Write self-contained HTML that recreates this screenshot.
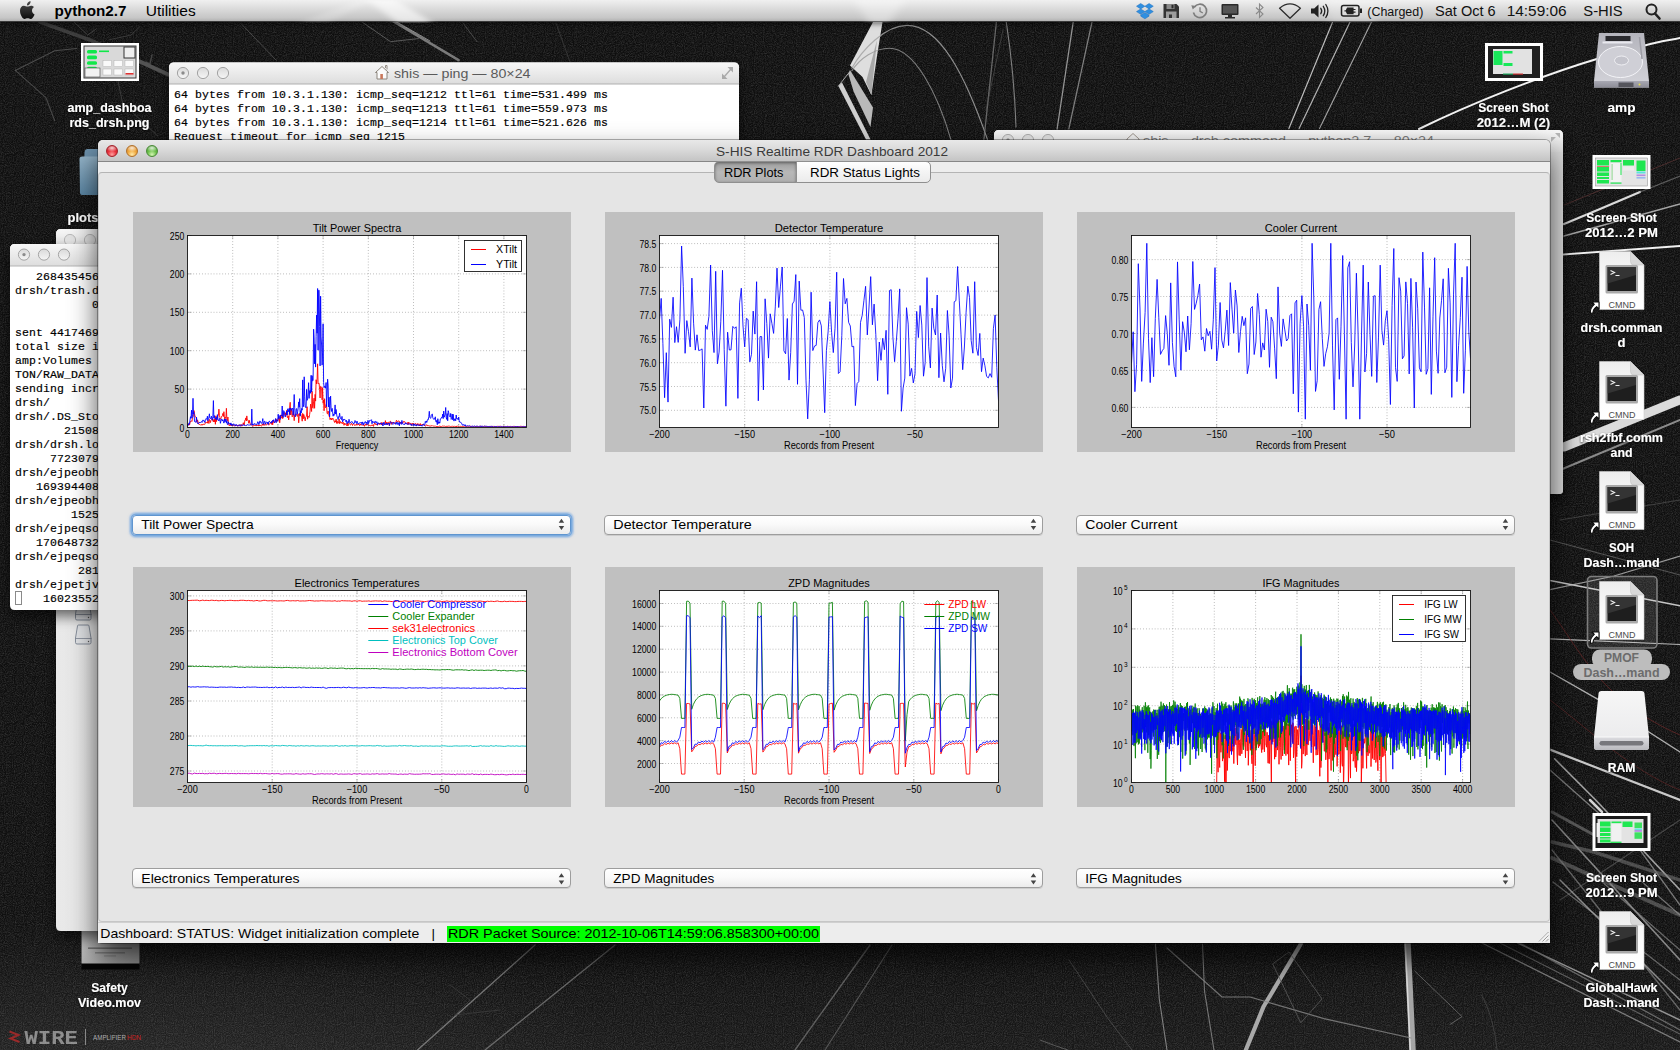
<!DOCTYPE html>
<html><head><meta charset="utf-8"><title>S-HIS Realtime RDR Dashboard 2012</title>
<style>
html,body{margin:0;padding:0;}
body{width:1680px;height:1050px;overflow:hidden;position:relative;background:#1b1b1b;font-family:"Liberation Sans",sans-serif;color:#000;}
.abs{position:absolute;}
svg{position:absolute;overflow:hidden;}
svg.plot .g{stroke:#a0a0a0;stroke-width:1;stroke-dasharray:.8 2.1;stroke-opacity:.85;}
svg.plot .t{stroke:#000;stroke-opacity:.22;stroke-width:1;}
#wall{left:0;top:0;}
/* menubar */
#menubar{position:absolute;left:0;top:0;width:1680px;height:22px;background:linear-gradient(#f0f0f0,#dcdcdc 40%,#c6c6c6 85%,#b2b2b2);border-bottom:1px solid #3a3a3a;box-sizing:border-box;box-shadow:0 2px 5px rgba(0,0,0,.5);}
/* main window */
#win{position:absolute;left:98px;top:140px;width:1452px;height:802.5px;background:#ededed;border-radius:5px 5px 4px 4px;box-shadow:0 14px 28px rgba(0,0,0,.7),0 0 0 1px rgba(0,0,0,.3);}
#win .tb{position:absolute;left:0;top:0;width:100%;height:21px;border-radius:5px 5px 0 0;background:linear-gradient(#e8e8e8,#dadada 45%,#c4c4c4);border-bottom:1px solid #868686;}
#win .tb .ttl{position:absolute;left:0;width:100%;top:3px;text-align:center;font-size:13px;color:#3c3c3c;}
.tl{position:absolute;width:12px;height:12px;border-radius:50%;top:5px;box-sizing:border-box;}
.tl.r{background:radial-gradient(ellipse 60% 38% at 50% 20%,rgba(255,255,255,.8) 0,rgba(255,255,255,0) 100%),radial-gradient(circle at 50% 85%,#ffa0a0 0,#e8303a 45%,#b5161f 100%);border:1px solid #a3222a;}
.tl.y{background:radial-gradient(ellipse 60% 38% at 50% 20%,rgba(255,255,255,.8) 0,rgba(255,255,255,0) 100%),radial-gradient(circle at 50% 85%,#ffe9a8 0,#f0a83c 45%,#c9771c 100%);border:1px solid #b0702a;}
.tl.g{background:radial-gradient(ellipse 60% 38% at 50% 20%,rgba(255,255,255,.8) 0,rgba(255,255,255,0) 100%),radial-gradient(circle at 50% 85%,#d4f5b4 0,#6cc04a 45%,#3e8f2a 100%);border:1px solid #4a8a38;}
.tl.x{background:linear-gradient(#d6d6d6,#f4f4f4);border:1px solid #9a9a9a;}
#pane{position:absolute;left:0px;top:32px;width:1452px;height:750px;background:#e5e5e5;border:1px solid #c6c6c6;border-top-color:#b4b4b4;border-radius:4px;box-sizing:border-box;}
.tabs{position:absolute;left:616px;top:21px;height:22px;}
.tab{position:absolute;top:0;height:22px;box-sizing:border-box;border:1px solid #8f8f8f;font-size:13px;line-height:20px;text-align:center;}
.tab.a{left:0;width:83px;border-radius:5px 0 0 5px;background:linear-gradient(#9c9c9c,#b8b8b8 50%,#b0b0b0);color:#111;box-shadow:inset 0 1px 3px rgba(0,0,0,.4);}
.tab.b{left:82px;width:135px;border-radius:0 5px 5px 0;background:linear-gradient(#ffffff,#f4f4f4 50%,#ebebeb);}
.dd{position:absolute;height:20px;width:439px;box-sizing:border-box;border:1px solid #9d9d9d;border-radius:4px;background:linear-gradient(#ffffff,#fafafa 45%,#ececec);box-shadow:0 1px 0 rgba(0,0,0,.10);}
.dd.f{box-shadow:0 0 0 1.5px #7aaade,0 0 1.5px 2.8px rgba(120,170,228,.5);border-color:#5f95cf;}
#status{position:absolute;left:0;top:782px;width:1452px;height:21px;background:#ededed;border-top:1px solid #d0d0d0;box-sizing:border-box;font-size:13px;line-height:19px;white-space:nowrap;}
#status .grn{position:absolute;left:349px;top:3px;width:373px;height:16px;background:#00ff00;}

</style></head>
<body>
<svg id="wall" width="1680" height="1050" viewBox="0 0 1680 1050">
<defs>
<linearGradient id="wg" x1="0" y1="0" x2="0" y2="1"><stop offset="0" stop-color="#0e0e0e"/><stop offset="0.9" stop-color="#0f0f0f"/><stop offset="1" stop-color="#181818"/></linearGradient>
<filter id="nz" x="0" y="0" width="100%" height="100%"><feTurbulence type="fractalNoise" baseFrequency="0.9" numOctaves="2" seed="3"/><feColorMatrix type="matrix" values="0 0 0 0 1  0 0 0 0 1  0 0 0 0 1  0.55 0.55 0 0 -0.42"/></filter>
<radialGradient id="wr" cx="150" cy="1110" r="520" gradientUnits="userSpaceOnUse" gradientTransform="translate(0,666) scale(1,0.4)"><stop offset="0" stop-color="#fff" stop-opacity=".065"/><stop offset="1" stop-color="#fff" stop-opacity="0"/></radialGradient>
</defs>
<rect width="1680" height="1050" fill="url(#wg)"/><rect y="800" width="900" height="250" fill="url(#wr)"/>
<rect width="1680" height="1050" filter="url(#nz)" opacity="0.34"/>
<path d="M873,22 L882.5,22 L877,56 L871.4,95 L862.5,77 L850,65.5 Z" fill="#dedede" opacity="1"/>
<path d="M877,40 L871.4,95 L866,82 Z" fill="#a8a8a8" opacity="1"/>
<path d="M850,70 L873,107.5 L870.5,127 L853.6,91.4 L848.2,73.6 Z" fill="#b9b9b9" opacity="1"/>
<path d="M838.4,86.1 L842,82.5 L870.5,139.6 L866,139.6 Z" fill="#cfcfcf" opacity="1"/>
<path d="M848.2,73.6 L838.4,86.1" fill="none" stroke="#bbb" stroke-width="1" opacity="0.9" stroke-linecap="round"/>
<path d="M851.8,68.2 C862,50 885,25.4 907,25.4 C940,25.4 965,75 987.5,139.6" fill="none" stroke="#a4a4a4" stroke-width="1.2" opacity="0.85" stroke-linecap="round"/>
<path d="M851.8,70.9 C860,58 875,48.2 889.3,48.2 C915,48.2 938,95 950.9,139.6" fill="none" stroke="#969696" stroke-width="1.1" opacity="0.8" stroke-linecap="round"/>
<path d="M996.4,22 L983.9,139.6" fill="none" stroke="#7a7a7a" stroke-width="1.3" opacity="0.8" stroke-linecap="round"/>
<path d="M1006.3,22 C1012,60 1015,95 1016,127" fill="none" stroke="#9a9a9a" stroke-width="1.1" opacity="0.8" stroke-linecap="round"/>
<path d="M1003,30 L986,110" fill="none" stroke="#555" stroke-width="1" opacity="0.6" stroke-linecap="round"/>
<path d="M1073.2,22 L1057.1,129" fill="none" stroke="#aaa" stroke-width="1.3" opacity="0.85" stroke-linecap="round"/>
<path d="M1092,22 L1068.8,129" fill="none" stroke="#9a9a9a" stroke-width="1.2" opacity="0.8" stroke-linecap="round"/>
<path d="M1332.6,22 L1288.9,128.6" fill="none" stroke="#cfcfcf" stroke-width="1.2" opacity="0.9" stroke-linecap="round"/>
<path d="M1350,22 L1299.1,128.6" fill="none" stroke="#c4c4c4" stroke-width="1.2" opacity="0.9" stroke-linecap="round"/>
<path d="M1371.5,22 L1319.5,128.6" fill="none" stroke="#bdbdbd" stroke-width="1.1" opacity="0.85" stroke-linecap="round"/>
<path d="M40,22 L90,40 L140,61.6 L170,75" fill="none" stroke="#4a4a4a" stroke-width="3.5" opacity="0.75" stroke-linecap="round"/>
<path d="M140,61.6 L168.6,74.7" fill="none" stroke="#5c5c5c" stroke-width="4" opacity="0.7" stroke-linecap="round"/>
<path d="M15.3,70.4 L54.7,50.7 L76.6,48.5" fill="none" stroke="#5a5a5a" stroke-width="1.1" opacity="0.8" stroke-linecap="round"/>
<path d="M15.3,70.4 L46,97.7 L54.7,120.7" fill="none" stroke="#555" stroke-width="1.1" opacity="0.8" stroke-linecap="round"/>
<path d="M74,22 L87.6,35 L96,29" fill="none" stroke="#484848" stroke-width="1" opacity="0.8" stroke-linecap="round"/>
<path d="M118,81 L122.6,103 L157.7,136" fill="none" stroke="#444" stroke-width="1" opacity="0.8" stroke-linecap="round"/>
<path d="M140,26.6 L131,35 L109.5,39.7" fill="none" stroke="#444" stroke-width="1" opacity="0.7" stroke-linecap="round"/>
<path d="M152,55 L150,64 L146,62" fill="none" stroke="#555" stroke-width="1.5" opacity="0.7" stroke-linecap="round"/>
<path d="M393.6,21.5 L458.6,60.2" fill="none" stroke="#8c8c8c" stroke-width="2.6" opacity="0.85" stroke-linecap="round"/>
<path d="M396,21.5 L430,41" fill="none" stroke="#bbb" stroke-width="1" opacity="0.7" stroke-linecap="round"/>
<path d="M362.7,22.5 L390.5,41.7 L418.4,38.6" fill="none" stroke="#6a6a6a" stroke-width="1" opacity="0.8" stroke-linecap="round"/>
<path d="M242,24.6 L276,60" fill="none" stroke="#555" stroke-width="1" opacity="0.8" stroke-linecap="round"/>
<path d="M463,23 L477,41.7" fill="none" stroke="#555" stroke-width="1" opacity="0.8" stroke-linecap="round"/>
<path d="M556,23 L570,62" fill="none" stroke="#3c3c3c" stroke-width="1" opacity="0.8" stroke-linecap="round"/>
<path d="M1419,129 C1470,104 1540,76 1600,58 S1660,42 1680,38" fill="none" stroke="#f2f2f2" stroke-width="2.0" opacity="1" stroke-linecap="round"/>
<path d="M1550,255.500 L1680,246" fill="none" stroke="#f0f0f0" stroke-width="1.8" opacity="1" stroke-linecap="round"/>
<path d="M1564,224 L1600,209 L1640,192" fill="none" stroke="#e6e6e6" stroke-width="2.2" opacity="0.95" stroke-linecap="round"/>
<path d="M1640,192 L1680,176" fill="none" stroke="#777" stroke-width="1.2" opacity="0.7" stroke-linecap="round"/>
<path d="M1564,236 L1680,204" fill="none" stroke="#bdbdbd" stroke-width="1.4" opacity="0.85" stroke-linecap="round"/>
<path d="M1564,205 L1680,158" fill="none" stroke="#6b3a3a" stroke-width="1" opacity="0.6" stroke-linecap="round"/>
<path d="M1564,447 L1680,400" fill="none" stroke="#ececec" stroke-width="9" opacity="0.92" stroke-linecap="round"/>
<path d="M1560,470 L1680,420" fill="none" stroke="#bbb" stroke-width="2" opacity="0.7" stroke-linecap="round"/>
<path d="M1550,580.6 L1680,605.7" fill="none" stroke="#d8d8d8" stroke-width="1.5" opacity="0.9" stroke-linecap="round"/>
<path d="M1550,589.7 L1614,576 L1680,556" fill="none" stroke="#bbb" stroke-width="1.2" opacity="0.8" stroke-linecap="round"/>
<path d="M1550,638.8 L1680,644.5" fill="none" stroke="#d0d0d0" stroke-width="1.2" opacity="0.85" stroke-linecap="round"/>
<path d="M1550,672 L1598,699.4 L1680,752" fill="none" stroke="#c8c8c8" stroke-width="1.4" opacity="0.85" stroke-linecap="round"/>
<path d="M1550,610 C1580,650 1600,700 1680,735" fill="none" stroke="#7a2a2a" stroke-width="1" opacity="0.6" stroke-linecap="round"/>
<path d="M1550,700 C1590,730 1630,770 1680,790" fill="none" stroke="#7a2a2a" stroke-width="1" opacity="0.5" stroke-linecap="round"/>
<path d="M1550,749.6 L1680,800" fill="none" stroke="#dcdcdc" stroke-width="2.2" opacity="0.9" stroke-linecap="round"/>
<path d="M1554.6,758.8 L1595.7,800 L1680,890" fill="none" stroke="#b8b8b8" stroke-width="1.6" opacity="0.85" stroke-linecap="round"/>
<path d="M1550,770 L1640,850 L1680,905" fill="none" stroke="#999" stroke-width="1.3" opacity="0.75" stroke-linecap="round"/>
<path d="M1552,820 L1680,960" fill="none" stroke="#aaa" stroke-width="1.6" opacity="0.75" stroke-linecap="round"/>
<path d="M1552,850 L1680,1010" fill="none" stroke="#888" stroke-width="1.3" opacity="0.7" stroke-linecap="round"/>
<path d="M1560,900 L1680,820" fill="none" stroke="#666" stroke-width="1.2" opacity="0.6" stroke-linecap="round"/>
<path d="M1560,520 L1680,500" fill="none" stroke="#5a5a5a" stroke-width="1.2" opacity="0.6" stroke-linecap="round"/>
<path d="M1550,540 L1680,575" fill="none" stroke="#777" stroke-width="1.2" opacity="0.65" stroke-linecap="round"/>
<path d="M1552,842 L1594,852 L1680,880" fill="none" stroke="#7a7a7a" stroke-width="3.5" opacity="0.55" stroke-linecap="round"/>
<path d="M1552,858 L1680,915" fill="none" stroke="#858585" stroke-width="4" opacity="0.5" stroke-linecap="round"/>
<path d="M1552,812 L1596,836" fill="none" stroke="#8a8a8a" stroke-width="3" opacity="0.55" stroke-linecap="round"/>
<path d="M1590,800 L1602,812" fill="none" stroke="#e8e8e8" stroke-width="2.5" opacity="0.9" stroke-linecap="round"/>
<path d="M1482,943 L1680,1042" fill="none" stroke="#9a9a9a" stroke-width="1.3" opacity="0.75" stroke-linecap="round"/>
<path d="M1517.7,943 L1680,1020" fill="none" stroke="#b0b0b0" stroke-width="1.5" opacity="0.8" stroke-linecap="round"/>
<path d="M1500,943 L1680,1034" fill="none" stroke="#7d7d7d" stroke-width="1.1" opacity="0.7" stroke-linecap="round"/>
<path d="M1553,882 L1680,980" fill="none" stroke="#888" stroke-width="1.3" opacity="0.7" stroke-linecap="round"/>
<path d="M1560,880 L1680,1000" fill="none" stroke="#a8a8a8" stroke-width="1.5" opacity="0.8" stroke-linecap="round"/>
<path d="M1600,880 L1680,950" fill="none" stroke="#8a8a8a" stroke-width="1.2" opacity="0.7" stroke-linecap="round"/>
<path d="M1640,880 L1680,915" fill="none" stroke="#999" stroke-width="1.2" opacity="0.7" stroke-linecap="round"/>
<path d="M1481.5,995 C1490,1010 1495,1030 1497,1050" fill="none" stroke="#4c4c4c" stroke-width="1" opacity="0.7" stroke-linecap="round"/>
<path d="M535,945 L417.5,1050" fill="none" stroke="#8a8a8a" stroke-width="1.4" opacity="0.8" stroke-linecap="round"/>
<path d="M615,945 L485,1050" fill="none" stroke="#7c7c7c" stroke-width="1.3" opacity="0.8" stroke-linecap="round"/>
<path d="M450,985 L470,1000 L455,1015 L500,1010" fill="none" stroke="#3c3c3c" stroke-width="1" opacity="0.8" stroke-linecap="round"/>
<path d="M870,945 L795,1050" fill="none" stroke="#777" stroke-width="1.3" opacity="0.75" stroke-linecap="round"/>
<path d="M892,945 L825,1050" fill="none" stroke="#6c6c6c" stroke-width="1.1" opacity="0.7" stroke-linecap="round"/>
<path d="M1300.8,944 L1263.5,1006.8 L1245.8,1050" fill="none" stroke="#b8b8b8" stroke-width="4.2" opacity="0.9" stroke-linecap="round"/>
<path d="M1407.5,944 L1412.5,1050" fill="none" stroke="#b4b4b4" stroke-width="6.5" opacity="0.9" stroke-linecap="round"/>
<path d="M1405.300,944 L1410.300,1050" fill="none" stroke="#e0e0e0" stroke-width="1.5" opacity="0.9" stroke-linecap="round"/>
<path d="M1167,948 L1222,997 L1250,997 L1324,1018.6 L1411,1038" fill="none" stroke="#8a8a8a" stroke-width="1.2" opacity="0.8" stroke-linecap="round"/>
<path d="M1155.4,944 L1159.3,999 L1167,1050" fill="none" stroke="#9a9a9a" stroke-width="1.1" opacity="0.8" stroke-linecap="round"/>
<path d="M1202.5,944 L1204.5,991 L1214,1050" fill="none" stroke="#8c8c8c" stroke-width="1.1" opacity="0.8" stroke-linecap="round"/>
<path d="M1069,960 L1108,1018.6 L1132,1050" fill="none" stroke="#505050" stroke-width="1" opacity="0.8" stroke-linecap="round"/>
<path d="M1273,963.6 L1289,952 L1322,999 L1301,1022.5 Z" fill="none" stroke="#5c5c5c" stroke-width="1" opacity="0.8" stroke-linecap="round"/>
<path d="M1040,1040 L1056,1046 L1068,1050" fill="none" stroke="#666" stroke-width="1" opacity="0.8" stroke-linecap="round"/>
<path d="M1414.7,971 L1462,1016.6 L1450,1024.5" fill="none" stroke="#6e6e6e" stroke-width="1" opacity="0.8" stroke-linecap="round"/>
<path d="M1520,943 L1680,1030" fill="none" stroke="#888" stroke-width="1.3" opacity="0.7" stroke-linecap="round"/>
<g font-family="Liberation Sans, sans-serif"><text x="24.500" y="1044" font-size="20" font-weight="bold" fill="#d0d0d0" opacity=".6" textLength="53.500" lengthAdjust="spacingAndGlyphs" font-family="Liberation Mono, monospace">WIRE</text><path d="M9.500,1031.500 l9,3.500 l-8,3.500 l9,3.500" stroke="#b52a2a" stroke-width="2" fill="none" opacity=".8"/><rect x="85" y="1029" width="1" height="16" fill="#888"/><text x="93" y="1040" font-size="7" fill="#aaa" textLength="33" lengthAdjust="spacingAndGlyphs">AMPLIFIER</text><text x="127" y="1040" font-size="7" fill="#c22" textLength="14" lengthAdjust="spacingAndGlyphs">HDN</text></g>
</svg>
<svg id="icons" style="left:0;top:0" width="1680" height="1050" viewBox="0 0 1680 1050" font-family="Liberation Sans, sans-serif">
<defs>
<filter id="ts" x="-10%" y="-30%" width="120%" height="170%"><feDropShadow dx="0" dy="1" stdDeviation="0.9" flood-color="#000" flood-opacity=".95"/></filter>
<linearGradient id="docg" x1="0" y1="0" x2="0" y2="1"><stop offset="0" stop-color="#ededed"/><stop offset=".5" stop-color="#fbfbfb"/><stop offset="1" stop-color="#ffffff"/></linearGradient>
<linearGradient id="hddg" x1="0" y1="0" x2="0" y2="1"><stop offset="0" stop-color="#b4b4bc"/><stop offset="1" stop-color="#d4d4da"/></linearGradient>
<linearGradient id="hddf" x1="0" y1="0" x2="0" y2="1"><stop offset="0" stop-color="#a8a8b2"/><stop offset="1" stop-color="#8c8c96"/></linearGradient>
<linearGradient id="ramg" x1="0" y1="0" x2="0" y2="1"><stop offset="0" stop-color="#f6f6f6"/><stop offset="1" stop-color="#e9e9eb"/></linearGradient>
<linearGradient id="ramf" x1="0" y1="0" x2="0" y2="1"><stop offset="0" stop-color="#dcdce0"/><stop offset="1" stop-color="#b9b9be"/></linearGradient>
<linearGradient id="svg1" x1="0" y1="0" x2="1" y2="1"><stop offset="0" stop-color="#d4d4d4"/><stop offset="1" stop-color="#8e8e8e"/></linearGradient>
<linearGradient id="foldg" x1="0" y1="0" x2="0" y2="1"><stop offset="0" stop-color="#94b4c9"/><stop offset="1" stop-color="#5b86a4"/></linearGradient>
</defs>
<rect x="81.0" y="43" width="58" height="38" fill="#fff"/>
<rect x="84.0" y="46" width="52" height="32" fill="#d9d9d9" stroke="#3a3a3a" stroke-width="1"/>
<rect x="87.0" y="50.0" width="10" height="3.6" rx="1.5" fill="#10e84a"/>
<rect x="87.0" y="55.6" width="10" height="3.6" rx="1.5" fill="#10e84a"/>
<rect x="87.0" y="61.2" width="10" height="3.6" rx="1.5" fill="#10e84a"/>
<rect x="87.0" y="66.8" width="10" height="3.6" rx="1.5" fill="#10e84a"/>
<rect x="99.0" y="50.5" width="10" height="1.6" fill="#10e84a"/>
<rect x="124.0" y="47" width="11" height="11" fill="#eee" stroke="#333" stroke-width="1"/>
<rect x="103.0" y="60.5" width="8.5" height="6" fill="#fafafa" stroke="#aaa" stroke-width=".4"/>
<rect x="114.0" y="60.5" width="8.5" height="6" fill="#fafafa" stroke="#aaa" stroke-width=".4"/>
<rect x="125.0" y="60.5" width="8.5" height="6" fill="#fafafa" stroke="#aaa" stroke-width=".4"/>
<rect x="103.0" y="69.0" width="8.5" height="6" fill="#fafafa" stroke="#aaa" stroke-width=".4"/>
<rect x="114.0" y="69.0" width="8.5" height="6" fill="#fafafa" stroke="#aaa" stroke-width=".4"/>
<rect x="125.0" y="69.0" width="8.5" height="6" fill="#fafafa" stroke="#aaa" stroke-width=".4"/>
<rect x="125.5" y="73" width="8" height="1.6" fill="#d33"/>
<rect x="85.0" y="68" width="15" height="9" fill="#f1f1f1" stroke="#444" stroke-width=".6"/>
<text x="109.5" y="111.5" text-anchor="middle" font-size="12.5" font-weight="bold" fill="#fff" textLength="84" lengthAdjust="spacingAndGlyphs" filter="url(#ts)">amp_dashboa</text>
<text x="109.5" y="126.5" text-anchor="middle" font-size="12.5" font-weight="bold" fill="#fff" textLength="80" lengthAdjust="spacingAndGlyphs" filter="url(#ts)">rds_drsh.png</text>
<path d="M84.5,152 q0.5,-3 3,-3 h16 l4,4.5 h31 q2.5,0 2.5,2.500 v36 h-58 Z" fill="#6d92ad"/><path d="M79.5,159 q0,-2.5 2.5,-2.5 h55 q2.5,0 2.5,2.5 l-0.5,34 q0,2 -2,2 h-55 q-2,0 -2,-2 Z" fill="url(#foldg)"/>
<text x="83" y="221.5" text-anchor="middle" font-size="12.5" font-weight="bold" fill="#fff" textLength="31" lengthAdjust="spacingAndGlyphs" filter="url(#ts)">plots</text>
<rect x="81.5" y="925" width="58" height="44.500" fill="#050505"/><rect x="81.5" y="925" width="58" height="38.500" fill="url(#svg1)"/>
<rect x="88" y="947.500" width="44" height="1.300" fill="#555" opacity=".8"/><rect x="95" y="952.300" width="30" height="1.100" fill="#666" opacity=".8"/><rect x="104" y="955.500" width="12" height=".9" fill="#777" opacity=".8"/>
<text x="109.5" y="991.5" text-anchor="middle" font-size="12.5" font-weight="bold" fill="#fff" textLength="36.5" lengthAdjust="spacingAndGlyphs" filter="url(#ts)">Safety</text>
<text x="109.5" y="1006.5" text-anchor="middle" font-size="12.5" font-weight="bold" fill="#fff" textLength="63" lengthAdjust="spacingAndGlyphs" filter="url(#ts)">Video.mov</text>
<rect x="1485.0" y="43" width="58" height="38" fill="#fff"/>
<rect x="1488.0" y="46" width="52" height="32" fill="#202020"/>
<rect x="1493.0" y="49" width="39" height="25" fill="#e2e2e2"/>
<rect x="1493.5" y="51" width="9" height="14" fill="#19e85a"/><rect x="1503.5" y="51" width="9" height="2.5" fill="#19e85a"/><rect x="1503.5" y="63" width="9" height="3" fill="#19e85a"/>
<rect x="1503.0" y="73.5" width="10" height="1.2" fill="#1aa45a"/><rect x="1513.0" y="73.5" width="10" height="1.2" fill="#c33"/>
<text x="1513.5" y="111.5" text-anchor="middle" font-size="12.5" font-weight="bold" fill="#fff" textLength="70.5" lengthAdjust="spacingAndGlyphs" filter="url(#ts)">Screen Shot</text>
<text x="1513.5" y="126.5" text-anchor="middle" font-size="12.5" font-weight="bold" fill="#fff" textLength="73.5" lengthAdjust="spacingAndGlyphs" filter="url(#ts)">2012…M (2)</text>
<path d="M1599.0,33 h45 l5,48 v6.5 h-55 v-6.5 Z" fill="url(#hddg)"/>
<path d="M1594.0,81 h55 v6.5 h-55 Z" fill="url(#hddf)"/>
<rect x="1618.5" y="82.5" width="15" height="4.5" fill="#55555c"/><circle cx="1639.5" cy="84.5" r="1" fill="#e8e04a"/>
<ellipse cx="1620.5" cy="62" rx="22" ry="15.5" fill="#cfcfd6" stroke="#f4f4f8" stroke-width="1"/>
<ellipse cx="1621.5" cy="60.5" rx="7" ry="4.5" fill="#c4c4cc" stroke="#f0f0f4" stroke-width="1"/>
<rect x="1605.5" y="36" width="25" height="5" fill="#2a2a2e"/><rect x="1602.5" y="41.5" width="30" height="2" fill="#e8e8ee"/>
<path d="M1639.5,37 l2.5,22" stroke="#9c9ca4" stroke-width="1.5"/>
<text x="1621.5" y="111.5" text-anchor="middle" font-size="12.5" font-weight="bold" fill="#fff" textLength="28" lengthAdjust="spacingAndGlyphs" filter="url(#ts)">amp</text>
<rect x="1592.5" y="155" width="58" height="34" fill="#fff"/>
<rect x="1595.5" y="158" width="52" height="28" fill="#e4e4e4" stroke="#888" stroke-width=".5"/>
<rect x="1597.0" y="160" width="12" height="5.5" fill="#1fe650"/>
<rect x="1597.0" y="167" width="12" height="4.5" fill="#1fe650"/>
<rect x="1597.0" y="172.5" width="12" height="3.5" fill="#1fe650"/>
<rect x="1597.0" y="177" width="12" height="2" fill="#1fe650"/>
<rect x="1597.0" y="180" width="12" height="3.5" fill="#1fe650"/>
<rect x="1597.0" y="166" width="12" height=".8" fill="#d55"/>
<rect x="1610.5" y="160" width="11" height="2.2" fill="#1fe650"/><rect x="1610.5" y="182.5" width="11" height="1.2" fill="#1fe650"/>
<rect x="1610.5" y="163" width="11" height="19" fill="#f2f2f2"/><rect x="1611.5" y="164" width="1.2" height="16" fill="#6c6" opacity=".6"/><rect x="1620.5" y="163" width="1" height="12" fill="#1fe650"/>
<rect x="1623.0" y="160" width="11" height="5.5" fill="#1fe650"/><rect x="1623.0" y="166.5" width="11" height="4" fill="#ededed"/>
<rect x="1636.5" y="160.5" width="9" height="10.500" fill="#1fe650"/><rect x="1636.5" y="171.5" width="9" height="2" fill="#5ce0e0"/><rect x="1636.5" y="174.5" width="9" height="1.600" fill="#b58ae0"/><rect x="1636.5" y="177" width="9" height="1.600" fill="#9ab8ee"/>
<text x="1621.5" y="221.5" text-anchor="middle" font-size="12.5" font-weight="bold" fill="#fff" textLength="70.7" lengthAdjust="spacingAndGlyphs" filter="url(#ts)">Screen Shot</text>
<text x="1621.5" y="236.5" text-anchor="middle" font-size="12.5" font-weight="bold" fill="#fff" textLength="73" lengthAdjust="spacingAndGlyphs" filter="url(#ts)">2012…2 PM</text>
<path d="M1599.5,251.5 h31 l13.5,13.5 v44.5 h-44.5 Z" fill="url(#docg)" stroke="#cfcfcf" stroke-width=".6"/>
<path d="M1630.5,251.5 v10 q0,3.5 3.5,3.5 h10 Z" fill="#d9d9d9" stroke="#bdbdbd" stroke-width=".5"/>
<rect x="1605.5" y="265.0" width="32.5" height="28.5" rx="1.5" fill="#a9a9a9"/>
<rect x="1607.5" y="267.0" width="28.5" height="24" fill="#1e1e1e"/>
<path d="M1607.5,267.0 h28.5 v8 L1607.5,283.5 Z" fill="#3a3a3a" opacity=".8"/>
<path d="M1610.5,270.5 l4,2 l-4,2 M1615.5,275.5 h4" stroke="#eee" stroke-width="1.2" fill="none"/>
<text x="1622.0" y="307.5" text-anchor="middle" font-size="9.5" fill="#4a4a4a" textLength="27" lengthAdjust="spacingAndGlyphs">CMND</text>
<path d="M1599.0,302.0 h-7 l2.300,2.300 c-3.300,2.800 -4.300,5.600 -3.900,9.200 l2.600,-0.600 c0,-2.600 1.100,-4.600 3.600,-6.300 l2.400,2.400 Z" fill="#fff" stroke="#0c0c0c" stroke-width="1.100" stroke-linejoin="round"/>
<text x="1621.5" y="331.5" text-anchor="middle" font-size="12.5" font-weight="bold" fill="#fff" textLength="82" lengthAdjust="spacingAndGlyphs" filter="url(#ts)">drsh.comman</text>
<text x="1621.5" y="346.5" text-anchor="middle" font-size="12.5" font-weight="bold" fill="#fff" textLength="8" lengthAdjust="spacingAndGlyphs" filter="url(#ts)">d</text>
<path d="M1599.5,361.5 h31 l13.5,13.5 v44.5 h-44.5 Z" fill="url(#docg)" stroke="#cfcfcf" stroke-width=".6"/>
<path d="M1630.5,361.5 v10 q0,3.5 3.5,3.5 h10 Z" fill="#d9d9d9" stroke="#bdbdbd" stroke-width=".5"/>
<rect x="1605.5" y="375.0" width="32.5" height="28.5" rx="1.5" fill="#a9a9a9"/>
<rect x="1607.5" y="377.0" width="28.5" height="24" fill="#1e1e1e"/>
<path d="M1607.5,377.0 h28.5 v8 L1607.5,393.5 Z" fill="#3a3a3a" opacity=".8"/>
<path d="M1610.5,380.5 l4,2 l-4,2 M1615.5,385.5 h4" stroke="#eee" stroke-width="1.2" fill="none"/>
<text x="1622.0" y="417.5" text-anchor="middle" font-size="9.5" fill="#4a4a4a" textLength="27" lengthAdjust="spacingAndGlyphs">CMND</text>
<path d="M1599.0,412.0 h-7 l2.300,2.300 c-3.300,2.800 -4.300,5.600 -3.900,9.200 l2.600,-0.600 c0,-2.600 1.100,-4.600 3.600,-6.300 l2.400,2.400 Z" fill="#fff" stroke="#0c0c0c" stroke-width="1.100" stroke-linejoin="round"/>
<text x="1621.5" y="441.5" text-anchor="middle" font-size="12.5" font-weight="bold" fill="#fff" textLength="83" lengthAdjust="spacingAndGlyphs" filter="url(#ts)">rsh2fbf.comm</text>
<text x="1621.5" y="456.5" text-anchor="middle" font-size="12.5" font-weight="bold" fill="#fff" textLength="22" lengthAdjust="spacingAndGlyphs" filter="url(#ts)">and</text>
<path d="M1599.5,471.5 h31 l13.5,13.5 v44.5 h-44.5 Z" fill="url(#docg)" stroke="#cfcfcf" stroke-width=".6"/>
<path d="M1630.5,471.5 v10 q0,3.5 3.5,3.5 h10 Z" fill="#d9d9d9" stroke="#bdbdbd" stroke-width=".5"/>
<rect x="1605.5" y="485.0" width="32.5" height="28.5" rx="1.5" fill="#a9a9a9"/>
<rect x="1607.5" y="487.0" width="28.5" height="24" fill="#1e1e1e"/>
<path d="M1607.5,487.0 h28.5 v8 L1607.5,503.5 Z" fill="#3a3a3a" opacity=".8"/>
<path d="M1610.5,490.5 l4,2 l-4,2 M1615.5,495.5 h4" stroke="#eee" stroke-width="1.2" fill="none"/>
<text x="1622.0" y="527.5" text-anchor="middle" font-size="9.5" fill="#4a4a4a" textLength="27" lengthAdjust="spacingAndGlyphs">CMND</text>
<path d="M1599.0,522.0 h-7 l2.300,2.300 c-3.300,2.800 -4.300,5.600 -3.900,9.200 l2.600,-0.600 c0,-2.600 1.100,-4.600 3.600,-6.300 l2.400,2.400 Z" fill="#fff" stroke="#0c0c0c" stroke-width="1.100" stroke-linejoin="round"/>
<text x="1621.5" y="551.5" text-anchor="middle" font-size="12.5" font-weight="bold" fill="#fff" textLength="25" lengthAdjust="spacingAndGlyphs" filter="url(#ts)">SOH</text>
<text x="1621.5" y="566.5" text-anchor="middle" font-size="12.5" font-weight="bold" fill="#fff" textLength="76" lengthAdjust="spacingAndGlyphs" filter="url(#ts)">Dash…mand</text>
<rect x="1587.5" y="576.5" width="69.500" height="71.500" rx="4" fill="rgba(255,255,255,.10)" stroke="#7d7d7d" stroke-width="1.6"/>
<path d="M1599.5,581.5 h31 l13.5,13.5 v44.5 h-44.5 Z" fill="url(#docg)" stroke="#cfcfcf" stroke-width=".6"/>
<path d="M1630.5,581.5 v10 q0,3.5 3.5,3.5 h10 Z" fill="#d9d9d9" stroke="#bdbdbd" stroke-width=".5"/>
<rect x="1605.5" y="595.0" width="32.5" height="28.5" rx="1.5" fill="#a9a9a9"/>
<rect x="1607.5" y="597.0" width="28.5" height="24" fill="#1e1e1e"/>
<path d="M1607.5,597.0 h28.5 v8 L1607.5,613.5 Z" fill="#3a3a3a" opacity=".8"/>
<path d="M1610.5,600.5 l4,2 l-4,2 M1615.5,605.5 h4" stroke="#eee" stroke-width="1.2" fill="none"/>
<text x="1622.0" y="637.5" text-anchor="middle" font-size="9.5" fill="#4a4a4a" textLength="27" lengthAdjust="spacingAndGlyphs">CMND</text>
<path d="M1599.0,632.0 h-7 l2.300,2.300 c-3.300,2.800 -4.300,5.600 -3.900,9.200 l2.600,-0.600 c0,-2.600 1.100,-4.600 3.600,-6.300 l2.400,2.400 Z" fill="#fff" stroke="#0c0c0c" stroke-width="1.100" stroke-linejoin="round"/>
<rect x="1592.0" y="649.500" width="60" height="18" rx="8" fill="#bdbdbd"/><rect x="1573.0" y="664" width="97" height="16" rx="8" fill="#bdbdbd"/>
<text x="1621.5" y="661.5" text-anchor="middle" font-size="12.5" font-weight="bold" fill="#6c6c6c" textLength="35" lengthAdjust="spacingAndGlyphs">PMOF</text>
<text x="1621.5" y="676.5" text-anchor="middle" font-size="12.5" font-weight="bold" fill="#6c6c6c" textLength="76" lengthAdjust="spacingAndGlyphs">Dash…mand</text>
<path d="M1598.5,694 q0,-3 3,-3 h40 q3,0 3,3 l4.500,43 v10 q0,3 -3,3 h-49 q-3,0 -3,-3 v-10 Z" fill="url(#ramg)"/>
<path d="M1594.0,737 h55 v10 q0,3 -3,3 h-49 q-3,0 -3,-3 Z" fill="url(#ramf)"/>
<path d="M1594.0,737 h55" stroke="#fff" stroke-width="1" opacity=".8"/>
<rect x="1599.5" y="741" width="44" height="4.500" rx="2.200" fill="#77777c"/>
<text x="1621.5" y="771.5" text-anchor="middle" font-size="12.5" font-weight="bold" fill="#fff" textLength="27.7" lengthAdjust="spacingAndGlyphs" filter="url(#ts)">RAM</text>
<rect x="1592.5" y="813" width="58" height="38" fill="#fff"/>
<rect x="1595.5" y="816" width="52" height="32" fill="#1a1a1a"/>
<rect x="1597.5" y="819" width="46" height="24" fill="#e3e3e3"/><rect x="1596.5" y="823" width="3" height="14" fill="#f2f2f2"/>
<rect x="1600.0" y="821.5" width="10.500" height="5" fill="#1ee850"/>
<rect x="1600.0" y="827.5" width="10.500" height="4.5" fill="#1ee850"/>
<rect x="1600.0" y="833" width="10.500" height="3" fill="#1ee850"/>
<rect x="1600.0" y="837" width="10.500" height="1.6" fill="#1ee850"/>
<rect x="1600.0" y="839.5" width="10.500" height="3" fill="#1ee850"/>
<rect x="1611.5" y="821.5" width="10" height="1.800" fill="#1ee850"/><rect x="1611.5" y="823.5" width="10" height="17.500" fill="#f1f1f1"/><rect x="1610.5" y="841.7" width="11" height="1.200" fill="#1ee850"/>
<rect x="1622.5" y="821.5" width="10" height="5.500" fill="#1ee850"/>
<rect x="1634.5" y="822.5" width="7.500" height="5.500" fill="#3ee060"/><rect x="1634.5" y="828.5" width="7.500" height="1.300" fill="#4fe0e0"/><rect x="1634.5" y="830.3" width="7.500" height="1.300" fill="#a070e0"/><rect x="1634.5" y="832.3" width="7.500" height="6.500" fill="#3ee060"/>
<text x="1621.5" y="881.5" text-anchor="middle" font-size="12.5" font-weight="bold" fill="#fff" textLength="71" lengthAdjust="spacingAndGlyphs" filter="url(#ts)">Screen Shot</text>
<text x="1621.5" y="896.5" text-anchor="middle" font-size="12.5" font-weight="bold" fill="#fff" textLength="72" lengthAdjust="spacingAndGlyphs" filter="url(#ts)">2012…9 PM</text>
<path d="M1599.5,911.5 h31 l13.5,13.5 v44.5 h-44.5 Z" fill="url(#docg)" stroke="#cfcfcf" stroke-width=".6"/>
<path d="M1630.5,911.5 v10 q0,3.5 3.5,3.5 h10 Z" fill="#d9d9d9" stroke="#bdbdbd" stroke-width=".5"/>
<rect x="1605.5" y="925.0" width="32.5" height="28.5" rx="1.5" fill="#a9a9a9"/>
<rect x="1607.5" y="927.0" width="28.5" height="24" fill="#1e1e1e"/>
<path d="M1607.5,927.0 h28.5 v8 L1607.5,943.5 Z" fill="#3a3a3a" opacity=".8"/>
<path d="M1610.5,930.5 l4,2 l-4,2 M1615.5,935.5 h4" stroke="#eee" stroke-width="1.2" fill="none"/>
<text x="1622.0" y="967.5" text-anchor="middle" font-size="9.5" fill="#4a4a4a" textLength="27" lengthAdjust="spacingAndGlyphs">CMND</text>
<path d="M1599.0,962.0 h-7 l2.300,2.300 c-3.300,2.800 -4.300,5.600 -3.900,9.200 l2.600,-0.600 c0,-2.600 1.100,-4.600 3.600,-6.300 l2.400,2.400 Z" fill="#fff" stroke="#0c0c0c" stroke-width="1.100" stroke-linejoin="round"/>
<text x="1621.5" y="991.5" text-anchor="middle" font-size="12.5" font-weight="bold" fill="#fff" textLength="72" lengthAdjust="spacingAndGlyphs" filter="url(#ts)">GlobalHawk</text>
<text x="1621.5" y="1006.5" text-anchor="middle" font-size="12.5" font-weight="bold" fill="#fff" textLength="76" lengthAdjust="spacingAndGlyphs" filter="url(#ts)">Dash…mand</text>
</svg>
<svg id="bw" style="left:0;top:0" width="1680" height="1050" viewBox="0 0 1680 1050" font-family="Liberation Sans, sans-serif">
<defs>
<linearGradient id="tbg" x1="0" y1="0" x2="0" y2="1"><stop offset="0" stop-color="#f7f7f7"/><stop offset="1" stop-color="#dddddd"/></linearGradient>
<linearGradient id="lg" x1="0" y1="0" x2="0" y2="1"><stop offset="0" stop-color="#d9d9d9"/><stop offset="1" stop-color="#f6f6f6"/></linearGradient>
<linearGradient id="fsb" x1="0" y1="0" x2="1" y2="0"><stop offset="0" stop-color="#e9e9e9"/><stop offset="1" stop-color="#dedede"/></linearGradient>
<filter id="ws" x="-10%" y="-10%" width="120%" height="130%"><feDropShadow dx="0" dy="6" stdDeviation="7" flood-color="#000" flood-opacity=".6"/></filter>
<clipPath id="lcl"><rect x="10" y="266" width="90" height="345"/></clipPath>
</defs>
<g filter="url(#ws)"><path d="M994,135 q0,-5 5,-5 h559 q5,0 5,5 v355 q0,4 -4,4 h-561 q-4,0 -4,-4 Z" fill="#e4e4e4"/></g>
<path d="M994,135 q0,-5 5,-5 h559 q5,0 5,5 v17 h-569 Z" fill="url(#tbg)"/>
<g opacity=".85"><circle cx="1008" cy="140" r="5.6" fill="url(#lg)" stroke="#a3a3a3" stroke-width="1"/><circle cx="1008" cy="140" r="1.7" fill="#8b8b8b"/><circle cx="1028" cy="140" r="5.6" fill="url(#lg)" stroke="#a3a3a3" stroke-width="1"/><circle cx="1048" cy="140" r="5.6" fill="url(#lg)" stroke="#a3a3a3" stroke-width="1"/></g>
<text x="1143" y="144.5" font-size="13.5" fill="#7a7a7a" text-anchor="start" textLength="291" lengthAdjust="spacingAndGlyphs" >shis — drsh.command — python2.7 — 80×24</text>
<path d="M1127,145 v-6 l6,-5.500 l6,5.500 v6 Z" fill="none" stroke="#9c948c" stroke-width="1"/>
<path d="M1550,152 h13 v338 q0,4 -4,4 h-9 Z" fill="#dadada"/>
<path d="M1551,137 l5,0 l-5,5 Z M1560,133 l0,5 l-5,-5 Z" fill="#b5b5b5"/>
<g filter="url(#ws)"><path d="M56,234 q0,-5 5,-5 h200 v702 h-200 q-5,0 -5,-5 Z" fill="url(#fsb)"/></g>
<path d="M56,234 q0,-5 5,-5 h200 v24 h-205 Z" fill="url(#tbg)"/><rect x="56" y="252.500" width="205" height="1" fill="#b8b8b8"/>
<g opacity=".7"><circle cx="70" cy="240" r="5.6" fill="url(#lg)" stroke="#a3a3a3" stroke-width="1"/><circle cx="90" cy="240" r="5.6" fill="url(#lg)" stroke="#a3a3a3" stroke-width="1"/><circle cx="110" cy="240" r="5.6" fill="url(#lg)" stroke="#a3a3a3" stroke-width="1"/></g>
<path d="M77.500,602 q0,-1 1,-1 h9.500 q1,0 1,1 l2,12 v4.500 q0,1.500 -1.500,1.500 h-12.500 q-1.500,0 -1.500,-1.500 v-4.500 Z" fill="#dfe1e4" stroke="#7c8492" stroke-width=".9"/><path d="M75.500,614.5 h16" stroke="#7c8492" stroke-width=".8"/><circle cx="88.500" cy="617.5" r=".7" fill="#555"/>
<path d="M77.500,626 q0,-1 1,-1 h9.500 q1,0 1,1 l2,12 v4.500 q0,1.500 -1.500,1.500 h-12.500 q-1.500,0 -1.500,-1.500 v-4.500 Z" fill="#dfe1e4" stroke="#7c8492" stroke-width=".9"/><path d="M75.500,638.5 h16" stroke="#7c8492" stroke-width=".8"/><circle cx="88.500" cy="641.5" r=".7" fill="#555"/>
<g filter="url(#ws)"><path d="M10,249 q0,-5 5,-5 h200 v366 h-200 q-5,0 -5,-5 Z" fill="#fff"/></g>
<path d="M10,249 q0,-5 5,-5 h200 v22 h-205 Z" fill="url(#tbg)"/><rect x="10" y="265.500" width="205" height="1" fill="#b4b4b4"/>
<circle cx="24" cy="254.6" r="5.6" fill="url(#lg)" stroke="#a3a3a3" stroke-width="1"/><circle cx="24" cy="254.6" r="1.7" fill="#8b8b8b"/><circle cx="44" cy="254.6" r="5.6" fill="url(#lg)" stroke="#a3a3a3" stroke-width="1"/><circle cx="64" cy="254.6" r="5.6" fill="url(#lg)" stroke="#a3a3a3" stroke-width="1"/>
<g font-family="Liberation Mono, monospace" font-size="11.500" fill="#000" clip-path="url(#lcl)" stroke="#000" stroke-width=".18">
<text x="36" y="280.0" textLength="63" lengthAdjust="spacing">268435456</text>
<text x="15" y="294.0" textLength="84" lengthAdjust="spacing">drsh/trash.d</text>
<text x="92" y="308.0" textLength="7" lengthAdjust="spacing">0</text>
<text x="15" y="336.0" textLength="84" lengthAdjust="spacing">sent 4417469</text>
<text x="15" y="350.0" textLength="84" lengthAdjust="spacing">total size i</text>
<text x="15" y="364.0" textLength="77" lengthAdjust="spacing">amp:Volumes</text>
<text x="15" y="378.0" textLength="84" lengthAdjust="spacing">TON/RAW_DATA</text>
<text x="15" y="392.0" textLength="84" lengthAdjust="spacing">sending incr</text>
<text x="15" y="406.0" textLength="35" lengthAdjust="spacing">drsh/</text>
<text x="15" y="420.0" textLength="84" lengthAdjust="spacing">drsh/.DS_Sto</text>
<text x="64" y="434.0" textLength="35" lengthAdjust="spacing">21508</text>
<text x="15" y="448.0" textLength="84" lengthAdjust="spacing">drsh/drsh.lo</text>
<text x="50" y="462.0" textLength="49" lengthAdjust="spacing">7723079</text>
<text x="15" y="476.0" textLength="84" lengthAdjust="spacing">drsh/ejpeobh</text>
<text x="36" y="490.0" textLength="63" lengthAdjust="spacing">169394408</text>
<text x="15" y="504.0" textLength="84" lengthAdjust="spacing">drsh/ejpeobh</text>
<text x="71" y="518.0" textLength="28" lengthAdjust="spacing">1525</text>
<text x="15" y="532.0" textLength="84" lengthAdjust="spacing">drsh/ejpeqso</text>
<text x="36" y="546.0" textLength="63" lengthAdjust="spacing">170648732</text>
<text x="15" y="560.0" textLength="84" lengthAdjust="spacing">drsh/ejpeqso</text>
<text x="78" y="574.0" textLength="21" lengthAdjust="spacing">281</text>
<text x="15" y="588.0" textLength="84" lengthAdjust="spacing">drsh/ejpetjv</text>
<text x="43" y="602.0" textLength="56" lengthAdjust="spacing">16023552</text>
</g>
<rect x="15.500" y="591.500" width="6" height="13" fill="none" stroke="#8a8a8a" stroke-width="1"/>
<g filter="url(#ws)"><path d="M169,67.500 q0,-5 5,-5 h560 q5,0 5,5 v90 h-570 Z" fill="#fff"/></g>
<path d="M169,67.500 q0,-5 5,-5 h560 q5,0 5,5 v16.500 h-570 Z" fill="url(#tbg)"/><rect x="169" y="83.500" width="570" height="1" fill="#b0b0b0"/>
<circle cx="183" cy="73" r="5.6" fill="url(#lg)" stroke="#a3a3a3" stroke-width="1"/><circle cx="183" cy="73" r="1.7" fill="#8b8b8b"/><circle cx="203" cy="73" r="5.6" fill="url(#lg)" stroke="#a3a3a3" stroke-width="1"/><circle cx="223" cy="73" r="5.6" fill="url(#lg)" stroke="#a3a3a3" stroke-width="1"/>
<text x="394" y="78" font-size="13.5" fill="#5a5a5a" text-anchor="start" textLength="136.5" lengthAdjust="spacingAndGlyphs" >shis — ping — 80×24</text>
<path d="M377,79 v-6.500 h-1.500 l6.500,-6 l6.500,6 h-1.500 v6.500 Z" fill="#fbfbfb" stroke="#8c857c" stroke-width="1"/><rect x="380.300" y="74" width="2.600" height="5" fill="#c9785c"/><path d="M385.500,68 v-2.500 h1.500 v4" stroke="#8c857c" fill="none" stroke-width=".9"/>
<g fill="#a9a9a9"><path d="M733,67 l-5.500,0 l5.500,5.500 Z"/><path d="M722,79 l5.500,0 l-5.500,-5.500 Z"/></g><path d="M724,77 l7,-8" stroke="#a9a9a9" stroke-width="1.400"/>
<g font-family="Liberation Mono, monospace" font-size="11.500" fill="#000" stroke="#000" stroke-width=".18">
<text x="174" y="98.0" textLength="434" lengthAdjust="spacing">64 bytes from 10.3.1.130: icmp_seq=1212 ttl=61 time=531.499 ms</text>
<text x="174" y="112.1" textLength="434" lengthAdjust="spacing">64 bytes from 10.3.1.130: icmp_seq=1213 ttl=61 time=559.973 ms</text>
<text x="174" y="126.1" textLength="434" lengthAdjust="spacing">64 bytes from 10.3.1.130: icmp_seq=1214 ttl=61 time=521.626 ms</text>
<text x="174" y="140.2" textLength="231" lengthAdjust="spacing">Request timeout for icmp_seq 1215</text>
</g>
</svg>
<div id="menubar"></div>
<svg id="mb" style="left:0;top:0" width="1680" height="23" viewBox="0 0 1680 23" font-family="Liberation Sans, sans-serif">
<defs><filter id="mbl" x="-20%" y="-100%" width="140%" height="300%"><feGaussianBlur stdDeviation="5 1"/></filter></defs>
<g filter="url(#mbl)"><path d="M368,0 L396,0 L432,22 L396,22 Z" fill="#fff" opacity=".6"/><path d="M300,22 L360,0 L372,0 L330,22 Z" fill="#fff" opacity=".18"/>
<path d="M855,0 L905,0 L890,22 L868,22 Z" fill="#fff" opacity=".35"/><path d="M1325,0 L1385,0 L1375,22 L1330,22 Z" fill="#fff" opacity=".22"/></g>
<defs><linearGradient id="apg" x1="0" y1="0" x2="0" y2="1"><stop offset="0" stop-color="#4a4a4a"/><stop offset=".55" stop-color="#2a2a2a"/><stop offset="1" stop-color="#0c0c0c"/></linearGradient></defs>
<path d="M27.5,6.6 C26.3,6.6 25.3,5.7 23.9,5.7 C21.6,5.7 20.0,7.8 20.0,10.7 C20.0,14.6 22.6,19.0 24.6,19.0 C25.7,19.0 26.3,18.3 27.6,18.3 C28.9,18.3 29.4,19.0 30.6,19.0 C32.2,19.0 33.9,16.3 34.6,14.4 C32.9,13.7 32.0,12.3 32.0,10.6 C32.0,9.1 32.8,7.9 34.0,7.1 C33.2,6.1 32.0,5.7 31.0,5.7 C29.6,5.7 28.6,6.6 27.5,6.6 Z M30.6,1.3 C30.7,2.4 30.3,3.4 29.6,4.2 C28.9,5.0 27.9,5.5 27.0,5.4 C26.9,4.4 27.4,3.3 28.0,2.6 C28.7,1.8 29.8,1.3 30.6,1.3 Z" fill="url(#apg)"/>
<text x="54.5" y="16" font-size="14.5" fill="#000" text-anchor="start" textLength="72" lengthAdjust="spacingAndGlyphs" font-weight="bold" >python2.7</text>
<text x="145.7" y="16" font-size="14.5" fill="#000" text-anchor="start" textLength="50" lengthAdjust="spacingAndGlyphs" >Utilities</text>
<g fill="#2f8fe0" stroke="#1c6fc0" stroke-width=".5"><path d="M1140.7,3.5 l4.2,2.7 l-4.2,2.7 l-4.2,-2.700 Z"/><path d="M1149.100,3.500 l4.200,2.700 l-4.200,2.700 l-4.200,-2.700 Z"/><path d="M1140.700,8.900 l4.200,2.700 l-4.200,2.700 l-4.200,-2.700 Z" /><path d="M1149.100,8.900 l4.200,2.700 l-4.200,2.700 l-4.200,-2.700 Z"/><path d="M1144.900,12.400 l4.100,2.600 l0,1.200 l-4.100,2.600 l-4.100,-2.600 l0,-1.200 Z"/></g>
<path d="M1163.500,4 h13 l2.500,2.500 v11.500 h-15.500 Z" fill="#333"/><rect x="1166.5" y="4" width="8" height="5" fill="#8a8a8a"/><rect x="1171.500" y="4.800" width="2" height="3.500" fill="#2a2a2a"/><rect x="1166" y="11.500" width="10.500" height="6.500" fill="#9c9c9c"/><rect x="1169" y="14.500" width="3" height="3.500" fill="#333"/>
<g fill="none" stroke="#7d7d7d" stroke-width="1.600"><path d="M1194.300,7.200 a6.700,6.700 0 1 1 -0.900,5.300"/><path d="M1200,7.300 v4 l2.800,1.700" stroke-width="1.300"/></g><path d="M1191.300,5.300 l4.800,0.600 l-3.300,3.600 Z" fill="#7d7d7d"/>
<rect x="1221.500" y="4" width="17" height="11" rx="1" fill="#2a2a2a"/><rect x="1223" y="5.500" width="14" height="8" fill="#555"/><rect x="1228" y="15" width="4" height="2" fill="#2a2a2a"/><rect x="1225" y="17" width="10" height="1.500" fill="#2a2a2a"/>
<path d="M1256,7.500 l7,6.500 l-3.500,3.500 v-13.500 l3.500,3.500 l-7,6.500" fill="none" stroke="#8a8a8a" stroke-width="1.100"/>
<path d="M1290,18.200 L1279.600,8.200 Q1290,-0.300 1300.400,8.200 Z" fill="none" stroke="#2c2c2c" stroke-width="1.300" stroke-linejoin="round"/>
<path d="M1311,8.500 h3.200 l4.300,-4 v13 l-4.300,-4 h-3.200 Z" fill="#222"/><g fill="none" stroke="#222" stroke-width="1.300" stroke-linecap="round"><path d="M1320.800,8.300 q1.800,2.700 0,5.400"/><path d="M1323.300,6.300 q3,4.700 0,9.400"/><path d="M1325.800,4.500 q4.200,6.500 0,13"/></g>
<rect x="1341.500" y="5.500" width="17.500" height="10.500" rx="2" fill="none" stroke="#222" stroke-width="1.500"/><rect x="1360" y="8.500" width="2" height="4.500" fill="#222"/><path d="M1344.500,10.800 h3 M1347.500,8 h5.500 v5.600 h-5.500 q-2,-2.800 0,-5.600 Z M1353,9.500 h2.500 M1353,12.100 h2.500" fill="#222" stroke="#222" stroke-width="1.200"/>
<text x="1367.3" y="15.5" font-size="12.5" fill="#111" text-anchor="start" textLength="56" lengthAdjust="spacingAndGlyphs" >(Charged)</text>
<text x="1435" y="16" font-size="14.5" fill="#111" text-anchor="start" textLength="60.7" lengthAdjust="spacingAndGlyphs" >Sat Oct 6</text>
<text x="1506.7" y="16" font-size="14.5" fill="#111" text-anchor="start" textLength="60" lengthAdjust="spacingAndGlyphs" >14:59:06</text>
<text x="1583.3" y="16" font-size="14.5" fill="#111" text-anchor="start" textLength="39.4" lengthAdjust="spacingAndGlyphs" >S-HIS</text>
<circle cx="1651.500" cy="9.500" r="5" fill="none" stroke="#222" stroke-width="2"/><path d="M1655,13.500 l4.500,5" stroke="#222" stroke-width="2.600" stroke-linecap="round"/>
</svg>
<div id="win">
<div class="tb"><div class="tl r" style="left:8px"></div><div class="tl y" style="left:28px"></div><div class="tl g" style="left:48px"></div></div>
<div id="pane"></div>
<div class="tabs"><div class="tab a"></div><div class="tab b"></div></div>
<div class="dd f" style="left:34px;top:374.5px"></div>
<div class="dd" style="left:506px;top:374.5px"></div>
<div class="dd" style="left:978px;top:374.5px"></div>
<div class="dd" style="left:34px;top:728.1px"></div>
<div class="dd" style="left:506px;top:728.1px"></div>
<div class="dd" style="left:978px;top:728.1px"></div>
<div id="status"><span class="grn"></span></div>
</div>
<svg id="wtxt" style="left:0;top:0" width="1680" height="1050" viewBox="0 0 1680 1050" font-family="Liberation Sans, sans-serif">
<path d="M1539,941.500 l9.500,-9.500 M1542.500,941.500 l6,-6 M1546,941.500 l2.500,-2.500" stroke="#9a9a9a" stroke-width="1"/><path d="M1540,941.500 l8.500,-8.500 M1543.500,941.500 l5,-5" stroke="#fafafa" stroke-width=".8"/>
<text x="832" y="155.5" font-size="13.5" fill="#3a3a3a" text-anchor="middle" textLength="232" lengthAdjust="spacingAndGlyphs" >S-HIS Realtime RDR Dashboard 2012</text>
<text x="753.7" y="177" font-size="13.5" fill="#000" text-anchor="middle" textLength="59.5" lengthAdjust="spacingAndGlyphs" >RDR Plots</text>
<text x="865" y="177" font-size="13.5" fill="#000" text-anchor="middle" textLength="110" lengthAdjust="spacingAndGlyphs" >RDR Status Lights</text>
<text x="141.3" y="528.6" font-size="13.5" fill="#000" text-anchor="start" textLength="112.3" lengthAdjust="spacingAndGlyphs" >Tilt Power Spectra</text>
<path d="M558.7,522.7 l2.75,-3.9 l2.75,3.9 Z M558.7,525.9 h5.5 l-2.75,4.1 Z" fill="#454545"/>
<text x="613.3" y="528.6" font-size="13.5" fill="#000" text-anchor="start" textLength="138.4" lengthAdjust="spacingAndGlyphs" >Detector Temperature</text>
<path d="M1030.7,522.7 l2.75,-3.9 l2.75,3.9 Z M1030.7,525.9 h5.5 l-2.75,4.1 Z" fill="#454545"/>
<text x="1085.3" y="528.6" font-size="13.5" fill="#000" text-anchor="start" textLength="92" lengthAdjust="spacingAndGlyphs" >Cooler Current</text>
<path d="M1502.7,522.7 l2.75,-3.9 l2.75,3.9 Z M1502.7,525.9 h5.5 l-2.75,4.1 Z" fill="#454545"/>
<text x="141.3" y="883.1" font-size="13.5" fill="#000" text-anchor="start" textLength="158.3" lengthAdjust="spacingAndGlyphs" >Electronics Temperatures</text>
<path d="M558.7,877.2 l2.75,-3.9 l2.75,3.9 Z M558.7,880.4 h5.5 l-2.75,4.1 Z" fill="#454545"/>
<text x="613.3" y="883.1" font-size="13.5" fill="#000" text-anchor="start" textLength="101" lengthAdjust="spacingAndGlyphs" >ZPD Magnitudes</text>
<path d="M1030.7,877.2 l2.75,-3.9 l2.75,3.9 Z M1030.7,880.4 h5.5 l-2.75,4.1 Z" fill="#454545"/>
<text x="1085.3" y="883.1" font-size="13.5" fill="#000" text-anchor="start" textLength="96.4" lengthAdjust="spacingAndGlyphs" >IFG Magnitudes</text>
<path d="M1502.7,877.2 l2.75,-3.9 l2.75,3.9 Z M1502.7,880.4 h5.5 l-2.75,4.1 Z" fill="#454545"/>
<text x="100.3" y="938" font-size="13.5" fill="#000" text-anchor="start" textLength="319" lengthAdjust="spacingAndGlyphs" >Dashboard: STATUS: Widget initialization complete</text>
<text x="431.5" y="938" font-size="13.5" fill="#000" text-anchor="start" >|</text>
<text x="448" y="938" font-size="13.5" fill="#000" text-anchor="start" textLength="371" lengthAdjust="spacingAndGlyphs" >RDR Packet Source: 2012-10-06T14:59:06.858300+00:00</text>
</svg>
<svg class="plot" style="left:133px;top:212px" width="438" height="240" viewBox="133 212 438 240" font-family="Liberation Sans, sans-serif">
<defs><clipPath id="cp1"><rect x="187.5" y="235.5" width="339.0" height="192.0"/></clipPath></defs>
<rect x="133" y="212" width="438" height="240" fill="#c0c0c0"/>
<rect x="187.5" y="235.5" width="339.0" height="192.0" fill="#fff"/>
<line x1="232.7" y1="235.5" x2="232.7" y2="427.5" class="g"/>
<line x1="277.9" y1="235.5" x2="277.9" y2="427.5" class="g"/>
<line x1="323.1" y1="235.5" x2="323.1" y2="427.5" class="g"/>
<line x1="368.3" y1="235.5" x2="368.3" y2="427.5" class="g"/>
<line x1="413.5" y1="235.5" x2="413.5" y2="427.5" class="g"/>
<line x1="458.7" y1="235.5" x2="458.7" y2="427.5" class="g"/>
<line x1="503.9" y1="235.5" x2="503.9" y2="427.5" class="g"/>
<line x1="187.5" y1="389.1" x2="526.5" y2="389.1" class="g"/>
<line x1="187.5" y1="350.7" x2="526.5" y2="350.7" class="g"/>
<line x1="187.5" y1="312.3" x2="526.5" y2="312.3" class="g"/>
<line x1="187.5" y1="273.9" x2="526.5" y2="273.9" class="g"/>
<g clip-path="url(#cp1)">
<path d="M187.5,425.2 L188.0,425.5 L188.5,425.0 L189.0,423.7 L189.5,425.1 L190.0,422.8 L190.5,421.2 L191.0,421.7 L191.5,420.7 L192.0,421.3 L192.5,417.6 L193.0,417.1 L193.5,414.3 L194.0,410.6 L194.5,413.7 L195.0,416.5 L195.5,416.7 L196.0,417.1 L196.5,418.8 L197.0,422.3 L197.5,419.9 L198.0,421.5 L198.5,424.0 L199.0,424.3 L199.5,424.5 L200.0,424.5 L200.5,425.1 L201.0,424.9 L201.5,424.4 L202.0,425.3 L202.5,424.4 L203.0,424.9 L203.5,424.1 L204.0,424.2 L204.4,424.6 L204.9,424.3 L205.4,422.4 L205.9,422.5 L206.4,422.6 L206.9,422.2 L207.4,423.2 L207.9,420.2 L208.4,421.1 L208.9,423.5 L209.4,419.4 L209.9,420.5 L210.4,422.6 L210.9,420.5 L211.4,419.8 L211.9,418.5 L212.4,419.3 L212.9,420.9 L213.4,421.9 L213.9,419.3 L214.4,421.9 L214.9,418.9 L215.4,424.3 L215.9,415.8 L216.4,421.6 L216.9,419.4 L217.4,418.5 L217.9,416.4 L218.4,415.4 L218.9,409.1 L219.4,415.3 L219.9,417.3 L220.4,419.2 L220.9,418.4 L221.4,417.5 L221.9,416.0 L222.4,415.6 L222.9,413.4 L223.4,416.5 L223.9,411.7 L224.4,416.9 L224.9,420.1 L225.4,417.2 L225.9,417.9 L226.4,408.3 L226.9,419.8 L227.4,420.7 L227.9,417.0 L228.4,421.8 L228.9,425.4 L229.4,425.1 L229.9,425.9 L230.4,423.6 L230.9,425.5 L231.4,424.5 L231.9,425.7 L232.4,425.6 L232.9,425.7 L233.4,425.1 L233.9,425.5 L234.4,426.0 L234.9,426.1 L235.4,425.2 L235.9,425.1 L236.4,425.4 L236.9,425.5 L237.4,426.1 L237.9,426.2 L238.3,425.5 L238.8,424.8 L239.3,425.2 L239.8,425.9 L240.3,425.0 L240.8,424.6 L241.3,424.6 L241.8,426.2 L242.3,425.1 L242.8,424.5 L243.3,422.7 L243.8,424.7 L244.3,425.1 L244.8,420.3 L245.3,420.0 L245.8,417.9 L246.3,421.0 L246.8,415.9 L247.3,419.8 L247.8,419.8 L248.3,421.1 L248.8,423.3 L249.3,420.3 L249.8,423.0 L250.3,423.7 L250.8,424.8 L251.3,424.5 L251.8,425.4 L252.3,425.7 L252.8,426.5 L253.3,425.6 L253.8,425.3 L254.3,425.3 L254.8,425.7 L255.3,424.9 L255.8,425.9 L256.3,425.9 L256.8,424.8 L257.3,425.4 L257.8,425.7 L258.3,424.9 L258.8,426.1 L259.3,424.8 L259.8,425.9 L260.3,425.4 L260.8,425.5 L261.3,426.2 L261.8,425.8 L262.3,423.9 L262.8,425.2 L263.3,425.2 L263.8,423.7 L264.3,425.4 L264.8,424.5 L265.3,425.1 L265.8,424.7 L266.3,424.9 L266.8,424.9 L267.3,423.3 L267.8,424.0 L268.3,424.4 L268.8,425.2 L269.3,424.3 L269.8,423.9 L270.3,422.6 L270.8,422.0 L271.3,424.3 L271.8,424.2 L272.2,421.9 L272.7,424.8 L273.2,420.2 L273.7,422.5 L274.2,422.4 L274.7,422.1 L275.2,421.7 L275.7,421.5 L276.2,419.2 L276.7,421.3 L277.2,420.8 L277.7,420.4 L278.2,420.7 L278.7,417.0 L279.2,417.3 L279.7,422.8 L280.2,417.9 L280.7,414.9 L281.2,418.1 L281.7,417.7 L282.2,415.2 L282.7,418.7 L283.2,413.3 L283.7,413.2 L284.2,413.3 L284.7,413.5 L285.2,415.8 L285.7,412.7 L286.2,415.0 L286.7,410.3 L287.2,417.3 L287.7,417.7 L288.2,415.9 L288.7,419.9 L289.2,415.5 L289.7,407.1 L290.2,402.3 L290.7,415.0 L291.2,408.6 L291.7,412.4 L292.2,416.9 L292.7,415.6 L293.2,411.3 L293.7,414.0 L294.2,420.7 L294.7,414.8 L295.2,414.8 L295.7,414.9 L296.2,413.9 L296.7,414.6 L297.2,416.4 L297.7,416.1 L298.2,413.8 L298.7,422.8 L299.2,416.4 L299.7,413.3 L300.2,414.9 L300.7,413.4 L301.2,416.4 L301.7,416.4 L302.2,421.2 L302.7,413.4 L303.2,418.9 L303.7,414.4 L304.2,415.9 L304.7,418.8 L305.2,420.9 L305.7,417.3 L306.1,416.9 L306.6,415.0 L307.1,406.7 L307.6,419.2 L308.1,416.1 L308.6,416.7 L309.1,417.5 L309.6,414.6 L310.1,411.1 L310.6,404.1 L311.1,406.9 L311.6,411.5 L312.1,391.4 L312.6,407.7 L313.1,408.3 L313.6,401.2 L314.1,398.1 L314.6,408.3 L315.1,394.4 L315.6,401.1 L316.1,379.7 L316.6,383.9 L317.1,379.4 L317.6,363.8 L318.1,383.9 L318.6,383.5 L319.1,383.2 L319.6,389.6 L320.1,398.0 L320.6,386.3 L321.1,386.6 L321.6,388.7 L322.1,399.8 L322.6,387.6 L323.1,403.2 L323.6,399.9 L324.1,410.8 L324.6,398.7 L325.1,407.1 L325.6,407.8 L326.1,404.6 L326.6,406.1 L327.1,413.5 L327.6,413.9 L328.1,411.0 L328.6,413.4 L329.1,416.0 L329.6,417.2 L330.1,419.7 L330.6,418.0 L331.1,418.6 L331.6,420.0 L332.1,418.1 L332.6,419.3 L333.1,418.5 L333.6,419.5 L334.1,421.1 L334.6,422.5 L335.1,420.8 L335.6,422.1 L336.1,419.1 L336.6,423.4 L337.1,420.8 L337.6,423.4 L338.1,423.0 L338.6,423.0 L339.1,418.8 L339.6,423.7 L340.1,422.5 L340.5,421.5 L341.0,423.2 L341.5,423.1 L342.0,422.2 L342.5,423.6 L343.0,422.4 L343.5,422.5 L344.0,425.3 L344.5,423.3 L345.0,424.8 L345.5,424.3 L346.0,423.4 L346.5,424.6 L347.0,426.0 L347.5,423.0 L348.0,425.9 L348.5,423.7 L349.0,423.2 L349.5,424.0 L350.0,424.6 L350.5,424.9 L351.0,424.6 L351.5,423.3 L352.0,424.1 L352.5,425.5 L353.0,424.1 L353.5,423.6 L354.0,424.3 L354.5,425.4 L355.0,425.4 L355.5,425.0 L356.0,425.2 L356.5,424.1 L357.0,425.3 L357.5,424.1 L358.0,424.3 L358.5,424.4 L359.0,424.0 L359.5,425.6 L360.0,425.5 L360.5,423.9 L361.0,425.2 L361.5,424.8 L362.0,425.1 L362.5,425.1 L363.0,425.1 L363.5,425.2 L364.0,424.8 L364.5,426.3 L365.0,424.5 L365.5,424.2 L366.0,425.3 L366.5,423.9 L367.0,425.1 L367.5,424.6 L368.0,425.1 L368.5,424.9 L369.0,425.9 L369.5,425.3 L370.0,425.7 L370.5,425.8 L371.0,426.0 L371.5,425.1 L372.0,425.0 L372.5,425.5 L373.0,424.6 L373.5,426.4 L374.0,424.5 L374.4,424.0 L374.9,423.0 L375.4,424.4 L375.9,424.0 L376.4,425.0 L376.9,424.2 L377.4,425.3 L377.9,424.4 L378.4,423.9 L378.9,423.1 L379.4,424.6 L379.9,423.6 L380.4,423.0 L380.9,423.2 L381.4,424.9 L381.9,422.2 L382.4,424.3 L382.9,424.5 L383.4,423.7 L383.9,423.0 L384.4,424.5 L384.9,423.8 L385.4,420.6 L385.9,424.0 L386.4,423.3 L386.9,422.0 L387.4,424.6 L387.9,422.6 L388.4,422.3 L388.9,423.9 L389.4,425.6 L389.9,421.5 L390.4,421.2 L390.9,422.7 L391.4,424.4 L391.9,422.1 L392.4,423.1 L392.9,422.3 L393.4,422.9 L393.9,423.2 L394.4,423.6 L394.9,422.6 L395.4,423.1 L395.9,422.7 L396.4,420.3 L396.9,421.2 L397.4,421.7 L397.9,421.8 L398.4,420.7 L398.9,421.4 L399.4,421.4 L399.9,423.8 L400.4,422.2 L400.9,423.2 L401.4,422.8 L401.9,422.1 L402.4,423.2 L402.9,423.1 L403.4,421.4 L403.9,421.5 L404.4,421.5 L404.9,421.8 L405.4,423.7 L405.9,423.2 L406.4,423.8 L406.9,423.3 L407.4,422.6 L407.9,424.5 L408.3,422.1 L408.8,424.4 L409.3,422.9 L409.8,422.9 L410.3,423.2 L410.8,424.0 L411.3,423.7 L411.8,425.4 L412.3,423.2 L412.8,423.8 L413.3,423.2 L413.8,424.2 L414.3,425.0 L414.8,424.1 L415.3,423.3 L415.8,423.9 L416.3,424.5 L416.8,425.4 L417.3,423.5 L417.8,425.1 L418.3,424.0 L418.8,423.9 L419.3,424.9 L419.8,426.0 L420.3,423.5 L420.8,425.3 L421.3,424.8 L421.8,425.5 L422.3,424.0 L422.8,424.7 L423.3,424.2 L423.8,424.4 L424.3,425.5 L424.8,425.5 L425.3,426.2 L425.8,426.1 L426.3,424.9 L426.8,424.6 L427.3,425.0 L427.8,425.9 L428.3,425.7 L428.8,425.7 L429.3,425.8 L429.8,426.1 L430.3,426.4 L430.8,425.5 L431.3,425.9 L431.8,425.5 L432.3,425.6 L432.8,426.1 L433.3,426.0 L433.8,426.1 L434.3,426.1 L434.8,426.2 L435.3,426.2 L435.8,426.0 L436.3,426.5 L436.8,426.7 L437.3,426.0 L437.8,426.7 L438.3,426.0 L438.8,426.5 L439.3,426.3 L439.8,425.9 L440.3,426.1 L440.8,426.9 L441.3,426.6 L441.8,426.5 L442.2,426.3 L442.7,426.0 L443.2,426.3 L443.7,426.1 L444.2,426.3 L444.7,426.0 L445.2,426.2 L445.7,426.7 L446.2,426.8 L446.7,426.1 L447.2,425.9 L447.7,426.6 L448.2,426.1 L448.7,426.1 L449.2,426.4 L449.7,426.1 L450.2,426.3 L450.7,426.7 L451.2,426.2 L451.7,426.4 L452.2,426.3 L452.7,426.1 L453.2,426.7 L453.7,426.4 L454.2,425.9 L454.7,426.5 L455.2,426.6 L455.7,426.4 L456.2,427.0 L456.7,426.1 L457.2,426.0 L457.7,426.4 L458.2,426.7 L458.7,426.7 L459.2,426.6 L459.7,427.0 L460.2,426.4 L460.7,426.3 L461.2,426.6 L461.7,426.3 L462.2,426.8 L462.7,426.2 L463.2,426.7 L463.7,426.3 L464.2,426.6 L464.7,426.1 L465.2,426.1 L465.7,426.4 L466.2,426.5 L466.7,426.6 L467.2,426.1 L467.7,426.4 L468.2,426.7 L468.7,426.2 L469.2,426.0 L469.7,426.5 L470.2,426.4 L470.7,426.2 L471.2,426.5 L471.7,426.6 L472.2,426.3 L472.7,426.8 L473.2,426.5 L473.7,426.8 L474.2,426.6 L474.7,426.7 L475.2,426.6 L475.6,426.4 L476.1,426.9 L476.6,426.3 L477.1,426.2 L477.6,426.5 L478.1,426.7 L478.6,426.7 L479.1,426.4 L479.6,426.5 L480.1,426.4 L480.6,426.1 L481.1,426.3 L481.6,426.7 L482.1,426.7 L482.6,426.4 L483.1,426.5 L483.6,426.7 L484.1,426.2 L484.6,426.3 L485.1,426.4 L485.6,426.3 L486.1,426.9 L486.6,426.5 L487.1,426.4 L487.6,426.6 L488.1,426.5 L488.6,426.6 L489.1,426.5 L489.6,426.5 L490.1,426.6 L490.6,426.4 L491.1,426.5 L491.6,426.4 L492.1,426.9 L492.6,426.4 L493.1,426.6 L493.6,426.4 L494.1,426.4 L494.6,426.6 L495.1,426.5 L495.6,426.6 L496.1,426.3 L496.6,426.8 L497.1,426.7 L497.6,426.3 L498.1,426.3 L498.6,426.4 L499.1,426.3 L499.6,426.4 L500.1,426.3 L500.6,426.3 L501.1,426.6 L501.6,426.7 L502.1,426.5 L502.6,426.8 L503.1,426.5 L503.6,426.4 L504.1,426.3 L504.6,426.7 L505.1,426.5 L505.6,426.7 L506.1,426.9 L506.6,426.6 L507.1,426.4 L507.6,426.3 L508.1,426.2 L508.6,426.6 L509.1,426.5 L509.6,426.5 L510.0,426.6 L510.5,426.4 L511.0,426.6 L511.5,426.7 L512.0,426.9 L512.5,426.5 L513.0,426.2 L513.5,426.4 L514.0,426.7 L514.5,426.4 L515.0,426.5 L515.5,426.5 L516.0,426.7 L516.5,426.6 L517.0,427.0 L517.5,426.2 L518.0,427.1 L518.5,426.7 L519.0,426.6 L519.5,426.5 L520.0,426.5 L520.5,426.3 L521.0,426.4 L521.5,426.4 L522.0,426.3 L522.5,426.5 L523.0,426.4 L523.5,426.3 L524.0,426.8 L524.5,426.6 L525.0,426.4 L525.5,426.5 L526.0,426.5 L526.5,426.7" fill="none" stroke="#f00" stroke-width="0.9" stroke-linejoin="round"/>
<path d="M187.5,425.8 L188.0,424.0 L188.5,425.2 L189.0,422.9 L189.5,423.8 L190.0,420.0 L190.5,416.7 L191.0,418.4 L191.5,410.2 L192.0,417.9 L192.5,414.6 L193.0,398.3 L193.5,414.1 L194.0,412.6 L194.5,421.4 L195.0,421.3 L195.5,422.3 L196.0,422.0 L196.5,417.2 L197.0,421.6 L197.5,423.5 L198.0,423.6 L198.5,423.6 L199.0,423.3 L199.5,422.0 L200.0,422.9 L200.5,422.4 L201.0,422.1 L201.5,421.5 L202.0,422.5 L202.5,421.4 L203.0,419.9 L203.5,421.0 L204.0,421.1 L204.4,420.9 L204.9,422.5 L205.4,419.6 L205.9,418.7 L206.4,418.7 L206.9,419.5 L207.4,416.2 L207.9,420.7 L208.4,418.7 L208.9,417.2 L209.4,413.8 L209.9,418.4 L210.4,418.4 L210.9,418.8 L211.4,416.2 L211.9,418.4 L212.4,420.2 L212.9,416.2 L213.4,400.6 L213.9,418.2 L214.4,415.6 L214.9,418.9 L215.4,419.3 L215.9,417.5 L216.4,417.2 L216.9,420.1 L217.4,414.6 L217.9,419.3 L218.4,419.8 L218.9,421.0 L219.4,418.5 L219.9,418.7 L220.4,423.3 L220.9,421.2 L221.4,419.2 L221.9,419.0 L222.4,421.0 L222.9,419.9 L223.4,421.5 L223.9,423.1 L224.4,418.9 L224.9,422.1 L225.4,421.3 L225.9,418.9 L226.4,423.1 L226.9,420.6 L227.4,424.5 L227.9,424.7 L228.4,421.9 L228.9,423.5 L229.4,423.7 L229.9,423.3 L230.4,424.8 L230.9,422.9 L231.4,425.5 L231.9,423.9 L232.4,425.2 L232.9,425.6 L233.4,424.1 L233.9,423.7 L234.4,425.1 L234.9,425.2 L235.4,426.1 L235.9,424.4 L236.4,424.5 L236.9,425.6 L237.4,425.4 L237.9,426.2 L238.3,425.2 L238.8,425.5 L239.3,425.1 L239.8,424.6 L240.3,426.3 L240.8,425.6 L241.3,425.0 L241.8,424.8 L242.3,424.8 L242.8,425.6 L243.3,424.8 L243.8,424.6 L244.3,425.5 L244.8,425.2 L245.3,425.6 L245.8,425.0 L246.3,425.6 L246.8,425.5 L247.3,424.4 L247.8,424.9 L248.3,424.9 L248.8,425.2 L249.3,425.4 L249.8,424.6 L250.3,425.0 L250.8,424.6 L251.3,424.7 L251.8,409.1 L252.3,425.3 L252.8,424.0 L253.3,424.7 L253.8,424.8 L254.3,423.4 L254.8,424.3 L255.3,424.1 L255.8,424.2 L256.3,424.8 L256.8,424.9 L257.3,423.0 L257.8,421.7 L258.3,422.2 L258.8,424.6 L259.3,423.8 L259.8,421.0 L260.3,421.2 L260.8,422.8 L261.3,422.7 L261.8,423.5 L262.3,421.5 L262.8,418.6 L263.3,424.3 L263.8,423.3 L264.3,421.4 L264.8,421.0 L265.3,424.3 L265.8,422.6 L266.3,422.2 L266.8,422.2 L267.3,423.5 L267.8,422.1 L268.3,424.4 L268.8,421.6 L269.3,421.2 L269.8,422.0 L270.3,422.2 L270.8,422.9 L271.3,423.2 L271.8,421.2 L272.2,422.5 L272.7,420.2 L273.2,420.9 L273.7,419.7 L274.2,422.1 L274.7,422.8 L275.2,421.0 L275.7,418.4 L276.2,422.7 L276.7,421.8 L277.2,419.7 L277.7,421.1 L278.2,414.2 L278.7,418.7 L279.2,416.4 L279.7,415.6 L280.2,419.4 L280.7,415.6 L281.2,415.3 L281.7,416.0 L282.2,406.0 L282.7,416.3 L283.2,417.5 L283.7,410.6 L284.2,411.4 L284.7,413.8 L285.2,417.0 L285.7,415.6 L286.2,414.8 L286.7,411.0 L287.2,415.1 L287.7,408.8 L288.2,409.9 L288.7,411.8 L289.2,408.3 L289.7,414.5 L290.2,407.9 L290.7,408.9 L291.2,410.0 L291.7,410.4 L292.2,408.0 L292.7,409.5 L293.2,415.2 L293.7,407.1 L294.2,394.5 L294.7,407.7 L295.2,416.9 L295.7,416.1 L296.2,408.9 L296.7,408.5 L297.2,414.4 L297.7,411.6 L298.2,408.0 L298.7,401.9 L299.2,407.2 L299.7,398.6 L300.2,416.1 L300.7,410.7 L301.2,413.0 L301.7,408.4 L302.2,410.2 L302.7,379.9 L303.2,406.8 L303.7,404.9 L304.2,376.8 L304.7,396.8 L305.2,407.0 L305.7,407.0 L306.1,407.8 L306.6,389.4 L307.1,400.4 L307.6,398.8 L308.1,394.0 L308.6,382.7 L309.1,398.4 L309.6,390.9 L310.1,390.3 L310.6,393.3 L311.1,375.3 L311.6,391.9 L312.1,375.7 L312.6,380.9 L313.1,380.5 L313.6,329.2 L314.1,337.9 L314.6,363.8 L315.1,344.4 L315.6,367.1 L316.1,336.4 L316.6,315.1 L317.1,333.2 L317.6,288.5 L318.1,350.2 L318.6,290.3 L319.1,290.2 L319.6,326.3 L320.1,365.9 L320.6,296.2 L321.1,336.9 L321.6,345.0 L322.1,365.2 L322.6,352.1 L323.1,323.8 L323.6,382.4 L324.1,387.7 L324.6,386.3 L325.1,386.1 L325.6,388.2 L326.1,382.5 L326.6,406.6 L327.1,395.0 L327.6,379.2 L328.1,385.1 L328.6,407.0 L329.1,397.2 L329.6,416.8 L330.1,405.5 L330.6,396.1 L331.1,408.7 L331.6,411.5 L332.1,408.3 L332.6,411.8 L333.1,416.2 L333.6,414.2 L334.1,415.4 L334.6,411.9 L335.1,404.9 L335.6,414.1 L336.1,409.5 L336.6,414.1 L337.1,416.9 L337.6,417.3 L338.1,419.5 L338.6,416.7 L339.1,417.1 L339.6,413.2 L340.1,417.0 L340.5,418.5 L341.0,419.2 L341.5,419.5 L342.0,416.4 L342.5,421.9 L343.0,421.0 L343.5,419.3 L344.0,420.1 L344.5,419.4 L345.0,419.5 L345.5,420.4 L346.0,421.8 L346.5,420.3 L347.0,423.7 L347.5,422.1 L348.0,421.4 L348.5,422.7 L349.0,419.3 L349.5,421.2 L350.0,423.3 L350.5,422.4 L351.0,422.0 L351.5,421.8 L352.0,421.4 L352.5,422.7 L353.0,422.6 L353.5,423.8 L354.0,423.1 L354.5,423.1 L355.0,420.5 L355.5,421.9 L356.0,422.7 L356.5,423.5 L357.0,421.1 L357.5,423.2 L358.0,423.9 L358.5,424.1 L359.0,422.9 L359.5,423.0 L360.0,422.7 L360.5,422.7 L361.0,422.8 L361.5,422.2 L362.0,424.6 L362.5,421.9 L363.0,423.2 L363.5,425.0 L364.0,422.8 L364.5,423.3 L365.0,421.6 L365.5,421.7 L366.0,423.2 L366.5,422.2 L367.0,424.5 L367.5,423.2 L368.0,420.3 L368.5,423.7 L369.0,422.3 L369.5,420.6 L370.0,420.8 L370.5,420.2 L371.0,420.2 L371.5,419.7 L372.0,423.8 L372.5,421.2 L373.0,422.4 L373.5,422.1 L374.0,422.5 L374.4,421.7 L374.9,423.1 L375.4,421.4 L375.9,421.3 L376.4,422.6 L376.9,421.8 L377.4,425.1 L377.9,422.7 L378.4,423.1 L378.9,423.3 L379.4,424.1 L379.9,423.4 L380.4,423.1 L380.9,424.3 L381.4,423.5 L381.9,424.1 L382.4,423.3 L382.9,426.0 L383.4,424.6 L383.9,422.1 L384.4,423.8 L384.9,425.0 L385.4,424.4 L385.9,424.3 L386.4,423.0 L386.9,425.0 L387.4,424.1 L387.9,423.5 L388.4,424.1 L388.9,423.0 L389.4,425.6 L389.9,423.8 L390.4,422.7 L390.9,421.8 L391.4,422.5 L391.9,422.8 L392.4,423.6 L392.9,424.5 L393.4,422.1 L393.9,422.8 L394.4,423.1 L394.9,422.9 L395.4,423.0 L395.9,424.5 L396.4,422.2 L396.9,423.6 L397.4,422.5 L397.9,424.8 L398.4,424.3 L398.9,422.5 L399.4,425.8 L399.9,422.6 L400.4,422.4 L400.9,423.5 L401.4,424.4 L401.9,420.4 L402.4,423.3 L402.9,424.1 L403.4,424.4 L403.9,423.8 L404.4,424.7 L404.9,423.7 L405.4,423.8 L405.9,422.7 L406.4,424.0 L406.9,423.8 L407.4,423.8 L407.9,424.6 L408.3,423.8 L408.8,423.6 L409.3,423.8 L409.8,424.1 L410.3,424.6 L410.8,423.8 L411.3,425.6 L411.8,424.5 L412.3,425.1 L412.8,424.8 L413.3,425.6 L413.8,423.7 L414.3,425.4 L414.8,424.4 L415.3,425.5 L415.8,424.6 L416.3,426.1 L416.8,424.8 L417.3,424.7 L417.8,424.7 L418.3,425.7 L418.8,424.8 L419.3,424.8 L419.8,425.6 L420.3,425.1 L420.8,425.7 L421.3,425.1 L421.8,426.1 L422.3,425.9 L422.8,425.7 L423.3,424.0 L423.8,424.1 L424.3,425.5 L424.8,424.8 L425.3,421.5 L425.8,422.6 L426.3,420.9 L426.8,422.4 L427.3,420.7 L427.8,419.3 L428.3,419.7 L428.8,416.6 L429.3,411.3 L429.8,417.6 L430.3,418.0 L430.8,418.3 L431.3,415.2 L431.8,414.4 L432.3,414.0 L432.8,417.7 L433.3,418.7 L433.8,419.4 L434.3,418.5 L434.8,419.3 L435.3,416.8 L435.8,421.7 L436.3,422.1 L436.8,420.3 L437.3,424.7 L437.8,418.7 L438.3,421.8 L438.8,423.6 L439.3,421.9 L439.8,423.1 L440.3,419.0 L440.8,418.9 L441.3,418.0 L441.8,417.1 L442.2,417.5 L442.7,414.1 L443.2,418.6 L443.7,411.1 L444.2,417.2 L444.7,415.8 L445.2,414.5 L445.7,407.5 L446.2,417.6 L446.7,419.4 L447.2,413.6 L447.7,420.8 L448.2,410.7 L448.7,412.7 L449.2,415.6 L449.7,416.0 L450.2,417.0 L450.7,413.4 L451.2,419.4 L451.7,418.7 L452.2,414.0 L452.7,419.8 L453.2,414.3 L453.7,420.8 L454.2,420.9 L454.7,418.8 L455.2,418.9 L455.7,420.8 L456.2,415.0 L456.7,418.7 L457.2,418.0 L457.7,418.6 L458.2,419.9 L458.7,417.0 L459.2,420.7 L459.7,422.2 L460.2,422.2 L460.7,422.2 L461.2,423.2 L461.7,423.3 L462.2,424.9 L462.7,425.3 L463.2,424.4 L463.7,425.2 L464.2,424.8 L464.7,425.7 L465.2,424.7 L465.7,426.3 L466.2,426.0 L466.7,426.1 L467.2,425.9 L467.7,425.7 L468.2,425.9 L468.7,426.0 L469.2,425.6 L469.7,425.8 L470.2,426.5 L470.7,426.6 L471.2,426.2 L471.7,426.5 L472.2,426.3 L472.7,425.9 L473.2,426.7 L473.7,426.2 L474.2,425.9 L474.7,426.1 L475.2,426.3 L475.6,426.7 L476.1,426.0 L476.6,426.2 L477.1,426.1 L477.6,426.3 L478.1,426.6 L478.6,426.8 L479.1,426.2 L479.6,426.0 L480.1,426.6 L480.6,426.4 L481.1,425.8 L481.6,426.7 L482.1,426.3 L482.6,426.3 L483.1,426.2 L483.6,426.7 L484.1,426.5 L484.6,426.1 L485.1,426.4 L485.6,426.3 L486.1,426.3 L486.6,426.3 L487.1,426.6 L487.6,426.5 L488.1,426.9 L488.6,426.4 L489.1,426.9 L489.6,426.4 L490.1,426.5 L490.6,426.7 L491.1,426.7 L491.6,425.9 L492.1,426.6 L492.6,426.6 L493.1,426.8 L493.6,427.1 L494.1,426.8 L494.6,426.4 L495.1,426.4 L495.6,426.7 L496.1,426.8 L496.6,426.5 L497.1,426.5 L497.6,427.0 L498.1,426.9 L498.6,426.6 L499.1,426.6 L499.6,426.6 L500.1,426.6 L500.6,426.8 L501.1,426.4 L501.6,426.6 L502.1,426.8 L502.6,426.8 L503.1,426.7 L503.6,426.7 L504.1,427.1 L504.6,426.8 L505.1,426.8 L505.6,426.6 L506.1,426.7 L506.6,426.7 L507.1,426.8 L507.6,426.4 L508.1,426.9 L508.6,426.8 L509.1,426.9 L509.6,426.7 L510.0,426.8 L510.5,426.8 L511.0,426.9 L511.5,426.8 L512.0,426.8 L512.5,426.7 L513.0,426.8 L513.5,426.9 L514.0,426.7 L514.5,426.8 L515.0,426.8 L515.5,426.5 L516.0,427.1 L516.5,426.6 L517.0,427.0 L517.5,426.7 L518.0,427.0 L518.5,426.7 L519.0,426.8 L519.5,426.9 L520.0,426.6 L520.5,426.9 L521.0,426.8 L521.5,426.9 L522.0,426.7 L522.5,426.8 L523.0,426.9 L523.5,426.7 L524.0,426.9 L524.5,426.8 L525.0,426.9 L525.5,426.6 L526.0,426.6 L526.5,427.0" fill="none" stroke="#00f" stroke-width="0.9" stroke-linejoin="round"/>
</g>
<rect x="187.5" y="235.5" width="339.0" height="192.0" fill="none" stroke="#141414" stroke-width=".9"/>
<line x1="187.5" y1="427.5" x2="187.5" y2="424.0" class="t"/>
<line x1="187.5" y1="235.5" x2="187.5" y2="239.0" class="t"/>
<text x="187.5" y="437.6" font-size="10" text-anchor="middle" fill="#000" textLength="4.8" lengthAdjust="spacingAndGlyphs" >0</text>
<line x1="232.7" y1="427.5" x2="232.7" y2="424.0" class="t"/>
<line x1="232.7" y1="235.5" x2="232.7" y2="239.0" class="t"/>
<text x="232.7" y="437.6" font-size="10" text-anchor="middle" fill="#000" textLength="14.5" lengthAdjust="spacingAndGlyphs" >200</text>
<line x1="277.9" y1="427.5" x2="277.9" y2="424.0" class="t"/>
<line x1="277.9" y1="235.5" x2="277.9" y2="239.0" class="t"/>
<text x="277.9" y="437.6" font-size="10" text-anchor="middle" fill="#000" textLength="14.5" lengthAdjust="spacingAndGlyphs" >400</text>
<line x1="323.1" y1="427.5" x2="323.1" y2="424.0" class="t"/>
<line x1="323.1" y1="235.5" x2="323.1" y2="239.0" class="t"/>
<text x="323.1" y="437.6" font-size="10" text-anchor="middle" fill="#000" textLength="14.5" lengthAdjust="spacingAndGlyphs" >600</text>
<line x1="368.3" y1="427.5" x2="368.3" y2="424.0" class="t"/>
<line x1="368.3" y1="235.5" x2="368.3" y2="239.0" class="t"/>
<text x="368.3" y="437.6" font-size="10" text-anchor="middle" fill="#000" textLength="14.5" lengthAdjust="spacingAndGlyphs" >800</text>
<line x1="413.5" y1="427.5" x2="413.5" y2="424.0" class="t"/>
<line x1="413.5" y1="235.5" x2="413.5" y2="239.0" class="t"/>
<text x="413.5" y="437.6" font-size="10" text-anchor="middle" fill="#000" textLength="19.4" lengthAdjust="spacingAndGlyphs" >1000</text>
<line x1="458.7" y1="427.5" x2="458.7" y2="424.0" class="t"/>
<line x1="458.7" y1="235.5" x2="458.7" y2="239.0" class="t"/>
<text x="458.7" y="437.6" font-size="10" text-anchor="middle" fill="#000" textLength="19.4" lengthAdjust="spacingAndGlyphs" >1200</text>
<line x1="503.9" y1="427.5" x2="503.9" y2="424.0" class="t"/>
<line x1="503.9" y1="235.5" x2="503.9" y2="239.0" class="t"/>
<text x="503.9" y="437.6" font-size="10" text-anchor="middle" fill="#000" textLength="19.4" lengthAdjust="spacingAndGlyphs" >1400</text>
<line x1="187.5" y1="427.5" x2="191.5" y2="427.5" class="t"/>
<line x1="526.5" y1="427.5" x2="522.5" y2="427.5" class="t"/>
<text x="184.3" y="431.6" font-size="10" text-anchor="end" fill="#000" textLength="4.8" lengthAdjust="spacingAndGlyphs" >0</text>
<line x1="187.5" y1="389.1" x2="191.5" y2="389.1" class="t"/>
<line x1="526.5" y1="389.1" x2="522.5" y2="389.1" class="t"/>
<text x="184.3" y="393.2" font-size="10" text-anchor="end" fill="#000" textLength="9.7" lengthAdjust="spacingAndGlyphs" >50</text>
<line x1="187.5" y1="350.7" x2="191.5" y2="350.7" class="t"/>
<line x1="526.5" y1="350.7" x2="522.5" y2="350.7" class="t"/>
<text x="184.3" y="354.8" font-size="10" text-anchor="end" fill="#000" textLength="14.5" lengthAdjust="spacingAndGlyphs" >100</text>
<line x1="187.5" y1="312.3" x2="191.5" y2="312.3" class="t"/>
<line x1="526.5" y1="312.3" x2="522.5" y2="312.3" class="t"/>
<text x="184.3" y="316.4" font-size="10" text-anchor="end" fill="#000" textLength="14.5" lengthAdjust="spacingAndGlyphs" >150</text>
<line x1="187.5" y1="273.9" x2="191.5" y2="273.9" class="t"/>
<line x1="526.5" y1="273.9" x2="522.5" y2="273.9" class="t"/>
<text x="184.3" y="278.0" font-size="10" text-anchor="end" fill="#000" textLength="14.5" lengthAdjust="spacingAndGlyphs" >200</text>
<line x1="187.5" y1="235.5" x2="191.5" y2="235.5" class="t"/>
<line x1="526.5" y1="235.5" x2="522.5" y2="235.5" class="t"/>
<text x="184.3" y="239.6" font-size="10" text-anchor="end" fill="#000" textLength="14.5" lengthAdjust="spacingAndGlyphs" >250</text>
<text x="357.0" y="232.0" font-size="10.5" text-anchor="middle" fill="#000" textLength="88.5" lengthAdjust="spacingAndGlyphs" >Tilt Power Spectra</text>
<text x="357.0" y="449.0" font-size="10" text-anchor="middle" fill="#000" textLength="42.7" lengthAdjust="spacingAndGlyphs" >Frequency</text>
<rect x="464.5" y="240.5" width="57.0" height="31.0" fill="#fff" stroke="#1c1c1c" stroke-width=".9"/>
<line x1="471" y1="249.5" x2="486" y2="249.5" stroke="#f00"/>
<text x="496.0" y="253.2" font-size="10" text-anchor="start" fill="#000" textLength="21.0" lengthAdjust="spacingAndGlyphs" >XTilt</text>
<line x1="471" y1="264.5" x2="486" y2="264.5" stroke="#00f"/>
<text x="496.0" y="268.2" font-size="10" text-anchor="start" fill="#000" textLength="21.0" lengthAdjust="spacingAndGlyphs" >YTilt</text>
</svg>
<svg class="plot" style="left:605px;top:212px" width="438" height="240" viewBox="605 212 438 240" font-family="Liberation Sans, sans-serif">
<defs><clipPath id="cp2"><rect x="659.5" y="235.5" width="339.0" height="192.0"/></clipPath></defs>
<rect x="605" y="212" width="438" height="240" fill="#c0c0c0"/>
<rect x="659.5" y="235.5" width="339.0" height="192.0" fill="#fff"/>
<line x1="744.7" y1="235.5" x2="744.7" y2="427.5" class="g"/>
<line x1="829.9" y1="235.5" x2="829.9" y2="427.5" class="g"/>
<line x1="915.0" y1="235.5" x2="915.0" y2="427.5" class="g"/>
<line x1="659.5" y1="410.3" x2="998.5" y2="410.3" class="g"/>
<line x1="659.5" y1="386.5" x2="998.5" y2="386.5" class="g"/>
<line x1="659.5" y1="362.7" x2="998.5" y2="362.7" class="g"/>
<line x1="659.5" y1="338.9" x2="998.5" y2="338.9" class="g"/>
<line x1="659.5" y1="315.1" x2="998.5" y2="315.1" class="g"/>
<line x1="659.5" y1="291.2" x2="998.5" y2="291.2" class="g"/>
<line x1="659.5" y1="267.4" x2="998.5" y2="267.4" class="g"/>
<line x1="659.5" y1="243.6" x2="998.5" y2="243.6" class="g"/>
<g clip-path="url(#cp2)">
<path d="M659.5,319.8 L661.2,298.4 L662.9,343.6 L664.6,397.7 L666.3,352.7 L668.0,402.1 L669.7,319.2 L671.4,327.4 L673.1,297.2 L674.8,342.6 L676.5,326.7 L678.2,342.4 L679.9,319.8 L681.6,246.0 L683.3,286.5 L685.1,353.3 L686.8,320.6 L688.5,331.7 L690.2,346.9 L691.9,278.1 L693.6,323.2 L695.3,350.1 L697.0,334.8 L698.7,350.6 L700.4,350.0 L702.1,348.9 L703.8,408.0 L705.5,325.2 L707.2,329.4 L708.9,316.4 L710.6,265.0 L712.3,330.7 L714.0,352.6 L715.7,271.3 L717.4,363.8 L719.1,352.1 L720.8,321.2 L722.5,270.3 L724.2,349.5 L725.9,406.2 L727.6,332.2 L729.3,350.0 L731.0,349.9 L732.8,326.4 L734.5,328.3 L736.2,326.8 L737.9,398.4 L739.6,302.9 L741.3,288.2 L743.0,326.0 L744.7,346.9 L746.4,318.3 L748.1,319.7 L749.8,361.9 L751.5,354.3 L753.2,311.1 L754.9,334.1 L756.6,281.7 L758.3,400.8 L760.0,336.6 L761.7,336.6 L763.4,389.9 L765.1,298.8 L766.8,323.5 L768.5,358.1 L770.2,313.8 L771.9,323.4 L773.6,333.4 L775.3,306.9 L777.0,268.1 L778.7,307.5 L780.4,286.9 L782.2,267.0 L783.9,350.8 L785.6,353.8 L787.3,318.5 L789.0,380.1 L790.7,352.6 L792.4,304.0 L794.1,301.2 L795.8,274.6 L797.5,384.3 L799.2,281.1 L800.9,310.2 L802.6,310.0 L804.3,317.5 L806.0,380.1 L807.7,418.9 L809.4,379.8 L811.1,292.2 L812.8,350.6 L814.5,346.0 L816.2,345.4 L817.9,322.5 L819.6,319.9 L821.3,325.8 L823.0,369.2 L824.7,412.7 L826.4,350.6 L828.1,331.9 L829.9,301.6 L831.6,332.4 L833.3,352.6 L835.0,328.4 L836.7,272.2 L838.4,373.5 L840.1,371.7 L841.8,335.6 L843.5,278.5 L845.2,303.8 L846.9,298.4 L848.6,322.3 L850.3,326.0 L852.0,346.8 L853.7,346.3 L855.4,405.6 L857.1,383.6 L858.8,381.5 L860.5,322.4 L862.2,315.4 L863.9,300.7 L865.6,286.3 L867.3,334.9 L869.0,307.0 L870.7,276.6 L872.4,324.8 L874.1,304.1 L875.8,334.6 L877.6,380.7 L879.3,342.0 L881.0,360.3 L882.7,338.3 L884.4,349.7 L886.1,330.3 L887.8,394.3 L889.5,290.5 L891.2,289.7 L892.9,336.8 L894.6,361.7 L896.3,341.4 L898.0,318.8 L899.7,288.9 L901.4,411.3 L903.1,388.1 L904.8,378.1 L906.5,307.7 L908.2,324.1 L909.9,376.1 L911.6,368.4 L913.3,382.9 L915.0,374.0 L916.7,311.4 L918.4,337.6 L920.1,305.5 L921.8,325.1 L923.5,376.2 L925.2,362.6 L927.0,277.6 L928.7,346.2 L930.4,367.9 L932.1,308.1 L933.8,328.3 L935.5,335.0 L937.2,295.0 L938.9,377.7 L940.6,333.0 L942.3,365.5 L944.0,381.8 L945.7,368.5 L947.4,310.5 L949.1,335.3 L950.8,388.0 L952.5,378.1 L954.2,301.8 L955.9,300.7 L957.6,266.5 L959.3,300.8 L961.0,334.1 L962.7,369.7 L964.4,347.0 L966.1,312.2 L967.8,286.2 L969.5,297.4 L971.2,340.7 L972.9,353.2 L974.7,281.7 L976.4,347.5 L978.1,355.5 L979.8,333.4 L981.5,371.7 L983.2,358.1 L984.9,365.7 L986.6,376.4 L988.3,377.9 L990.0,373.6 L991.7,377.3 L993.4,328.6 L995.1,315.1 L996.8,367.5 L998.5,400.8" fill="none" stroke="#00f" stroke-width="0.85" stroke-linejoin="round"/>
</g>
<rect x="659.5" y="235.5" width="339.0" height="192.0" fill="none" stroke="#141414" stroke-width=".9"/>
<line x1="659.5" y1="427.5" x2="659.5" y2="424.0" class="t"/>
<line x1="659.5" y1="235.5" x2="659.5" y2="239.0" class="t"/>
<text x="659.5" y="437.6" font-size="10" text-anchor="middle" fill="#000" textLength="20.6" lengthAdjust="spacingAndGlyphs" >−200</text>
<line x1="744.7" y1="427.5" x2="744.7" y2="424.0" class="t"/>
<line x1="744.7" y1="235.5" x2="744.7" y2="239.0" class="t"/>
<text x="744.7" y="437.6" font-size="10" text-anchor="middle" fill="#000" textLength="20.6" lengthAdjust="spacingAndGlyphs" >−150</text>
<line x1="829.9" y1="427.5" x2="829.9" y2="424.0" class="t"/>
<line x1="829.9" y1="235.5" x2="829.9" y2="239.0" class="t"/>
<text x="829.9" y="437.6" font-size="10" text-anchor="middle" fill="#000" textLength="20.6" lengthAdjust="spacingAndGlyphs" >−100</text>
<line x1="915.0" y1="427.5" x2="915.0" y2="424.0" class="t"/>
<line x1="915.0" y1="235.5" x2="915.0" y2="239.0" class="t"/>
<text x="915.0" y="437.6" font-size="10" text-anchor="middle" fill="#000" textLength="15.8" lengthAdjust="spacingAndGlyphs" >−50</text>
<line x1="659.5" y1="410.3" x2="663.5" y2="410.3" class="t"/>
<line x1="998.5" y1="410.3" x2="994.5" y2="410.3" class="t"/>
<text x="656.3" y="414.4" font-size="10" text-anchor="end" fill="#000" textLength="16.9" lengthAdjust="spacingAndGlyphs" >75.0</text>
<line x1="659.5" y1="386.5" x2="663.5" y2="386.5" class="t"/>
<line x1="998.5" y1="386.5" x2="994.5" y2="386.5" class="t"/>
<text x="656.3" y="390.6" font-size="10" text-anchor="end" fill="#000" textLength="16.9" lengthAdjust="spacingAndGlyphs" >75.5</text>
<line x1="659.5" y1="362.7" x2="663.5" y2="362.7" class="t"/>
<line x1="998.5" y1="362.7" x2="994.5" y2="362.7" class="t"/>
<text x="656.3" y="366.8" font-size="10" text-anchor="end" fill="#000" textLength="16.9" lengthAdjust="spacingAndGlyphs" >76.0</text>
<line x1="659.5" y1="338.9" x2="663.5" y2="338.9" class="t"/>
<line x1="998.5" y1="338.9" x2="994.5" y2="338.9" class="t"/>
<text x="656.3" y="343.0" font-size="10" text-anchor="end" fill="#000" textLength="16.9" lengthAdjust="spacingAndGlyphs" >76.5</text>
<line x1="659.5" y1="315.1" x2="663.5" y2="315.1" class="t"/>
<line x1="998.5" y1="315.1" x2="994.5" y2="315.1" class="t"/>
<text x="656.3" y="319.2" font-size="10" text-anchor="end" fill="#000" textLength="16.9" lengthAdjust="spacingAndGlyphs" >77.0</text>
<line x1="659.5" y1="291.2" x2="663.5" y2="291.2" class="t"/>
<line x1="998.5" y1="291.2" x2="994.5" y2="291.2" class="t"/>
<text x="656.3" y="295.3" font-size="10" text-anchor="end" fill="#000" textLength="16.9" lengthAdjust="spacingAndGlyphs" >77.5</text>
<line x1="659.5" y1="267.4" x2="663.5" y2="267.4" class="t"/>
<line x1="998.5" y1="267.4" x2="994.5" y2="267.4" class="t"/>
<text x="656.3" y="271.5" font-size="10" text-anchor="end" fill="#000" textLength="16.9" lengthAdjust="spacingAndGlyphs" >78.0</text>
<line x1="659.5" y1="243.6" x2="663.5" y2="243.6" class="t"/>
<line x1="998.5" y1="243.6" x2="994.5" y2="243.6" class="t"/>
<text x="656.3" y="247.7" font-size="10" text-anchor="end" fill="#000" textLength="16.9" lengthAdjust="spacingAndGlyphs" >78.5</text>
<text x="829.0" y="232.0" font-size="10.5" text-anchor="middle" fill="#000" textLength="108.7" lengthAdjust="spacingAndGlyphs" >Detector Temperature</text>
<text x="829.0" y="449.0" font-size="10" text-anchor="middle" fill="#000" textLength="90.0" lengthAdjust="spacingAndGlyphs" >Records from Present</text>
</svg>
<svg class="plot" style="left:1077px;top:212px" width="438" height="240" viewBox="1077 212 438 240" font-family="Liberation Sans, sans-serif">
<defs><clipPath id="cp3"><rect x="1131.5" y="235.5" width="339.0" height="192.0"/></clipPath></defs>
<rect x="1077" y="212" width="438" height="240" fill="#c0c0c0"/>
<rect x="1131.5" y="235.5" width="339.0" height="192.0" fill="#fff"/>
<line x1="1216.7" y1="235.5" x2="1216.7" y2="427.5" class="g"/>
<line x1="1301.9" y1="235.5" x2="1301.9" y2="427.5" class="g"/>
<line x1="1387.0" y1="235.5" x2="1387.0" y2="427.5" class="g"/>
<line x1="1131.5" y1="407.4" x2="1470.5" y2="407.4" class="g"/>
<line x1="1131.5" y1="370.4" x2="1470.5" y2="370.4" class="g"/>
<line x1="1131.5" y1="333.5" x2="1470.5" y2="333.5" class="g"/>
<line x1="1131.5" y1="296.5" x2="1470.5" y2="296.5" class="g"/>
<line x1="1131.5" y1="259.6" x2="1470.5" y2="259.6" class="g"/>
<g clip-path="url(#cp3)">
<path d="M1131.5,363.1 L1133.2,331.8 L1134.9,391.7 L1136.6,364.7 L1138.3,263.7 L1140.0,309.0 L1141.7,381.4 L1143.4,343.1 L1145.1,312.5 L1146.8,243.3 L1148.5,338.8 L1150.2,382.6 L1151.9,337.7 L1153.6,376.7 L1155.3,318.5 L1157.1,279.4 L1158.8,317.8 L1160.5,354.4 L1162.2,350.8 L1163.9,348.4 L1165.6,315.6 L1167.3,333.7 L1169.0,365.3 L1170.7,282.9 L1172.4,342.6 L1174.1,366.5 L1175.8,376.8 L1177.5,261.9 L1179.2,319.9 L1180.9,370.2 L1182.6,321.7 L1184.3,332.1 L1186.0,351.8 L1187.7,316.0 L1189.4,349.8 L1191.1,323.7 L1192.8,261.5 L1194.5,309.4 L1196.2,303.3 L1197.9,295.3 L1199.6,284.1 L1201.3,339.8 L1203.0,336.9 L1204.8,351.2 L1206.5,328.5 L1208.2,335.7 L1209.9,331.3 L1211.6,349.2 L1213.3,319.7 L1215.0,267.6 L1216.7,360.9 L1218.4,345.2 L1220.1,302.5 L1221.8,340.2 L1223.5,347.9 L1225.2,331.2 L1226.9,310.1 L1228.6,345.5 L1230.3,282.6 L1232.0,309.2 L1233.7,333.2 L1235.4,290.0 L1237.1,305.9 L1238.8,352.5 L1240.5,331.4 L1242.2,316.3 L1243.9,325.7 L1245.6,317.8 L1247.3,373.7 L1249.0,364.0 L1250.7,308.3 L1252.4,306.5 L1254.2,354.5 L1255.9,342.0 L1257.6,293.5 L1259.3,314.6 L1261.0,357.2 L1262.7,342.9 L1264.4,350.0 L1266.1,309.2 L1267.8,321.5 L1269.5,367.3 L1271.2,317.2 L1272.9,321.7 L1274.6,348.2 L1276.3,378.7 L1278.0,286.9 L1279.7,333.3 L1281.4,346.4 L1283.1,318.9 L1284.8,329.9 L1286.5,341.0 L1288.2,338.6 L1289.9,315.6 L1291.6,313.8 L1293.3,393.8 L1295.0,302.9 L1296.7,300.2 L1298.4,412.1 L1300.1,323.4 L1301.9,295.6 L1303.6,326.7 L1305.3,419.2 L1307.0,304.0 L1308.7,325.3 L1310.4,370.3 L1312.1,243.3 L1313.8,298.0 L1315.5,391.4 L1317.2,380.7 L1318.9,309.5 L1320.6,301.7 L1322.3,338.4 L1324.0,366.4 L1325.7,353.7 L1327.4,346.8 L1329.1,333.4 L1330.8,243.3 L1332.5,345.9 L1334.2,409.9 L1335.9,319.7 L1337.6,317.9 L1339.3,379.3 L1341.0,326.8 L1342.7,255.5 L1344.4,333.8 L1346.1,419.2 L1347.8,267.8 L1349.6,261.7 L1351.3,342.5 L1353.0,386.9 L1354.7,345.0 L1356.4,273.2 L1358.1,333.7 L1359.8,419.2 L1361.5,335.1 L1363.2,265.1 L1364.9,372.0 L1366.6,353.5 L1368.3,282.0 L1370.0,334.5 L1371.7,376.4 L1373.4,296.2 L1375.1,295.7 L1376.8,382.5 L1378.5,337.1 L1380.2,265.1 L1381.9,330.4 L1383.6,345.1 L1385.3,320.8 L1387.0,310.7 L1388.7,339.7 L1390.4,404.5 L1392.1,305.5 L1393.8,248.5 L1395.5,367.7 L1397.2,381.4 L1399.0,277.7 L1400.7,291.1 L1402.4,358.8 L1404.1,355.9 L1405.8,281.9 L1407.5,303.4 L1409.2,373.9 L1410.9,278.4 L1412.6,327.2 L1414.3,408.0 L1416.0,282.0 L1417.7,308.2 L1419.4,367.9 L1421.1,371.8 L1422.8,252.1 L1424.5,307.1 L1426.2,374.3 L1427.9,368.6 L1429.6,287.8 L1431.3,394.4 L1433.0,316.8 L1434.7,257.7 L1436.4,351.1 L1438.1,373.3 L1439.8,318.0 L1441.5,300.7 L1443.2,278.8 L1444.9,372.8 L1446.7,367.2 L1448.4,268.3 L1450.1,302.9 L1451.8,397.4 L1453.5,294.9 L1455.2,243.3 L1456.9,381.7 L1458.6,345.4 L1460.3,317.5 L1462.0,277.2 L1463.7,393.3 L1465.4,350.2 L1467.1,266.4 L1468.8,331.9 L1470.5,358.6" fill="none" stroke="#00f" stroke-width="0.85" stroke-linejoin="round"/>
</g>
<rect x="1131.5" y="235.5" width="339.0" height="192.0" fill="none" stroke="#141414" stroke-width=".9"/>
<line x1="1131.5" y1="427.5" x2="1131.5" y2="424.0" class="t"/>
<line x1="1131.5" y1="235.5" x2="1131.5" y2="239.0" class="t"/>
<text x="1131.5" y="437.6" font-size="10" text-anchor="middle" fill="#000" textLength="20.6" lengthAdjust="spacingAndGlyphs" >−200</text>
<line x1="1216.7" y1="427.5" x2="1216.7" y2="424.0" class="t"/>
<line x1="1216.7" y1="235.5" x2="1216.7" y2="239.0" class="t"/>
<text x="1216.7" y="437.6" font-size="10" text-anchor="middle" fill="#000" textLength="20.6" lengthAdjust="spacingAndGlyphs" >−150</text>
<line x1="1301.9" y1="427.5" x2="1301.9" y2="424.0" class="t"/>
<line x1="1301.9" y1="235.5" x2="1301.9" y2="239.0" class="t"/>
<text x="1301.9" y="437.6" font-size="10" text-anchor="middle" fill="#000" textLength="20.6" lengthAdjust="spacingAndGlyphs" >−100</text>
<line x1="1387.0" y1="427.5" x2="1387.0" y2="424.0" class="t"/>
<line x1="1387.0" y1="235.5" x2="1387.0" y2="239.0" class="t"/>
<text x="1387.0" y="437.6" font-size="10" text-anchor="middle" fill="#000" textLength="15.8" lengthAdjust="spacingAndGlyphs" >−50</text>
<line x1="1131.5" y1="407.4" x2="1135.5" y2="407.4" class="t"/>
<line x1="1470.5" y1="407.4" x2="1466.5" y2="407.4" class="t"/>
<text x="1128.3" y="411.5" font-size="10" text-anchor="end" fill="#000" textLength="16.9" lengthAdjust="spacingAndGlyphs" >0.60</text>
<line x1="1131.5" y1="370.4" x2="1135.5" y2="370.4" class="t"/>
<line x1="1470.5" y1="370.4" x2="1466.5" y2="370.4" class="t"/>
<text x="1128.3" y="374.5" font-size="10" text-anchor="end" fill="#000" textLength="16.9" lengthAdjust="spacingAndGlyphs" >0.65</text>
<line x1="1131.5" y1="333.5" x2="1135.5" y2="333.5" class="t"/>
<line x1="1470.5" y1="333.5" x2="1466.5" y2="333.5" class="t"/>
<text x="1128.3" y="337.6" font-size="10" text-anchor="end" fill="#000" textLength="16.9" lengthAdjust="spacingAndGlyphs" >0.70</text>
<line x1="1131.5" y1="296.5" x2="1135.5" y2="296.5" class="t"/>
<line x1="1470.5" y1="296.5" x2="1466.5" y2="296.5" class="t"/>
<text x="1128.3" y="300.6" font-size="10" text-anchor="end" fill="#000" textLength="16.9" lengthAdjust="spacingAndGlyphs" >0.75</text>
<line x1="1131.5" y1="259.6" x2="1135.5" y2="259.6" class="t"/>
<line x1="1470.5" y1="259.6" x2="1466.5" y2="259.6" class="t"/>
<text x="1128.3" y="263.7" font-size="10" text-anchor="end" fill="#000" textLength="16.9" lengthAdjust="spacingAndGlyphs" >0.80</text>
<text x="1301.0" y="232.0" font-size="10.5" text-anchor="middle" fill="#000" textLength="72.3" lengthAdjust="spacingAndGlyphs" >Cooler Current</text>
<text x="1301.0" y="449.0" font-size="10" text-anchor="middle" fill="#000" textLength="90.0" lengthAdjust="spacingAndGlyphs" >Records from Present</text>
</svg>
<svg class="plot" style="left:133px;top:567px" width="438" height="240" viewBox="133 567 438 240" font-family="Liberation Sans, sans-serif">
<defs><clipPath id="cp4"><rect x="187.5" y="590.5" width="339.0" height="192.0"/></clipPath></defs>
<rect x="133" y="567" width="438" height="240" fill="#c0c0c0"/>
<rect x="187.5" y="590.5" width="339.0" height="192.0" fill="#fff"/>
<line x1="272.2" y1="590.5" x2="272.2" y2="782.5" class="g"/>
<line x1="357.0" y1="590.5" x2="357.0" y2="782.5" class="g"/>
<line x1="441.8" y1="590.5" x2="441.8" y2="782.5" class="g"/>
<line x1="187.5" y1="771.0" x2="526.5" y2="771.0" class="g"/>
<line x1="187.5" y1="736.0" x2="526.5" y2="736.0" class="g"/>
<line x1="187.5" y1="701.0" x2="526.5" y2="701.0" class="g"/>
<line x1="187.5" y1="665.9" x2="526.5" y2="665.9" class="g"/>
<line x1="187.5" y1="630.9" x2="526.5" y2="630.9" class="g"/>
<line x1="187.5" y1="595.9" x2="526.5" y2="595.9" class="g"/>
<g clip-path="url(#cp4)">
<path d="M187.5,686.9 L189.2,686.7 L190.9,687.2 L192.6,686.8 L194.3,687.0 L196.0,687.0 L197.7,686.6 L199.4,687.0 L201.1,687.0 L202.8,686.9 L204.4,686.8 L206.1,687.0 L207.8,686.9 L209.5,687.3 L211.2,687.1 L212.9,687.2 L214.6,687.3 L216.3,687.4 L218.0,687.4 L219.7,687.1 L221.4,687.1 L223.1,687.2 L224.8,687.1 L226.5,687.4 L228.2,687.1 L229.9,687.1 L231.6,687.0 L233.3,687.3 L235.0,687.2 L236.7,687.6 L238.3,687.3 L240.0,687.6 L241.7,687.5 L243.4,687.0 L245.1,687.7 L246.8,687.0 L248.5,687.1 L250.2,687.3 L251.9,687.1 L253.6,687.1 L255.3,687.0 L257.0,687.3 L258.7,687.4 L260.4,687.4 L262.1,687.5 L263.8,687.3 L265.5,687.4 L267.2,687.1 L268.9,687.7 L270.6,687.5 L272.2,687.5 L273.9,687.8 L275.6,686.9 L277.3,687.8 L279.0,687.4 L280.7,687.5 L282.4,687.0 L284.1,687.8 L285.8,687.1 L287.5,687.5 L289.2,687.4 L290.9,687.5 L292.6,687.3 L294.3,687.6 L296.0,687.4 L297.7,687.3 L299.4,687.0 L301.1,687.9 L302.8,687.1 L304.5,687.2 L306.1,687.5 L307.8,687.4 L309.5,687.6 L311.2,687.1 L312.9,687.4 L314.6,687.5 L316.3,687.5 L318.0,687.5 L319.7,687.5 L321.4,687.7 L323.1,687.1 L324.8,687.9 L326.5,688.3 L328.2,687.6 L329.9,687.6 L331.6,687.5 L333.3,687.6 L335.0,687.6 L336.7,687.5 L338.4,687.4 L340.1,687.7 L341.7,687.7 L343.4,687.2 L345.1,687.5 L346.8,687.8 L348.5,687.1 L350.2,687.5 L351.9,687.8 L353.6,687.9 L355.3,687.6 L357.0,687.8 L358.7,687.9 L360.4,687.9 L362.1,687.8 L363.8,687.5 L365.5,687.8 L367.2,688.0 L368.9,687.6 L370.6,687.7 L372.3,687.5 L374.0,687.5 L375.6,687.8 L377.3,687.8 L379.0,687.8 L380.7,688.0 L382.4,687.6 L384.1,687.5 L385.8,687.7 L387.5,687.8 L389.2,687.8 L390.9,688.0 L392.6,688.0 L394.3,687.9 L396.0,688.0 L397.7,687.9 L399.4,688.2 L401.1,687.8 L402.8,687.8 L404.5,688.1 L406.2,688.3 L407.9,687.9 L409.5,687.6 L411.2,688.0 L412.9,688.0 L414.6,688.0 L416.3,687.8 L418.0,688.1 L419.7,687.7 L421.4,688.0 L423.1,687.7 L424.8,687.9 L426.5,688.0 L428.2,688.3 L429.9,688.1 L431.6,688.0 L433.3,687.8 L435.0,687.9 L436.7,688.1 L438.4,687.9 L440.1,687.8 L441.8,688.0 L443.4,688.1 L445.1,688.1 L446.8,687.9 L448.5,687.9 L450.2,688.2 L451.9,688.0 L453.6,688.2 L455.3,688.2 L457.0,687.8 L458.7,687.9 L460.4,688.2 L462.1,688.1 L463.8,688.0 L465.5,688.2 L467.2,688.1 L468.9,688.0 L470.6,688.5 L472.3,688.1 L474.0,688.0 L475.6,688.0 L477.3,688.4 L479.0,688.1 L480.7,688.3 L482.4,688.1 L484.1,688.1 L485.8,688.1 L487.5,688.4 L489.2,688.3 L490.9,688.0 L492.6,688.4 L494.3,688.1 L496.0,688.1 L497.7,688.3 L499.4,687.7 L501.1,688.2 L502.8,687.8 L504.5,688.7 L506.2,688.7 L507.9,688.1 L509.6,688.2 L511.2,688.4 L512.9,688.3 L514.6,688.7 L516.3,688.4 L518.0,688.5 L519.7,688.4 L521.4,688.1 L523.1,688.3 L524.8,688.3 L526.5,688.5" fill="none" stroke="#00f" stroke-width="0.9" stroke-linejoin="round"/>
<path d="M187.5,666.4 L189.2,666.3 L190.9,666.4 L192.6,666.1 L194.3,666.6 L196.0,666.0 L197.7,666.6 L199.4,666.2 L201.1,666.6 L202.8,666.1 L204.4,666.5 L206.1,666.5 L207.8,666.4 L209.5,666.7 L211.2,666.8 L212.9,667.1 L214.6,666.4 L216.3,666.8 L218.0,666.8 L219.7,666.7 L221.4,666.3 L223.1,667.1 L224.8,666.7 L226.5,666.9 L228.2,666.7 L229.9,667.2 L231.6,667.0 L233.3,666.7 L235.0,666.6 L236.7,666.6 L238.3,667.2 L240.0,667.0 L241.7,667.0 L243.4,667.3 L245.1,667.4 L246.8,666.9 L248.5,667.1 L250.2,667.2 L251.9,666.9 L253.6,667.4 L255.3,667.1 L257.0,667.2 L258.7,667.3 L260.4,667.2 L262.1,667.3 L263.8,667.3 L265.5,667.3 L267.2,667.0 L268.9,667.4 L270.6,667.2 L272.2,667.3 L273.9,667.5 L275.6,667.3 L277.3,667.7 L279.0,667.3 L280.7,667.7 L282.4,667.7 L284.1,667.5 L285.8,667.4 L287.5,667.4 L289.2,667.5 L290.9,667.7 L292.6,667.9 L294.3,667.6 L296.0,667.7 L297.7,668.0 L299.4,667.6 L301.1,667.8 L302.8,668.0 L304.5,667.8 L306.1,668.2 L307.8,668.1 L309.5,667.8 L311.2,668.3 L312.9,668.0 L314.6,668.3 L316.3,667.9 L318.0,668.2 L319.7,668.0 L321.4,668.4 L323.1,668.2 L324.8,667.9 L326.5,668.1 L328.2,668.6 L329.9,668.0 L331.6,668.0 L333.3,668.3 L335.0,668.0 L336.7,668.5 L338.4,668.3 L340.1,668.1 L341.7,668.1 L343.4,668.1 L345.1,668.6 L346.8,668.8 L348.5,668.4 L350.2,668.8 L351.9,668.5 L353.6,668.8 L355.3,668.3 L357.0,668.4 L358.7,668.5 L360.4,668.6 L362.1,668.6 L363.8,668.7 L365.5,668.6 L367.2,668.7 L368.9,668.6 L370.6,668.8 L372.3,668.4 L374.0,668.7 L375.6,668.5 L377.3,668.6 L379.0,669.0 L380.7,669.2 L382.4,668.6 L384.1,669.0 L385.8,668.9 L387.5,669.0 L389.2,669.0 L390.9,669.3 L392.6,669.1 L394.3,669.2 L396.0,669.1 L397.7,669.6 L399.4,669.0 L401.1,669.1 L402.8,669.5 L404.5,669.4 L406.2,669.2 L407.9,669.1 L409.5,669.3 L411.2,669.0 L412.9,669.3 L414.6,669.6 L416.3,669.5 L418.0,669.2 L419.7,669.5 L421.4,669.3 L423.1,669.2 L424.8,669.4 L426.5,669.3 L428.2,669.6 L429.9,669.5 L431.6,669.7 L433.3,669.7 L435.0,669.9 L436.7,669.8 L438.4,669.9 L440.1,670.0 L441.8,669.7 L443.4,669.6 L445.1,669.8 L446.8,669.5 L448.5,669.6 L450.2,669.6 L451.9,670.0 L453.6,670.2 L455.3,669.8 L457.0,669.8 L458.7,669.8 L460.4,669.9 L462.1,669.7 L463.8,670.1 L465.5,669.9 L467.2,670.2 L468.9,670.6 L470.6,670.2 L472.3,669.8 L474.0,670.5 L475.6,669.9 L477.3,670.3 L479.0,670.3 L480.7,670.2 L482.4,670.2 L484.1,670.5 L485.8,670.3 L487.5,670.2 L489.2,670.2 L490.9,670.5 L492.6,670.1 L494.3,670.0 L496.0,669.9 L497.7,670.7 L499.4,670.4 L501.1,670.9 L502.8,670.4 L504.5,670.4 L506.2,670.8 L507.9,670.9 L509.6,670.6 L511.2,670.5 L512.9,670.8 L514.6,670.7 L516.3,671.2 L518.0,670.9 L519.7,670.7 L521.4,670.7 L523.1,670.5 L524.8,671.1 L526.5,671.3" fill="none" stroke="#008000" stroke-width="0.9" stroke-linejoin="round"/>
<path d="M187.5,600.4 L189.2,600.6 L190.9,600.4 L192.6,600.3 L194.3,600.3 L196.0,600.2 L197.7,600.2 L199.4,600.8 L201.1,600.5 L202.8,600.1 L204.4,600.6 L206.1,600.3 L207.8,600.5 L209.5,600.6 L211.2,600.2 L212.9,600.3 L214.6,600.6 L216.3,600.3 L218.0,600.8 L219.7,600.7 L221.4,600.4 L223.1,600.5 L224.8,600.8 L226.5,600.5 L228.2,600.5 L229.9,600.3 L231.6,600.4 L233.3,600.6 L235.0,600.7 L236.7,600.6 L238.3,600.7 L240.0,600.3 L241.7,600.3 L243.4,600.3 L245.1,600.5 L246.8,600.7 L248.5,600.4 L250.2,600.7 L251.9,600.6 L253.6,601.0 L255.3,600.7 L257.0,600.4 L258.7,600.9 L260.4,601.0 L262.1,600.7 L263.8,600.3 L265.5,600.4 L267.2,600.8 L268.9,600.8 L270.6,600.7 L272.2,600.9 L273.9,600.7 L275.6,600.8 L277.3,601.0 L279.0,600.9 L280.7,600.8 L282.4,600.9 L284.1,601.0 L285.8,600.6 L287.5,600.4 L289.2,600.8 L290.9,600.9 L292.6,600.7 L294.3,600.8 L296.0,600.9 L297.7,600.5 L299.4,601.0 L301.1,601.0 L302.8,600.9 L304.5,601.0 L306.1,600.9 L307.8,600.7 L309.5,600.5 L311.2,600.7 L312.9,600.8 L314.6,601.1 L316.3,600.9 L318.0,601.0 L319.7,600.9 L321.4,600.7 L323.1,600.8 L324.8,600.9 L326.5,601.0 L328.2,600.9 L329.9,600.9 L331.6,601.1 L333.3,601.0 L335.0,600.7 L336.7,601.3 L338.4,601.0 L340.1,601.2 L341.7,600.6 L343.4,600.8 L345.1,600.8 L346.8,600.9 L348.5,600.9 L350.2,600.9 L351.9,601.3 L353.6,600.9 L355.3,600.8 L357.0,601.3 L358.7,600.8 L360.4,600.8 L362.1,601.3 L363.8,601.1 L365.5,601.1 L367.2,601.1 L368.9,600.9 L370.6,601.3 L372.3,601.1 L374.0,601.0 L375.6,600.9 L377.3,601.0 L379.0,601.1 L380.7,600.9 L382.4,601.5 L384.1,600.9 L385.8,601.1 L387.5,601.3 L389.2,601.2 L390.9,601.5 L392.6,601.5 L394.3,601.2 L396.0,601.3 L397.7,600.9 L399.4,601.3 L401.1,601.4 L402.8,601.3 L404.5,600.8 L406.2,601.1 L407.9,601.3 L409.5,601.3 L411.2,601.4 L412.9,601.2 L414.6,601.1 L416.3,600.9 L418.0,600.9 L419.7,601.1 L421.4,601.3 L423.1,601.4 L424.8,601.7 L426.5,601.4 L428.2,601.1 L429.9,601.3 L431.6,601.1 L433.3,601.5 L435.0,601.0 L436.7,601.2 L438.4,601.2 L440.1,601.1 L441.8,601.7 L443.4,601.4 L445.1,601.4 L446.8,600.9 L448.5,601.3 L450.2,601.4 L451.9,601.1 L453.6,601.5 L455.3,601.0 L457.0,601.4 L458.7,601.3 L460.4,601.5 L462.1,601.1 L463.8,601.8 L465.5,601.2 L467.2,601.5 L468.9,601.3 L470.6,601.6 L472.3,601.3 L474.0,601.3 L475.6,601.2 L477.3,601.3 L479.0,601.2 L480.7,601.1 L482.4,601.4 L484.1,601.6 L485.8,601.6 L487.5,601.2 L489.2,601.5 L490.9,601.2 L492.6,601.4 L494.3,601.6 L496.0,601.2 L497.7,601.0 L499.4,601.5 L501.1,601.6 L502.8,601.6 L504.5,601.2 L506.2,601.6 L507.9,601.5 L509.6,601.3 L511.2,601.4 L512.9,601.4 L514.6,601.6 L516.3,601.6 L518.0,601.4 L519.7,601.4 L521.4,601.4 L523.1,601.6 L524.8,601.4 L526.5,601.4" fill="none" stroke="#f00" stroke-width="0.9" stroke-linejoin="round"/>
<path d="M187.5,745.6 L189.2,745.5 L190.9,745.4 L192.6,745.6 L194.3,745.6 L196.0,745.9 L197.7,745.6 L199.4,745.7 L201.1,745.7 L202.8,745.9 L204.4,745.6 L206.1,745.1 L207.8,745.6 L209.5,745.7 L211.2,745.6 L212.9,745.8 L214.6,745.7 L216.3,745.8 L218.0,745.8 L219.7,745.7 L221.4,745.7 L223.1,745.7 L224.8,745.9 L226.5,745.7 L228.2,745.9 L229.9,745.6 L231.6,745.8 L233.3,745.7 L235.0,745.6 L236.7,745.6 L238.3,746.0 L240.0,745.8 L241.7,745.7 L243.4,746.0 L245.1,746.2 L246.8,745.8 L248.5,745.8 L250.2,745.7 L251.9,745.7 L253.6,745.7 L255.3,745.7 L257.0,745.5 L258.7,745.7 L260.4,745.6 L262.1,745.8 L263.8,745.5 L265.5,745.8 L267.2,745.6 L268.9,746.2 L270.6,745.7 L272.2,745.8 L273.9,745.9 L275.6,745.5 L277.3,745.7 L279.0,745.8 L280.7,745.9 L282.4,745.4 L284.1,745.6 L285.8,745.7 L287.5,746.0 L289.2,745.5 L290.9,745.7 L292.6,745.9 L294.3,745.8 L296.0,746.2 L297.7,745.7 L299.4,746.0 L301.1,745.6 L302.8,745.9 L304.5,746.0 L306.1,745.7 L307.8,745.8 L309.5,746.1 L311.2,745.8 L312.9,745.7 L314.6,745.9 L316.3,746.1 L318.0,745.9 L319.7,746.0 L321.4,746.0 L323.1,745.8 L324.8,745.9 L326.5,745.9 L328.2,746.2 L329.9,745.8 L331.6,745.9 L333.3,746.0 L335.0,745.8 L336.7,745.5 L338.4,746.1 L340.1,746.2 L341.7,745.7 L343.4,746.0 L345.1,745.6 L346.8,746.1 L348.5,746.0 L350.2,745.7 L351.9,745.7 L353.6,745.8 L355.3,745.8 L357.0,745.9 L358.7,746.0 L360.4,745.9 L362.1,745.6 L363.8,745.8 L365.5,745.9 L367.2,745.8 L368.9,745.7 L370.6,745.7 L372.3,745.9 L374.0,745.9 L375.6,745.9 L377.3,745.4 L379.0,745.9 L380.7,745.7 L382.4,746.3 L384.1,745.8 L385.8,746.2 L387.5,746.2 L389.2,746.1 L390.9,746.0 L392.6,745.9 L394.3,745.9 L396.0,745.9 L397.7,746.1 L399.4,745.4 L401.1,745.9 L402.8,745.8 L404.5,745.5 L406.2,745.8 L407.9,745.9 L409.5,745.9 L411.2,745.6 L412.9,746.2 L414.6,746.2 L416.3,746.0 L418.0,746.4 L419.7,746.2 L421.4,745.8 L423.1,746.1 L424.8,746.0 L426.5,745.9 L428.2,746.2 L429.9,745.9 L431.6,746.1 L433.3,746.2 L435.0,746.1 L436.7,746.0 L438.4,746.1 L440.1,746.2 L441.8,745.8 L443.4,745.8 L445.1,745.9 L446.8,746.1 L448.5,746.3 L450.2,746.2 L451.9,746.3 L453.6,746.0 L455.3,745.9 L457.0,745.9 L458.7,746.1 L460.4,746.1 L462.1,746.0 L463.8,746.0 L465.5,745.9 L467.2,745.8 L468.9,746.2 L470.6,745.6 L472.3,746.5 L474.0,746.4 L475.6,746.4 L477.3,746.3 L479.0,746.1 L480.7,745.6 L482.4,746.2 L484.1,745.9 L485.8,746.2 L487.5,746.1 L489.2,746.3 L490.9,745.6 L492.6,746.1 L494.3,746.2 L496.0,745.6 L497.7,746.1 L499.4,746.0 L501.1,746.1 L502.8,746.3 L504.5,746.4 L506.2,746.2 L507.9,745.8 L509.6,746.0 L511.2,746.2 L512.9,745.9 L514.6,746.3 L516.3,745.8 L518.0,746.1 L519.7,746.3 L521.4,746.0 L523.1,746.0 L524.8,746.2 L526.5,746.1" fill="none" stroke="#00bfbf" stroke-width="0.9" stroke-linejoin="round"/>
<path d="M187.5,773.3 L189.2,773.2 L190.9,773.7 L192.6,774.0 L194.3,773.1 L196.0,773.5 L197.7,773.6 L199.4,773.4 L201.1,773.6 L202.8,773.3 L204.4,773.8 L206.1,773.6 L207.8,773.8 L209.5,773.2 L211.2,773.6 L212.9,773.3 L214.6,773.3 L216.3,773.8 L218.0,773.6 L219.7,773.4 L221.4,773.6 L223.1,773.6 L224.8,773.4 L226.5,773.4 L228.2,773.7 L229.9,773.6 L231.6,773.5 L233.3,773.6 L235.0,773.6 L236.7,773.8 L238.3,773.3 L240.0,773.7 L241.7,773.6 L243.4,773.6 L245.1,773.6 L246.8,773.6 L248.5,773.8 L250.2,773.6 L251.9,773.4 L253.6,773.6 L255.3,773.5 L257.0,773.6 L258.7,773.7 L260.4,773.3 L262.1,773.8 L263.8,773.6 L265.5,773.5 L267.2,773.7 L268.9,773.9 L270.6,773.9 L272.2,773.4 L273.9,773.9 L275.6,773.7 L277.3,773.6 L279.0,773.7 L280.7,774.1 L282.4,774.2 L284.1,773.8 L285.8,773.9 L287.5,773.8 L289.2,773.8 L290.9,773.8 L292.6,774.1 L294.3,774.1 L296.0,773.6 L297.7,773.9 L299.4,774.1 L301.1,774.2 L302.8,773.7 L304.5,774.1 L306.1,774.0 L307.8,773.7 L309.5,773.8 L311.2,773.7 L312.9,774.1 L314.6,774.5 L316.3,774.1 L318.0,773.9 L319.7,774.0 L321.4,773.7 L323.1,773.8 L324.8,774.1 L326.5,773.8 L328.2,773.9 L329.9,774.0 L331.6,773.7 L333.3,774.3 L335.0,773.7 L336.7,773.7 L338.4,774.4 L340.1,774.0 L341.7,774.0 L343.4,774.2 L345.1,774.1 L346.8,774.1 L348.5,773.9 L350.2,774.1 L351.9,774.4 L353.6,773.7 L355.3,773.8 L357.0,774.2 L358.7,773.8 L360.4,773.6 L362.1,774.3 L363.8,774.1 L365.5,774.1 L367.2,773.9 L368.9,774.1 L370.6,774.3 L372.3,773.8 L374.0,774.1 L375.6,773.9 L377.3,773.6 L379.0,774.2 L380.7,774.1 L382.4,773.9 L384.1,774.1 L385.8,774.0 L387.5,774.1 L389.2,773.5 L390.9,774.0 L392.6,774.0 L394.3,774.1 L396.0,774.0 L397.7,774.5 L399.4,774.2 L401.1,774.0 L402.8,774.4 L404.5,774.1 L406.2,774.2 L407.9,774.3 L409.5,773.6 L411.2,774.0 L412.9,774.1 L414.6,774.3 L416.3,774.2 L418.0,774.2 L419.7,774.2 L421.4,774.1 L423.1,773.7 L424.8,773.9 L426.5,773.8 L428.2,773.9 L429.9,773.6 L431.6,774.4 L433.3,774.5 L435.0,774.2 L436.7,774.2 L438.4,774.2 L440.1,774.4 L441.8,774.1 L443.4,773.9 L445.1,774.2 L446.8,774.3 L448.5,774.0 L450.2,774.3 L451.9,774.4 L453.6,774.2 L455.3,774.8 L457.0,773.9 L458.7,774.3 L460.4,774.2 L462.1,774.2 L463.8,774.2 L465.5,774.6 L467.2,774.0 L468.9,774.2 L470.6,774.3 L472.3,773.7 L474.0,774.6 L475.6,774.2 L477.3,774.4 L479.0,774.7 L480.7,774.0 L482.4,774.7 L484.1,774.4 L485.8,774.4 L487.5,774.4 L489.2,774.6 L490.9,774.1 L492.6,774.4 L494.3,774.7 L496.0,774.7 L497.7,774.4 L499.4,774.7 L501.1,774.3 L502.8,774.4 L504.5,774.6 L506.2,774.9 L507.9,774.7 L509.6,774.4 L511.2,774.6 L512.9,774.1 L514.6,774.6 L516.3,774.4 L518.0,774.3 L519.7,774.5 L521.4,774.4 L523.1,774.3 L524.8,774.5 L526.5,774.4" fill="none" stroke="#bf00bf" stroke-width="0.9" stroke-linejoin="round"/>
</g>
<rect x="187.5" y="590.5" width="339.0" height="192.0" fill="none" stroke="#141414" stroke-width=".9"/>
<line x1="187.5" y1="782.5" x2="187.5" y2="779.0" class="t"/>
<line x1="187.5" y1="590.5" x2="187.5" y2="594.0" class="t"/>
<text x="187.5" y="792.6" font-size="10" text-anchor="middle" fill="#000" textLength="20.6" lengthAdjust="spacingAndGlyphs" >−200</text>
<line x1="272.2" y1="782.5" x2="272.2" y2="779.0" class="t"/>
<line x1="272.2" y1="590.5" x2="272.2" y2="594.0" class="t"/>
<text x="272.2" y="792.6" font-size="10" text-anchor="middle" fill="#000" textLength="20.6" lengthAdjust="spacingAndGlyphs" >−150</text>
<line x1="357.0" y1="782.5" x2="357.0" y2="779.0" class="t"/>
<line x1="357.0" y1="590.5" x2="357.0" y2="594.0" class="t"/>
<text x="357.0" y="792.6" font-size="10" text-anchor="middle" fill="#000" textLength="20.6" lengthAdjust="spacingAndGlyphs" >−100</text>
<line x1="441.8" y1="782.5" x2="441.8" y2="779.0" class="t"/>
<line x1="441.8" y1="590.5" x2="441.8" y2="594.0" class="t"/>
<text x="441.8" y="792.6" font-size="10" text-anchor="middle" fill="#000" textLength="15.8" lengthAdjust="spacingAndGlyphs" >−50</text>
<line x1="526.5" y1="782.5" x2="526.5" y2="779.0" class="t"/>
<line x1="526.5" y1="590.5" x2="526.5" y2="594.0" class="t"/>
<text x="526.5" y="792.6" font-size="10" text-anchor="middle" fill="#000" textLength="4.8" lengthAdjust="spacingAndGlyphs" >0</text>
<line x1="187.5" y1="771.0" x2="191.5" y2="771.0" class="t"/>
<line x1="526.5" y1="771.0" x2="522.5" y2="771.0" class="t"/>
<text x="184.3" y="775.1" font-size="10" text-anchor="end" fill="#000" textLength="14.5" lengthAdjust="spacingAndGlyphs" >275</text>
<line x1="187.5" y1="736.0" x2="191.5" y2="736.0" class="t"/>
<line x1="526.5" y1="736.0" x2="522.5" y2="736.0" class="t"/>
<text x="184.3" y="740.1" font-size="10" text-anchor="end" fill="#000" textLength="14.5" lengthAdjust="spacingAndGlyphs" >280</text>
<line x1="187.5" y1="701.0" x2="191.5" y2="701.0" class="t"/>
<line x1="526.5" y1="701.0" x2="522.5" y2="701.0" class="t"/>
<text x="184.3" y="705.1" font-size="10" text-anchor="end" fill="#000" textLength="14.5" lengthAdjust="spacingAndGlyphs" >285</text>
<line x1="187.5" y1="665.9" x2="191.5" y2="665.9" class="t"/>
<line x1="526.5" y1="665.9" x2="522.5" y2="665.9" class="t"/>
<text x="184.3" y="670.0" font-size="10" text-anchor="end" fill="#000" textLength="14.5" lengthAdjust="spacingAndGlyphs" >290</text>
<line x1="187.5" y1="630.9" x2="191.5" y2="630.9" class="t"/>
<line x1="526.5" y1="630.9" x2="522.5" y2="630.9" class="t"/>
<text x="184.3" y="635.0" font-size="10" text-anchor="end" fill="#000" textLength="14.5" lengthAdjust="spacingAndGlyphs" >295</text>
<line x1="187.5" y1="595.9" x2="191.5" y2="595.9" class="t"/>
<line x1="526.5" y1="595.9" x2="522.5" y2="595.9" class="t"/>
<text x="184.3" y="600.0" font-size="10" text-anchor="end" fill="#000" textLength="14.5" lengthAdjust="spacingAndGlyphs" >300</text>
<text x="357.0" y="587.0" font-size="10.5" text-anchor="middle" fill="#000" textLength="125.0" lengthAdjust="spacingAndGlyphs" >Electronics Temperatures</text>
<text x="357.0" y="804.0" font-size="10" text-anchor="middle" fill="#000" textLength="90.0" lengthAdjust="spacingAndGlyphs" >Records from Present</text>
<line x1="368.3" y1="604.5" x2="388.3" y2="604.5" stroke="#00f"/>
<text x="392.3" y="607.8" font-size="10.5" text-anchor="start" fill="#00f" textLength="93.7" lengthAdjust="spacingAndGlyphs" >Cooler Compressor</text>
<line x1="368.3" y1="616.5" x2="388.3" y2="616.5" stroke="#008000"/>
<text x="392.3" y="619.8" font-size="10.5" text-anchor="start" fill="#008000" textLength="82.3" lengthAdjust="spacingAndGlyphs" >Cooler Expander</text>
<line x1="368.3" y1="628.5" x2="388.3" y2="628.5" stroke="#f00"/>
<text x="392.3" y="631.8" font-size="10.5" text-anchor="start" fill="#f00" textLength="82.7" lengthAdjust="spacingAndGlyphs" >sek31electronics</text>
<line x1="368.3" y1="640.5" x2="388.3" y2="640.5" stroke="#00bfbf"/>
<text x="392.3" y="643.8" font-size="10.5" text-anchor="start" fill="#00bfbf" textLength="105.7" lengthAdjust="spacingAndGlyphs" >Electronics Top Cover</text>
<line x1="368.3" y1="652.5" x2="388.3" y2="652.5" stroke="#bf00bf"/>
<text x="392.3" y="655.8" font-size="10.5" text-anchor="start" fill="#bf00bf" textLength="125.3" lengthAdjust="spacingAndGlyphs" >Electronics Bottom Cover</text>
</svg>
<svg class="plot" style="left:605px;top:567px" width="438" height="240" viewBox="605 567 438 240" font-family="Liberation Sans, sans-serif">
<defs><clipPath id="cp5"><rect x="659.5" y="590.5" width="339.0" height="192.0"/></clipPath></defs>
<rect x="605" y="567" width="438" height="240" fill="#c0c0c0"/>
<rect x="659.5" y="590.5" width="339.0" height="192.0" fill="#fff"/>
<line x1="744.2" y1="590.5" x2="744.2" y2="782.5" class="g"/>
<line x1="829.0" y1="590.5" x2="829.0" y2="782.5" class="g"/>
<line x1="913.8" y1="590.5" x2="913.8" y2="782.5" class="g"/>
<line x1="659.5" y1="763.5" x2="998.5" y2="763.5" class="g"/>
<line x1="659.5" y1="740.7" x2="998.5" y2="740.7" class="g"/>
<line x1="659.5" y1="717.8" x2="998.5" y2="717.8" class="g"/>
<line x1="659.5" y1="694.9" x2="998.5" y2="694.9" class="g"/>
<line x1="659.5" y1="672.1" x2="998.5" y2="672.1" class="g"/>
<line x1="659.5" y1="649.2" x2="998.5" y2="649.2" class="g"/>
<line x1="659.5" y1="626.3" x2="998.5" y2="626.3" class="g"/>
<line x1="659.5" y1="603.5" x2="998.5" y2="603.5" class="g"/>
<g clip-path="url(#cp5)">
<path d="M659.5,747.4 L661.2,745.1 L662.9,745.3 L664.6,743.7 L666.3,744.4 L668.0,743.2 L669.7,744.0 L671.4,742.9 L673.1,743.9 L674.8,742.8 L676.5,743.9 L678.1,742.8 L679.8,748.7 L681.5,774.1 L683.2,774.1 L684.9,774.1 L686.6,703.5 L688.3,703.5 L690.0,704.0 L691.7,751.8 L693.4,749.6 L695.1,746.4 L696.8,746.1 L698.5,744.3 L700.2,744.7 L701.9,743.4 L703.6,744.2 L705.3,743.0 L707.0,744.0 L708.7,742.9 L710.4,743.9 L712.0,742.8 L713.7,743.8 L715.4,748.7 L717.1,774.1 L718.8,774.1 L720.5,774.1 L722.2,703.3 L723.9,703.2 L725.6,704.0 L727.3,753.0 L729.0,748.6 L730.7,747.5 L732.4,745.1 L734.1,745.3 L735.8,743.7 L737.5,744.4 L739.2,743.2 L740.9,744.1 L742.6,742.9 L744.2,743.9 L745.9,742.8 L747.6,743.9 L749.3,742.8 L751.0,748.7 L752.7,774.1 L754.4,774.1 L756.1,774.1 L757.8,703.4 L759.5,704.1 L761.2,703.8 L762.9,752.1 L764.6,749.7 L766.3,746.5 L768.0,746.2 L769.7,744.3 L771.4,744.8 L773.1,743.4 L774.8,744.2 L776.5,743.0 L778.1,744.0 L779.8,742.9 L781.5,743.9 L783.2,742.8 L784.9,743.8 L786.6,748.7 L788.3,774.1 L790.0,774.1 L791.7,774.1 L793.4,703.2 L795.1,704.2 L796.8,703.4 L798.5,753.2 L800.2,748.8 L801.9,747.6 L803.6,745.2 L805.3,745.3 L807.0,743.8 L808.7,744.4 L810.4,743.2 L812.0,744.1 L813.7,742.9 L815.4,743.9 L817.1,742.8 L818.8,743.9 L820.5,742.8 L822.2,748.7 L823.9,774.1 L825.6,774.1 L827.3,774.1 L829.0,704.2 L830.7,703.5 L832.4,703.2 L834.1,752.3 L835.8,749.9 L837.5,746.6 L839.2,746.3 L840.9,744.3 L842.6,744.8 L844.3,743.4 L846.0,744.2 L847.6,743.0 L849.3,744.0 L851.0,742.9 L852.7,743.9 L854.4,742.8 L856.1,743.8 L857.8,748.7 L859.5,774.1 L861.2,774.1 L862.9,774.1 L864.6,703.0 L866.3,703.3 L868.0,703.4 L869.7,753.5 L871.4,748.9 L873.1,747.7 L874.8,745.3 L876.5,745.4 L878.2,743.8 L879.9,744.4 L881.5,743.2 L883.2,744.1 L884.9,742.9 L886.6,743.9 L888.3,742.8 L890.0,743.9 L891.7,742.8 L893.4,748.7 L895.1,774.1 L896.8,774.1 L898.5,774.1 L900.2,703.5 L901.9,703.3 L903.6,703.4 L905.3,767.0 L907.0,752.1 L908.7,746.7 L910.4,746.3 L912.1,744.4 L913.8,744.8 L915.4,743.4 L917.1,744.2 L918.8,743.0 L920.5,744.0 L922.2,742.9 L923.9,743.9 L925.6,742.8 L927.3,743.8 L929.0,748.7 L930.7,774.1 L932.4,774.1 L934.1,774.1 L935.8,703.1 L937.5,704.0 L939.2,703.4 L940.9,753.8 L942.6,749.1 L944.3,747.8 L946.0,745.3 L947.6,745.4 L949.3,743.8 L951.0,744.5 L952.7,743.2 L954.4,744.1 L956.1,742.9 L957.8,743.9 L959.5,742.9 L961.2,743.9 L962.9,742.8 L964.6,748.7 L966.3,774.1 L968.0,774.1 L969.7,774.1 L971.4,703.0 L973.1,704.2 L974.8,703.0 L976.5,752.9 L978.2,750.2 L979.9,746.8 L981.5,746.4 L983.2,744.4 L984.9,744.9 L986.6,743.4 L988.3,744.2 L990.0,743.0 L991.7,744.0 L993.4,742.9 L995.1,743.9 L996.8,742.8 L998.5,743.8" fill="none" stroke="#f00" stroke-width="0.85" stroke-linejoin="round"/>
<path d="M659.5,700.9 L661.2,698.6 L662.9,697.1 L664.6,696.0 L666.3,695.3 L668.0,694.8 L669.7,694.5 L671.4,694.3 L673.1,694.4 L674.8,694.6 L676.5,694.9 L678.1,695.2 L679.8,698.4 L681.5,718.4 L683.2,718.4 L684.9,718.4 L686.6,601.3 L688.3,601.1 L690.0,603.2 L691.7,709.3 L693.4,704.4 L695.1,701.0 L696.8,698.7 L698.5,697.1 L700.2,696.1 L701.9,695.3 L703.6,694.8 L705.3,694.5 L707.0,694.3 L708.7,694.4 L710.4,694.6 L712.0,694.9 L713.7,695.2 L715.4,698.4 L717.1,718.4 L718.8,718.4 L720.5,718.4 L722.2,601.3 L723.9,601.1 L725.6,603.3 L727.3,709.5 L729.0,704.5 L730.7,701.1 L732.4,698.8 L734.1,697.2 L735.8,696.1 L737.5,695.4 L739.2,694.9 L740.9,694.5 L742.6,694.3 L744.2,694.4 L745.9,694.6 L747.6,694.9 L749.3,695.2 L751.0,698.4 L752.7,718.4 L754.4,718.4 L756.1,718.4 L757.8,602.9 L759.5,602.4 L761.2,603.1 L762.9,709.7 L764.6,704.6 L766.3,701.2 L768.0,698.8 L769.7,697.2 L771.4,696.1 L773.1,695.4 L774.8,694.9 L776.5,694.5 L778.1,694.3 L779.8,694.4 L781.5,694.6 L783.2,694.9 L784.9,695.1 L786.6,698.4 L788.3,718.4 L790.0,718.4 L791.7,718.4 L793.4,602.5 L795.1,602.0 L796.8,603.1 L798.5,709.9 L800.2,704.8 L801.9,701.3 L803.6,698.9 L805.3,697.3 L807.0,696.1 L808.7,695.4 L810.4,694.9 L812.0,694.5 L813.7,694.3 L815.4,694.3 L817.1,694.6 L818.8,694.8 L820.5,695.1 L822.2,698.4 L823.9,718.4 L825.6,718.4 L827.3,718.4 L829.0,603.2 L830.7,603.0 L832.4,602.3 L834.1,710.1 L835.8,704.9 L837.5,701.3 L839.2,698.9 L840.9,697.3 L842.6,696.2 L844.3,695.4 L846.0,694.9 L847.6,694.5 L849.3,694.3 L851.0,694.3 L852.7,694.6 L854.4,694.8 L856.1,695.1 L857.8,698.4 L859.5,718.4 L861.2,718.4 L862.9,718.4 L864.6,601.5 L866.3,600.8 L868.0,602.1 L869.7,710.3 L871.4,705.0 L873.1,701.4 L874.8,699.0 L876.5,697.3 L878.2,696.2 L879.9,695.4 L881.5,694.9 L883.2,694.6 L884.9,694.3 L886.6,694.3 L888.3,694.6 L890.0,694.8 L891.7,695.1 L893.4,698.4 L895.1,718.4 L896.8,718.4 L898.5,718.4 L900.2,603.5 L901.9,601.2 L903.6,601.6 L905.3,740.7 L907.0,714.4 L908.7,701.5 L910.4,699.1 L912.1,697.4 L913.8,696.2 L915.4,695.5 L917.1,694.9 L918.8,694.6 L920.5,694.3 L922.2,694.3 L923.9,694.6 L925.6,694.8 L927.3,695.1 L929.0,698.4 L930.7,718.4 L932.4,718.4 L934.1,718.4 L935.8,602.2 L937.5,600.8 L939.2,602.4 L940.9,710.7 L942.6,705.3 L944.3,701.6 L946.0,699.1 L947.6,697.4 L949.3,696.3 L951.0,695.5 L952.7,694.9 L954.4,694.6 L956.1,694.3 L957.8,694.3 L959.5,694.6 L961.2,694.8 L962.9,695.1 L964.6,698.4 L966.3,718.4 L968.0,718.4 L969.7,718.4 L971.4,601.1 L973.1,602.6 L974.8,602.7 L976.5,710.8 L978.2,705.4 L979.9,701.7 L981.5,699.2 L983.2,697.5 L984.9,696.3 L986.6,695.5 L988.3,694.9 L990.0,694.6 L991.7,694.3 L993.4,694.3 L995.1,694.5 L996.8,694.8 L998.5,695.1" fill="none" stroke="#008000" stroke-width="0.85" stroke-linejoin="round"/>
<path d="M659.5,745.7 L661.2,742.7 L662.9,743.5 L664.6,741.3 L666.3,742.6 L668.0,740.8 L669.7,742.3 L671.4,740.6 L673.1,742.2 L674.8,740.5 L676.5,742.1 L678.1,740.4 L679.8,737.2 L681.5,727.5 L683.2,727.5 L684.9,727.5 L686.6,615.8 L688.3,615.7 L690.0,617.8 L691.7,749.5 L693.4,747.8 L695.1,744.1 L696.8,744.4 L698.5,741.9 L700.2,743.0 L701.9,741.0 L703.6,742.4 L705.3,740.7 L707.0,742.2 L708.7,740.5 L710.4,742.1 L712.0,740.5 L713.7,742.1 L715.4,737.2 L717.1,727.5 L718.8,727.5 L720.5,727.5 L722.2,617.0 L723.9,615.8 L725.6,617.8 L727.3,751.2 L729.0,746.2 L730.7,745.8 L732.4,742.8 L734.1,743.6 L735.8,741.4 L737.5,742.7 L739.2,740.8 L740.9,742.3 L742.6,740.6 L744.2,742.2 L745.9,740.5 L747.6,742.1 L749.3,740.4 L751.0,737.2 L752.7,727.5 L754.4,727.5 L756.1,727.5 L757.8,616.0 L759.5,617.6 L761.2,615.7 L762.9,749.7 L764.6,748.0 L766.3,744.2 L768.0,744.4 L769.7,741.9 L771.4,743.0 L773.1,741.0 L774.8,742.4 L776.5,740.7 L778.1,742.2 L779.8,740.5 L781.5,742.1 L783.2,740.5 L784.9,742.1 L786.6,737.2 L788.3,727.5 L790.0,727.5 L791.7,727.5 L793.4,616.9 L795.1,615.7 L796.8,617.0 L798.5,751.5 L800.2,746.4 L801.9,745.9 L803.6,742.8 L805.3,743.6 L807.0,741.4 L808.7,742.7 L810.4,740.8 L812.0,742.3 L813.7,740.6 L815.4,742.2 L817.1,740.5 L818.8,742.1 L820.5,740.4 L822.2,737.2 L823.9,727.5 L825.6,727.5 L827.3,727.5 L829.0,617.1 L830.7,616.9 L832.4,616.7 L834.1,750.0 L835.8,748.1 L837.5,744.3 L839.2,744.5 L840.9,742.0 L842.6,743.0 L844.3,741.0 L846.0,742.5 L847.6,740.7 L849.3,742.2 L851.0,740.5 L852.7,742.1 L854.4,740.5 L856.1,742.1 L857.8,737.2 L859.5,727.5 L861.2,727.5 L862.9,727.5 L864.6,617.8 L866.3,617.3 L868.0,616.8 L869.7,751.7 L871.4,746.6 L873.1,746.0 L874.8,742.9 L876.5,743.6 L878.2,741.4 L879.9,742.7 L881.5,740.8 L883.2,742.3 L884.9,740.6 L886.6,742.2 L888.3,740.5 L890.0,742.1 L891.7,740.4 L893.4,737.2 L895.1,727.5 L896.8,727.5 L898.5,727.5 L900.2,616.0 L901.9,617.3 L903.6,617.6 L905.3,753.2 L907.0,747.5 L908.7,744.4 L910.4,744.6 L912.1,742.0 L913.8,743.1 L915.4,741.1 L917.1,742.5 L918.8,740.7 L920.5,742.2 L922.2,740.5 L923.9,742.1 L925.6,740.5 L927.3,742.1 L929.0,737.2 L930.7,727.5 L932.4,727.5 L934.1,727.5 L935.8,618.1 L937.5,616.1 L939.2,616.2 L940.9,752.0 L942.6,746.7 L944.3,746.1 L946.0,743.0 L947.6,743.7 L949.3,741.4 L951.0,742.7 L952.7,740.8 L954.4,742.3 L956.1,740.6 L957.8,742.2 L959.5,740.5 L961.2,742.1 L962.9,740.4 L964.6,737.2 L966.3,727.5 L968.0,727.5 L969.7,727.5 L971.4,616.8 L973.1,618.0 L974.8,618.2 L976.5,750.5 L978.2,748.5 L979.9,744.5 L981.5,744.6 L983.2,742.1 L984.9,743.1 L986.6,741.1 L988.3,742.5 L990.0,740.7 L991.7,742.2 L993.4,740.5 L995.1,742.1 L996.8,740.5 L998.5,742.1" fill="none" stroke="#00f" stroke-width="0.85" stroke-linejoin="round"/>
</g>
<rect x="659.5" y="590.5" width="339.0" height="192.0" fill="none" stroke="#141414" stroke-width=".9"/>
<line x1="659.5" y1="782.5" x2="659.5" y2="779.0" class="t"/>
<line x1="659.5" y1="590.5" x2="659.5" y2="594.0" class="t"/>
<text x="659.5" y="792.6" font-size="10" text-anchor="middle" fill="#000" textLength="20.6" lengthAdjust="spacingAndGlyphs" >−200</text>
<line x1="744.2" y1="782.5" x2="744.2" y2="779.0" class="t"/>
<line x1="744.2" y1="590.5" x2="744.2" y2="594.0" class="t"/>
<text x="744.2" y="792.6" font-size="10" text-anchor="middle" fill="#000" textLength="20.6" lengthAdjust="spacingAndGlyphs" >−150</text>
<line x1="829.0" y1="782.5" x2="829.0" y2="779.0" class="t"/>
<line x1="829.0" y1="590.5" x2="829.0" y2="594.0" class="t"/>
<text x="829.0" y="792.6" font-size="10" text-anchor="middle" fill="#000" textLength="20.6" lengthAdjust="spacingAndGlyphs" >−100</text>
<line x1="913.8" y1="782.5" x2="913.8" y2="779.0" class="t"/>
<line x1="913.8" y1="590.5" x2="913.8" y2="594.0" class="t"/>
<text x="913.8" y="792.6" font-size="10" text-anchor="middle" fill="#000" textLength="15.8" lengthAdjust="spacingAndGlyphs" >−50</text>
<line x1="998.5" y1="782.5" x2="998.5" y2="779.0" class="t"/>
<line x1="998.5" y1="590.5" x2="998.5" y2="594.0" class="t"/>
<text x="998.5" y="792.6" font-size="10" text-anchor="middle" fill="#000" textLength="4.8" lengthAdjust="spacingAndGlyphs" >0</text>
<line x1="659.5" y1="763.5" x2="663.5" y2="763.5" class="t"/>
<line x1="998.5" y1="763.5" x2="994.5" y2="763.5" class="t"/>
<text x="656.3" y="767.6" font-size="10" text-anchor="end" fill="#000" textLength="19.4" lengthAdjust="spacingAndGlyphs" >2000</text>
<line x1="659.5" y1="740.7" x2="663.5" y2="740.7" class="t"/>
<line x1="998.5" y1="740.7" x2="994.5" y2="740.7" class="t"/>
<text x="656.3" y="744.8" font-size="10" text-anchor="end" fill="#000" textLength="19.4" lengthAdjust="spacingAndGlyphs" >4000</text>
<line x1="659.5" y1="717.8" x2="663.5" y2="717.8" class="t"/>
<line x1="998.5" y1="717.8" x2="994.5" y2="717.8" class="t"/>
<text x="656.3" y="721.9" font-size="10" text-anchor="end" fill="#000" textLength="19.4" lengthAdjust="spacingAndGlyphs" >6000</text>
<line x1="659.5" y1="694.9" x2="663.5" y2="694.9" class="t"/>
<line x1="998.5" y1="694.9" x2="994.5" y2="694.9" class="t"/>
<text x="656.3" y="699.0" font-size="10" text-anchor="end" fill="#000" textLength="19.4" lengthAdjust="spacingAndGlyphs" >8000</text>
<line x1="659.5" y1="672.1" x2="663.5" y2="672.1" class="t"/>
<line x1="998.5" y1="672.1" x2="994.5" y2="672.1" class="t"/>
<text x="656.3" y="676.2" font-size="10" text-anchor="end" fill="#000" textLength="24.2" lengthAdjust="spacingAndGlyphs" >10000</text>
<line x1="659.5" y1="649.2" x2="663.5" y2="649.2" class="t"/>
<line x1="998.5" y1="649.2" x2="994.5" y2="649.2" class="t"/>
<text x="656.3" y="653.3" font-size="10" text-anchor="end" fill="#000" textLength="24.2" lengthAdjust="spacingAndGlyphs" >12000</text>
<line x1="659.5" y1="626.3" x2="663.5" y2="626.3" class="t"/>
<line x1="998.5" y1="626.3" x2="994.5" y2="626.3" class="t"/>
<text x="656.3" y="630.4" font-size="10" text-anchor="end" fill="#000" textLength="24.2" lengthAdjust="spacingAndGlyphs" >14000</text>
<line x1="659.5" y1="603.5" x2="663.5" y2="603.5" class="t"/>
<line x1="998.5" y1="603.5" x2="994.5" y2="603.5" class="t"/>
<text x="656.3" y="607.6" font-size="10" text-anchor="end" fill="#000" textLength="24.2" lengthAdjust="spacingAndGlyphs" >16000</text>
<text x="829.0" y="587.0" font-size="10.5" text-anchor="middle" fill="#000" textLength="81.7" lengthAdjust="spacingAndGlyphs" >ZPD Magnitudes</text>
<text x="829.0" y="804.0" font-size="10" text-anchor="middle" fill="#000" textLength="90.0" lengthAdjust="spacingAndGlyphs" >Records from Present</text>
<line x1="924.3" y1="604.5" x2="944.3" y2="604.5" stroke="#f00"/>
<text x="948.3" y="607.8" font-size="10.5" text-anchor="start" fill="#f00" textLength="37.7" lengthAdjust="spacingAndGlyphs" >ZPD LW</text>
<line x1="924.3" y1="616.5" x2="944.3" y2="616.5" stroke="#008000"/>
<text x="948.3" y="619.8" font-size="10.5" text-anchor="start" fill="#008000" textLength="41.7" lengthAdjust="spacingAndGlyphs" >ZPD MW</text>
<line x1="924.3" y1="628.5" x2="944.3" y2="628.5" stroke="#00f"/>
<text x="948.3" y="631.8" font-size="10.5" text-anchor="start" fill="#00f" textLength="39.0" lengthAdjust="spacingAndGlyphs" >ZPD SW</text>
</svg>
<svg class="plot" style="left:1077px;top:567px" width="438" height="240" viewBox="1077 567 438 240" font-family="Liberation Sans, sans-serif">
<defs><clipPath id="cp6"><rect x="1131.5" y="590.5" width="339.0" height="192.0"/></clipPath></defs>
<rect x="1077" y="567" width="438" height="240" fill="#c0c0c0"/>
<rect x="1131.5" y="590.5" width="339.0" height="192.0" fill="#fff"/>
<line x1="1172.9" y1="590.5" x2="1172.9" y2="782.5" class="g"/>
<line x1="1214.3" y1="590.5" x2="1214.3" y2="782.5" class="g"/>
<line x1="1255.6" y1="590.5" x2="1255.6" y2="782.5" class="g"/>
<line x1="1297.0" y1="590.5" x2="1297.0" y2="782.5" class="g"/>
<line x1="1338.4" y1="590.5" x2="1338.4" y2="782.5" class="g"/>
<line x1="1379.8" y1="590.5" x2="1379.8" y2="782.5" class="g"/>
<line x1="1421.2" y1="590.5" x2="1421.2" y2="782.5" class="g"/>
<line x1="1462.6" y1="590.5" x2="1462.6" y2="782.5" class="g"/>
<line x1="1131.5" y1="744.1" x2="1470.5" y2="744.1" class="g"/>
<line x1="1131.5" y1="705.7" x2="1470.5" y2="705.7" class="g"/>
<line x1="1131.5" y1="667.3" x2="1470.5" y2="667.3" class="g"/>
<line x1="1131.5" y1="628.9" x2="1470.5" y2="628.9" class="g"/>
<g clip-path="url(#cp6)">
<path d="M1216.7,782.5 L1217.3,729.8 L1217.6,751.8 L1218.1,772.2 L1218.4,743.9 L1218.9,726.5 L1219.2,757.2 L1219.7,767.5 L1220.0,732.5 L1220.5,733.2 L1220.9,752.3 L1221.3,742.4 L1221.7,730.3 L1222.1,741.7 L1222.5,761.1 L1222.9,753.0 L1223.3,734.4 L1223.8,736.2 L1224.1,751.7 L1224.6,781.7 L1224.9,743.8 L1225.4,734.9 L1225.7,792.9 L1226.2,787.6 L1226.5,740.4 L1227.0,726.1 L1227.3,770.5 L1227.8,755.9 L1228.1,742.6 L1228.6,742.6 L1228.9,756.9 L1229.4,758.1 L1229.7,735.9 L1230.2,738.3 L1230.5,751.2 L1231.0,750.1 L1231.3,730.6 L1231.8,729.0 L1232.2,751.3 L1232.6,747.4 L1233.0,730.0 L1233.4,739.0 L1233.8,763.6 L1234.2,747.2 L1234.6,733.6 L1235.1,728.1 L1235.4,743.5 L1235.9,744.7 L1236.2,724.8 L1236.7,730.9 L1237.0,754.1 L1237.5,765.0 L1237.8,732.4 L1238.3,733.2 L1238.6,745.9 L1239.1,755.4 L1239.4,742.6 L1239.9,739.5 L1240.2,755.8 L1240.7,741.2 L1241.0,729.2 L1241.5,731.1 L1241.8,753.8 L1242.3,742.7 L1242.6,725.7 L1243.1,732.2 L1243.5,745.7 L1243.9,746.3 L1244.3,732.7 L1244.7,737.5 L1245.1,744.3 L1245.5,757.9 L1245.9,727.1 L1246.4,720.8 L1246.7,737.7 L1247.2,751.0 L1247.5,743.2 L1248.0,730.2 L1248.3,765.3 L1248.8,746.7 L1249.1,733.1 L1249.6,731.0 L1249.9,737.9 L1250.4,750.3 L1250.7,737.2 L1251.2,730.1 L1251.5,756.3 L1252.0,763.8 L1252.3,725.3 L1252.8,741.4 L1253.1,800.4 L1253.6,741.0 L1253.9,724.0 L1254.4,734.2 L1254.8,746.3 L1255.2,765.7 L1255.6,734.5 L1256.0,731.6 L1256.4,747.9 L1256.8,742.8 L1257.2,732.2 L1257.7,729.6 L1258.0,739.4 L1258.5,747.9 L1258.8,733.4 L1259.3,722.0 L1259.6,746.2 L1260.1,741.2 L1260.4,732.0 L1260.9,726.2 L1261.2,747.6 L1261.7,752.6 L1262.0,736.1 L1262.5,731.0 L1262.8,749.5 L1263.3,738.6 L1263.6,725.6 L1264.1,730.5 L1264.4,751.9 L1264.9,738.8 L1265.2,725.2 L1265.7,730.6 L1266.1,743.8 L1266.5,747.2 L1266.9,732.3 L1267.3,732.4 L1267.7,750.9 L1268.1,763.2 L1268.5,735.3 L1269.0,737.2 L1269.3,763.6 L1269.8,741.2 L1270.1,730.1 L1270.6,725.8 L1270.9,754.9 L1271.4,789.4 L1271.7,721.4 L1272.2,725.7 L1272.5,741.8 L1273.0,742.1 L1273.3,737.6 L1273.8,721.6 L1274.1,734.6 L1274.6,759.2 L1274.9,718.3 L1275.4,730.6 L1275.7,757.0 L1276.2,753.0 L1276.5,726.5 L1277.0,721.3 L1277.4,750.1 L1277.8,746.6 L1278.2,720.1 L1278.6,727.3 L1279.0,764.3 L1279.4,741.4 L1279.8,728.9 L1280.3,718.5 L1280.6,747.8 L1281.1,759.5 L1281.4,725.2 L1281.9,720.0 L1282.2,748.8 L1282.7,756.0 L1283.0,725.9 L1283.5,727.3 L1283.8,743.4 L1284.3,750.2 L1284.6,734.0 L1285.1,721.4 L1285.4,736.7 L1285.9,755.6 L1286.2,724.9 L1286.7,723.0 L1287.0,753.5 L1287.5,753.9 L1287.8,723.9 L1288.3,724.2 L1288.7,765.1 L1289.1,731.3 L1289.5,720.4 L1289.9,717.1 L1290.3,760.7 L1290.7,737.2 L1291.1,734.4 L1291.6,724.7 L1291.9,734.7 L1292.4,742.5 L1292.7,722.7 L1293.2,723.5 L1293.5,757.8 L1294.0,751.7 L1294.3,733.5 L1294.8,726.6 L1295.1,746.2 L1295.6,783.9 L1295.9,725.9 L1296.4,728.8 L1296.7,756.6 L1297.2,736.9 L1297.5,729.7 L1298.0,736.5 L1298.3,745.0 L1298.8,728.8 L1299.1,715.6 L1299.6,725.8 L1300.0,732.7 L1300.4,746.6 L1300.8,675.8 L1301.2,675.8 L1301.6,768.3 L1302.0,762.1 L1302.4,725.8 L1302.9,728.8 L1303.2,754.1 L1303.7,740.6 L1304.0,725.7 L1304.5,728.5 L1304.8,747.9 L1305.3,756.1 L1305.6,719.1 L1306.1,719.7 L1306.4,737.0 L1306.9,754.9 L1307.2,716.0 L1307.7,727.4 L1308.0,745.1 L1308.5,742.2 L1308.8,720.6 L1309.3,730.2 L1309.6,736.1 L1310.1,740.9 L1310.4,721.8 L1310.9,719.0 L1311.3,744.6 L1311.7,746.8 L1312.1,734.6 L1312.5,724.9 L1312.9,745.3 L1313.3,762.8 L1313.7,735.3 L1314.2,725.1 L1314.5,746.1 L1315.0,746.2 L1315.3,732.6 L1315.8,726.7 L1316.1,755.2 L1316.6,737.8 L1316.9,720.4 L1317.4,729.9 L1317.7,755.0 L1318.2,749.4 L1318.5,730.3 L1319.0,730.3 L1319.3,737.1 L1319.8,776.3 L1320.1,725.6 L1320.6,733.0 L1320.9,767.6 L1321.4,740.8 L1321.7,726.4 L1322.2,724.1 L1322.6,740.0 L1323.0,742.1 L1323.4,730.5 L1323.8,728.7 L1324.2,751.2 L1324.6,751.2 L1325.0,732.8 L1325.5,739.8 L1325.8,759.8 L1326.3,746.0 L1326.6,732.2 L1327.1,727.1 L1327.4,744.7 L1327.9,786.9 L1328.2,732.5 L1328.7,727.4 L1329.0,759.1 L1329.5,751.8 L1329.8,723.0 L1330.3,729.8 L1330.6,743.5 L1331.1,770.5 L1331.4,731.4 L1331.9,727.1 L1332.2,740.0 L1332.7,760.5 L1333.0,732.7 L1333.5,735.5 L1333.9,750.6 L1334.3,757.2 L1334.7,726.6 L1335.1,738.2 L1335.5,750.3 L1335.9,754.7 L1336.3,732.2 L1336.8,725.6 L1337.1,766.4 L1337.6,746.1 L1337.9,730.8 L1338.4,720.7 L1338.7,754.5 L1339.2,754.0 L1339.5,732.1 L1340.0,730.4 L1340.3,772.7 L1340.8,745.8 L1341.1,731.9 L1341.6,725.7 L1341.9,762.9 L1342.4,766.3 L1342.7,731.3 L1343.2,733.9 L1343.5,791.4 L1344.0,766.3 L1344.3,733.9 L1344.8,729.7 L1345.2,743.4 L1345.6,747.1 L1346.0,724.7 L1346.4,725.3 L1346.8,747.4 L1347.2,746.7 L1347.6,726.9 L1348.1,731.0 L1348.4,785.7 L1348.9,764.5 L1349.2,734.1 L1349.7,735.1 L1350.0,739.6 L1350.5,778.1 L1350.8,727.9 L1351.3,727.6 L1351.6,754.0 L1352.1,751.9 L1352.4,726.7 L1352.9,740.2 L1353.2,761.2 L1353.7,756.9 L1354.0,724.0 L1354.5,730.3 L1354.8,759.6 L1355.3,767.6 L1355.6,728.0 L1356.1,737.9 L1356.5,771.6 L1356.9,759.7 L1357.3,731.1 L1357.7,729.3 L1358.1,746.5 L1358.5,753.2 L1358.9,737.0 L1359.4,731.0 L1359.7,751.1 L1360.2,746.5 L1360.5,724.0 L1361.0,729.1 L1361.3,783.0 L1361.8,763.6 L1362.1,731.8 L1362.6,742.6 L1362.9,768.3 L1363.4,747.0 L1363.7,739.1 L1364.2,738.7 L1364.5,743.3 L1365.0,741.5 L1365.3,730.6 L1365.8,731.3 L1366.1,746.4 L1366.6,768.4 L1366.9,734.0 L1367.4,733.5 L1367.8,755.5 L1368.2,755.9 L1368.6,748.2 L1369.0,745.1 L1369.4,753.2 L1369.8,752.8 L1370.2,731.7 L1370.7,729.4 L1371.0,766.6 L1371.5,744.0 L1371.8,724.4 L1372.3,731.7 L1372.6,758.5 L1373.1,744.1 L1373.4,732.0 L1373.9,740.5 L1374.2,760.0 L1374.7,746.6 L1375.0,730.2 L1375.5,732.7 L1375.8,762.5 L1376.3,759.4 L1376.6,736.7 L1377.1,740.7 L1377.4,754.2 L1377.9,770.7 L1378.2,737.7 L1378.7,735.5 L1379.1,753.5 L1379.5,760.1 L1379.9,734.4 L1380.3,732.2 L1380.7,743.0 L1381.1,786.7 L1381.5,737.1 L1382.0,730.5 L1382.3,743.4 L1382.8,757.1 L1383.1,729.1 L1383.6,736.9 L1383.9,755.8 L1384.4,750.2 L1384.7,731.7 L1385.2,735.0 L1385.5,753.4 L1386.1,782.5" fill="none" stroke="#f00" stroke-width="0.9" stroke-linejoin="round"/>
<path d="M1131.7,714.7 L1131.9,730.7 L1132.2,731.2 L1132.4,713.9 L1132.7,709.6 L1132.9,735.3 L1133.2,730.4 L1133.5,709.0 L1133.8,715.0 L1134.0,746.1 L1134.3,738.4 L1134.5,719.2 L1134.8,712.7 L1135.0,725.5 L1135.4,758.2 L1135.6,705.7 L1135.9,719.4 L1136.1,743.4 L1136.4,730.9 L1136.6,715.5 L1137.0,706.4 L1137.2,742.3 L1137.5,726.2 L1137.7,705.3 L1138.0,706.8 L1138.2,728.8 L1138.5,744.4 L1138.8,717.5 L1139.1,706.2 L1139.3,743.5 L1139.6,732.3 L1139.8,709.6 L1140.1,712.3 L1140.3,729.2 L1140.7,737.7 L1140.9,712.7 L1141.2,720.4 L1141.4,738.1 L1141.7,746.8 L1141.9,710.8 L1142.3,707.2 L1142.5,725.6 L1142.8,732.4 L1143.0,710.1 L1143.3,712.1 L1143.5,726.1 L1143.8,730.8 L1144.1,705.8 L1144.4,718.7 L1144.6,733.7 L1144.9,750.2 L1145.1,716.8 L1145.4,702.3 L1145.6,727.0 L1146.0,722.6 L1146.2,715.0 L1146.5,707.3 L1146.7,732.4 L1147.0,724.7 L1147.2,706.3 L1147.5,707.8 L1147.8,752.8 L1148.1,724.5 L1148.3,705.3 L1148.6,711.7 L1148.8,735.1 L1149.1,723.2 L1149.4,709.7 L1149.7,707.4 L1149.9,727.0 L1150.2,759.1 L1150.4,723.6 L1150.7,711.9 L1150.9,768.6 L1151.3,750.3 L1151.5,714.9 L1151.8,714.0 L1152.0,730.6 L1152.3,724.2 L1152.5,713.2 L1152.8,711.4 L1153.1,732.6 L1153.4,736.6 L1153.6,709.7 L1153.9,709.5 L1154.1,729.8 L1154.4,722.4 L1154.6,710.5 L1155.0,709.9 L1155.2,744.1 L1155.5,736.4 L1155.7,717.6 L1156.0,709.8 L1156.2,724.2 L1156.6,729.0 L1156.8,713.1 L1157.1,715.2 L1157.3,758.9 L1157.6,730.9 L1157.8,709.8 L1158.1,712.5 L1158.4,729.1 L1158.7,754.8 L1158.9,714.0 L1159.2,706.7 L1159.4,741.2 L1159.7,721.0 L1159.9,711.0 L1160.3,706.6 L1160.5,742.8 L1160.8,740.2 L1161.0,701.7 L1161.3,710.1 L1161.5,729.2 L1161.9,735.6 L1162.1,705.7 L1162.4,708.7 L1162.6,733.5 L1162.9,727.5 L1163.1,709.2 L1163.4,703.4 L1163.7,729.5 L1164.0,729.0 L1164.2,713.0 L1164.5,705.2 L1164.7,731.2 L1165.0,725.7 L1165.2,709.3 L1165.6,716.5 L1165.8,784.1 L1166.1,718.3 L1166.3,707.5 L1166.6,704.5 L1166.8,719.7 L1167.1,746.4 L1167.4,711.3 L1167.7,717.5 L1167.9,743.1 L1168.2,734.3 L1168.4,709.3 L1168.7,711.0 L1168.9,737.3 L1169.3,727.5 L1169.5,702.1 L1169.8,714.5 L1170.0,738.8 L1170.3,744.1 L1170.5,708.6 L1170.9,706.3 L1171.1,717.3 L1171.4,731.5 L1171.6,707.5 L1171.9,705.9 L1172.1,724.2 L1172.4,718.5 L1172.7,704.9 L1173.0,707.7 L1173.2,735.0 L1173.5,727.7 L1173.7,700.4 L1174.0,703.8 L1174.2,726.0 L1174.6,722.0 L1174.8,708.2 L1175.1,701.7 L1175.3,730.0 L1175.6,730.7 L1175.8,705.6 L1176.2,714.4 L1176.4,731.9 L1176.7,719.2 L1176.9,713.0 L1177.2,709.1 L1177.4,741.2 L1177.7,727.9 L1178.0,714.7 L1178.3,705.3 L1178.5,745.0 L1178.8,729.9 L1179.0,707.6 L1179.3,717.8 L1179.5,735.9 L1179.9,737.2 L1180.1,707.6 L1180.4,703.1 L1180.6,744.5 L1180.9,751.8 L1181.1,710.7 L1181.4,705.5 L1181.7,730.3 L1182.0,723.0 L1182.2,706.0 L1182.5,717.0 L1182.7,758.6 L1183.0,735.5 L1183.3,717.0 L1183.6,712.9 L1183.8,720.9 L1184.1,715.9 L1184.3,706.9 L1184.6,708.7 L1184.8,730.8 L1185.2,726.6 L1185.4,706.6 L1185.7,708.4 L1185.9,754.4 L1186.2,727.4 L1186.4,708.3 L1186.7,703.1 L1187.0,728.2 L1187.3,726.8 L1187.5,702.0 L1187.8,714.4 L1188.0,730.0 L1188.3,723.1 L1188.5,712.9 L1188.9,708.2 L1189.1,732.4 L1189.4,743.5 L1189.6,711.9 L1189.9,726.0 L1190.1,764.9 L1190.5,731.4 L1190.7,709.7 L1191.0,713.3 L1191.2,727.5 L1191.5,732.0 L1191.7,710.9 L1192.0,705.9 L1192.3,718.1 L1192.6,723.2 L1192.8,708.5 L1193.1,711.8 L1193.3,721.5 L1193.6,739.7 L1193.8,706.7 L1194.2,715.6 L1194.4,729.3 L1194.7,749.0 L1194.9,713.5 L1195.2,703.5 L1195.4,725.3 L1195.8,728.1 L1196.0,709.5 L1196.3,709.7 L1196.5,743.6 L1196.8,726.8 L1197.0,709.8 L1197.3,708.4 L1197.6,748.4 L1197.9,737.7 L1198.1,713.4 L1198.4,713.0 L1198.6,755.4 L1198.9,734.6 L1199.1,708.2 L1199.5,712.0 L1199.7,737.5 L1200.0,733.6 L1200.2,715.6 L1200.5,713.8 L1200.7,749.0 L1201.0,733.0 L1201.3,715.6 L1201.6,715.9 L1201.8,719.3 L1202.1,752.0 L1202.3,720.7 L1202.6,708.5 L1202.8,736.8 L1203.2,733.7 L1203.4,713.7 L1203.7,709.7 L1203.9,736.0 L1204.2,737.0 L1204.4,708.4 L1204.8,706.4 L1205.0,716.7 L1205.3,748.5 L1205.5,708.1 L1205.8,713.7 L1206.0,750.3 L1206.3,738.7 L1206.6,708.7 L1206.9,710.1 L1207.1,726.3 L1207.4,739.3 L1207.6,710.8 L1207.9,713.8 L1208.1,730.9 L1208.5,737.4 L1208.7,715.1 L1209.0,718.1 L1209.2,737.6 L1209.5,728.7 L1209.7,708.6 L1210.1,714.1 L1210.3,737.0 L1210.6,742.4 L1210.8,716.5 L1211.1,714.1 L1211.3,735.4 L1211.6,773.8 L1211.9,710.0 L1212.2,708.2 L1212.4,735.6 L1212.7,735.5 L1212.9,702.2 L1213.2,711.7 L1213.4,731.1 L1213.8,744.7 L1214.0,706.1 L1214.3,716.8 L1214.5,733.0 L1214.8,737.2 L1215.0,714.3 L1215.3,712.4 L1215.6,734.8 L1215.9,737.2 L1216.1,708.1 L1216.4,714.6 L1216.6,737.1 L1216.9,758.2 L1217.2,713.4 L1217.5,703.7 L1217.7,739.9 L1218.0,737.1 L1218.2,713.2 L1218.5,714.1 L1218.7,733.1 L1219.1,726.1 L1219.3,713.9 L1219.6,709.2 L1219.8,730.1 L1220.1,718.6 L1220.3,705.8 L1220.6,710.1 L1220.9,731.4 L1221.2,717.6 L1221.4,703.0 L1221.7,701.6 L1221.9,711.6 L1222.2,745.3 L1222.4,707.9 L1222.8,703.6 L1223.0,718.1 L1223.3,758.4 L1223.5,710.9 L1223.8,706.2 L1224.0,725.4 L1224.4,717.8 L1224.6,707.0 L1224.9,703.8 L1225.1,738.9 L1225.4,726.8 L1225.6,705.8 L1225.9,702.2 L1226.2,722.3 L1226.5,716.5 L1226.7,706.7 L1227.0,705.9 L1227.2,721.6 L1227.5,728.8 L1227.7,713.4 L1228.1,714.4 L1228.3,746.0 L1228.6,730.3 L1228.8,705.5 L1229.1,705.7 L1229.3,735.2 L1229.7,739.3 L1229.9,710.5 L1230.2,708.5 L1230.4,731.1 L1230.7,715.8 L1230.9,707.4 L1231.2,705.5 L1231.5,748.0 L1231.8,715.9 L1232.0,709.5 L1232.3,719.8 L1232.5,743.8 L1232.8,732.8 L1233.0,713.2 L1233.4,701.4 L1233.6,713.9 L1233.9,738.1 L1234.1,707.2 L1234.4,709.3 L1234.6,726.9 L1234.9,726.3 L1235.2,703.4 L1235.5,711.3 L1235.7,725.0 L1236.0,723.8 L1236.2,710.7 L1236.5,703.4 L1236.7,733.5 L1237.1,723.0 L1237.3,708.0 L1237.6,705.6 L1237.8,717.5 L1238.1,740.1 L1238.3,703.3 L1238.7,708.0 L1238.9,726.8 L1239.2,724.7 L1239.4,711.2 L1239.7,696.6 L1239.9,722.1 L1240.2,714.2 L1240.5,698.7 L1240.8,710.9 L1241.0,728.4 L1241.3,724.7 L1241.5,701.0 L1241.8,700.3 L1242.0,725.7 L1242.4,725.4 L1242.6,701.2 L1242.9,706.0 L1243.1,742.9 L1243.4,749.8 L1243.6,709.8 L1244.0,698.9 L1244.2,734.8 L1244.5,713.8 L1244.7,705.5 L1245.0,704.8 L1245.2,730.6 L1245.5,730.9 L1245.8,704.0 L1246.1,708.2 L1246.3,728.6 L1246.6,727.2 L1246.8,709.2 L1247.1,703.6 L1247.3,733.7 L1247.7,735.1 L1247.9,698.3 L1248.2,700.2 L1248.4,719.6 L1248.7,730.3 L1248.9,708.8 L1249.2,709.5 L1249.5,724.6 L1249.8,743.4 L1250.0,709.7 L1250.3,703.4 L1250.5,720.5 L1250.8,726.3 L1251.1,708.4 L1251.4,709.7 L1251.6,739.0 L1251.9,754.9 L1252.1,697.9 L1252.4,705.4 L1252.6,725.0 L1253.0,723.4 L1253.2,715.8 L1253.5,705.7 L1253.7,718.9 L1254.0,734.1 L1254.2,698.8 L1254.5,702.0 L1254.8,714.0 L1255.1,726.3 L1255.3,700.0 L1255.6,700.3 L1255.8,728.7 L1256.1,750.2 L1256.3,707.7 L1256.7,703.2 L1256.9,715.0 L1257.2,719.4 L1257.4,701.7 L1257.7,697.3 L1257.9,744.3 L1258.3,730.6 L1258.5,703.9 L1258.8,706.5 L1259.0,713.5 L1259.3,728.2 L1259.5,707.3 L1259.8,696.1 L1260.1,744.3 L1260.4,723.4 L1260.6,703.7 L1260.9,709.7 L1261.1,739.1 L1261.4,727.2 L1261.6,704.4 L1262.0,712.0 L1262.2,721.7 L1262.5,726.1 L1262.7,703.7 L1263.0,712.1 L1263.2,732.2 L1263.6,719.1 L1263.8,702.1 L1264.1,699.6 L1264.3,716.4 L1264.6,735.8 L1264.8,697.2 L1265.1,704.4 L1265.4,710.8 L1265.7,727.8 L1265.9,700.1 L1266.2,704.9 L1266.4,719.8 L1266.7,727.5 L1266.9,698.1 L1267.3,712.7 L1267.5,720.0 L1267.8,728.1 L1268.0,707.4 L1268.3,699.2 L1268.5,718.3 L1268.8,724.2 L1269.1,701.5 L1269.4,700.2 L1269.6,730.9 L1269.9,738.9 L1270.1,707.0 L1270.4,704.9 L1270.6,739.5 L1271.0,727.1 L1271.2,695.0 L1271.5,697.4 L1271.7,718.2 L1272.0,718.5 L1272.2,701.4 L1272.6,696.5 L1272.8,702.6 L1273.1,738.6 L1273.3,699.3 L1273.6,697.9 L1273.8,719.0 L1274.1,733.1 L1274.4,701.1 L1274.7,703.2 L1274.9,718.2 L1275.2,716.1 L1275.4,696.7 L1275.7,691.7 L1275.9,737.3 L1276.3,716.8 L1276.5,704.8 L1276.8,698.2 L1277.0,718.9 L1277.3,746.2 L1277.5,697.2 L1277.9,698.0 L1278.1,730.2 L1278.4,737.5 L1278.6,702.3 L1278.9,698.0 L1279.1,710.6 L1279.4,714.7 L1279.7,694.2 L1280.0,701.9 L1280.2,716.1 L1280.5,737.4 L1280.7,699.4 L1281.0,694.5 L1281.2,721.1 L1281.6,733.9 L1281.8,698.8 L1282.1,691.7 L1282.3,717.0 L1282.6,710.5 L1282.8,696.9 L1283.1,690.9 L1283.4,722.1 L1283.7,720.2 L1283.9,694.5 L1284.2,692.8 L1284.4,753.8 L1284.7,729.0 L1285.0,694.8 L1285.3,694.9 L1285.5,723.1 L1285.8,729.5 L1286.0,697.2 L1286.3,697.4 L1286.5,720.9 L1286.9,725.6 L1287.1,696.9 L1287.4,685.2 L1287.6,722.7 L1287.9,712.1 L1288.1,691.9 L1288.4,694.3 L1288.7,713.4 L1289.0,726.1 L1289.2,688.1 L1289.5,706.4 L1289.7,735.3 L1290.0,729.3 L1290.2,693.6 L1290.6,700.1 L1290.8,713.1 L1291.1,716.1 L1291.3,694.0 L1291.6,693.7 L1291.8,712.4 L1292.2,717.4 L1292.4,688.8 L1292.7,687.7 L1292.9,717.0 L1293.2,719.7 L1293.4,697.5 L1293.7,689.4 L1294.0,706.5 L1294.3,716.1 L1294.5,689.7 L1294.8,689.2 L1295.0,710.6 L1295.3,709.2 L1295.5,693.1 L1295.9,693.6 L1296.1,714.2 L1296.4,714.4 L1296.6,692.1 L1296.9,686.8 L1297.1,714.0 L1297.5,703.8 L1297.7,693.8 L1298.0,689.9 L1298.2,719.4 L1298.5,697.8 L1298.7,685.6 L1299.0,693.0 L1299.3,713.9 L1299.6,717.2 L1299.8,682.5 L1300.1,684.3 L1300.3,710.9 L1300.6,725.8 L1300.8,634.4 L1301.2,634.4 L1301.4,702.9 L1301.7,699.3 L1301.9,684.3 L1302.2,697.5 L1302.4,724.7 L1302.7,701.6 L1303.0,689.7 L1303.3,695.0 L1303.5,711.5 L1303.8,746.0 L1304.0,692.7 L1304.3,685.9 L1304.5,723.5 L1304.9,721.0 L1305.1,689.3 L1305.4,694.5 L1305.6,713.0 L1305.9,710.9 L1306.1,685.6 L1306.5,685.1 L1306.7,702.7 L1307.0,729.6 L1307.2,691.1 L1307.5,693.4 L1307.7,702.4 L1308.0,710.6 L1308.3,690.1 L1308.6,692.4 L1308.8,729.7 L1309.1,718.1 L1309.3,684.9 L1309.6,689.3 L1309.8,702.7 L1310.2,701.9 L1310.4,694.8 L1310.7,695.5 L1310.9,720.1 L1311.2,714.3 L1311.4,689.9 L1311.8,692.7 L1312.0,728.3 L1312.3,721.2 L1312.5,696.6 L1312.8,698.5 L1313.0,713.7 L1313.3,723.7 L1313.6,703.4 L1313.9,702.0 L1314.1,712.7 L1314.4,725.0 L1314.6,692.4 L1314.9,698.6 L1315.1,725.4 L1315.5,720.7 L1315.7,694.7 L1316.0,702.3 L1316.2,728.1 L1316.5,717.4 L1316.7,695.9 L1317.0,695.2 L1317.3,713.1 L1317.6,715.6 L1317.8,704.5 L1318.1,691.4 L1318.3,708.8 L1318.6,719.9 L1318.9,699.3 L1319.2,702.2 L1319.4,721.3 L1319.7,725.5 L1319.9,700.9 L1320.2,696.7 L1320.4,717.8 L1320.8,714.8 L1321.0,695.0 L1321.3,702.0 L1321.5,760.8 L1321.8,740.4 L1322.0,701.8 L1322.3,697.8 L1322.6,714.2 L1322.9,718.0 L1323.1,701.3 L1323.4,699.0 L1323.6,712.5 L1323.9,731.2 L1324.1,694.7 L1324.5,697.3 L1324.7,710.7 L1325.0,735.8 L1325.2,708.2 L1325.5,696.7 L1325.7,713.0 L1326.1,752.4 L1326.3,703.8 L1326.6,705.2 L1326.8,749.3 L1327.1,716.4 L1327.3,706.0 L1327.6,701.3 L1327.9,730.1 L1328.2,718.1 L1328.4,698.0 L1328.7,697.9 L1328.9,712.7 L1329.2,711.9 L1329.4,706.0 L1329.8,705.6 L1330.0,738.1 L1330.3,735.9 L1330.5,697.4 L1330.8,701.0 L1331.0,721.6 L1331.4,737.1 L1331.6,699.0 L1331.9,703.8 L1332.1,716.5 L1332.4,729.1 L1332.6,702.0 L1332.9,709.3 L1333.2,745.5 L1333.5,771.7 L1333.7,698.7 L1334.0,707.2 L1334.2,743.6 L1334.5,713.3 L1334.7,702.4 L1335.1,700.5 L1335.3,720.7 L1335.6,737.7 L1335.8,715.7 L1336.1,704.9 L1336.3,735.1 L1336.6,721.8 L1336.9,698.5 L1337.2,704.9 L1337.4,725.4 L1337.7,728.4 L1337.9,698.9 L1338.2,708.8 L1338.4,716.8 L1338.8,722.7 L1339.0,703.4 L1339.3,704.8 L1339.5,728.4 L1339.8,718.1 L1340.0,700.1 L1340.4,705.4 L1340.6,751.1 L1340.9,715.0 L1341.1,702.0 L1341.4,701.4 L1341.6,722.2 L1341.9,720.4 L1342.2,709.1 L1342.5,696.0 L1342.7,729.7 L1343.0,738.7 L1343.2,694.2 L1343.5,706.3 L1343.7,718.9 L1344.1,736.3 L1344.3,710.1 L1344.6,696.5 L1344.8,731.7 L1345.1,711.2 L1345.3,703.5 L1345.7,705.8 L1345.9,710.5 L1346.2,738.5 L1346.4,701.4 L1346.7,695.5 L1346.9,731.5 L1347.2,750.2 L1347.5,696.6 L1347.8,703.6 L1348.0,723.8 L1348.3,740.9 L1348.5,691.9 L1348.8,703.2 L1349.0,737.2 L1349.4,715.7 L1349.6,699.7 L1349.9,705.5 L1350.1,723.2 L1350.4,726.5 L1350.6,700.6 L1350.9,698.2 L1351.2,728.7 L1351.5,733.6 L1351.7,710.7 L1352.0,705.4 L1352.2,721.1 L1352.5,728.4 L1352.8,709.7 L1353.1,698.6 L1353.3,720.6 L1353.6,718.9 L1353.8,712.4 L1354.1,701.9 L1354.3,736.1 L1354.7,715.4 L1354.9,703.9 L1355.2,705.6 L1355.4,716.6 L1355.7,735.1 L1355.9,703.1 L1356.2,708.3 L1356.5,726.0 L1356.8,755.7 L1357.0,701.8 L1357.3,698.0 L1357.5,727.4 L1357.8,760.3 L1358.0,700.0 L1358.4,701.3 L1358.6,720.3 L1358.9,740.4 L1359.1,698.9 L1359.4,707.8 L1359.6,725.1 L1360.0,741.0 L1360.2,699.5 L1360.5,708.1 L1360.7,727.0 L1361.0,720.8 L1361.2,703.1 L1361.5,702.7 L1361.8,726.1 L1362.1,741.1 L1362.3,697.9 L1362.6,698.0 L1362.8,727.0 L1363.1,726.4 L1363.3,708.4 L1363.7,711.1 L1363.9,728.7 L1364.2,722.9 L1364.4,701.7 L1364.7,708.3 L1364.9,717.1 L1365.3,736.4 L1365.5,705.6 L1365.8,698.8 L1366.0,726.4 L1366.3,730.9 L1366.5,709.3 L1366.8,714.3 L1367.1,752.2 L1367.4,720.6 L1367.6,708.1 L1367.9,710.3 L1368.1,732.1 L1368.4,745.4 L1368.6,706.7 L1369.0,704.5 L1369.2,730.1 L1369.5,722.5 L1369.7,706.2 L1370.0,706.7 L1370.2,726.5 L1370.5,731.3 L1370.8,703.5 L1371.1,696.5 L1371.3,723.4 L1371.6,733.3 L1371.8,704.1 L1372.1,704.1 L1372.3,719.6 L1372.7,724.9 L1372.9,708.8 L1373.2,702.2 L1373.4,728.6 L1373.7,731.6 L1373.9,708.3 L1374.3,707.7 L1374.5,719.5 L1374.8,732.1 L1375.0,708.3 L1375.3,707.2 L1375.5,747.6 L1375.8,732.5 L1376.1,712.8 L1376.4,705.4 L1376.6,719.4 L1376.9,737.3 L1377.1,710.7 L1377.4,701.9 L1377.6,728.0 L1378.0,742.0 L1378.2,712.7 L1378.5,708.5 L1378.7,723.8 L1379.0,726.6 L1379.2,703.7 L1379.6,713.9 L1379.8,756.1 L1380.1,723.1 L1380.3,702.2 L1380.6,710.8 L1380.8,730.8 L1381.1,737.2 L1381.4,704.3 L1381.7,713.0 L1381.9,726.7 L1382.2,727.0 L1382.4,702.5 L1382.7,707.3 L1382.9,746.9 L1383.3,732.8 L1383.5,701.8 L1383.8,711.6 L1384.0,741.5 L1384.3,748.5 L1384.5,708.5 L1384.8,710.7 L1385.1,727.6 L1385.4,732.0 L1385.6,705.9 L1385.9,704.3 L1386.1,717.5 L1386.4,750.6 L1386.7,714.3 L1387.0,709.7 L1387.2,737.6 L1387.5,728.6 L1387.7,712.8 L1388.0,719.4 L1388.2,731.6 L1388.6,733.4 L1388.8,707.1 L1389.1,707.9 L1389.3,718.3 L1389.6,727.6 L1389.8,704.8 L1390.1,704.0 L1390.4,742.5 L1390.7,755.1 L1390.9,713.2 L1391.2,712.1 L1391.4,725.1 L1391.7,738.5 L1391.9,711.8 L1392.3,707.9 L1392.5,721.4 L1392.8,732.4 L1393.0,709.5 L1393.3,710.4 L1393.5,752.2 L1393.9,727.6 L1394.1,705.3 L1394.4,714.0 L1394.6,752.5 L1394.9,741.5 L1395.1,720.3 L1395.4,714.3 L1395.7,730.7 L1396.0,737.0 L1396.2,707.4 L1396.5,720.5 L1396.7,733.3 L1397.0,747.6 L1397.2,704.4 L1397.6,715.6 L1397.8,729.5 L1398.1,722.5 L1398.3,702.9 L1398.6,712.4 L1398.8,726.1 L1399.2,749.5 L1399.4,713.5 L1399.7,708.2 L1399.9,740.6 L1400.2,731.7 L1400.4,711.8 L1400.7,711.8 L1401.0,730.6 L1401.3,731.9 L1401.5,708.0 L1401.8,709.6 L1402.0,729.4 L1402.3,729.4 L1402.5,710.8 L1402.9,707.0 L1403.1,741.2 L1403.4,715.4 L1403.6,702.3 L1403.9,708.8 L1404.1,731.2 L1404.4,726.9 L1404.7,715.4 L1405.0,709.0 L1405.2,736.8 L1405.5,731.4 L1405.7,704.8 L1406.0,717.1 L1406.2,729.8 L1406.6,722.4 L1406.8,709.8 L1407.1,708.1 L1407.3,744.7 L1407.6,741.2 L1407.8,707.1 L1408.2,708.5 L1408.4,732.6 L1408.7,754.6 L1408.9,718.0 L1409.2,710.6 L1409.4,722.0 L1409.7,730.2 L1410.0,711.0 L1410.3,711.2 L1410.5,759.8 L1410.8,730.8 L1411.0,712.4 L1411.3,707.5 L1411.5,730.6 L1411.9,725.2 L1412.1,715.0 L1412.4,708.3 L1412.6,722.2 L1412.9,756.1 L1413.1,715.8 L1413.5,710.7 L1413.7,732.8 L1414.0,730.8 L1414.2,708.2 L1414.5,708.4 L1414.7,739.1 L1415.0,731.5 L1415.3,709.5 L1415.6,710.2 L1415.8,726.5 L1416.1,730.7 L1416.3,706.2 L1416.6,707.5 L1416.8,747.0 L1417.2,733.7 L1417.4,704.0 L1417.7,702.9 L1417.9,749.4 L1418.2,742.6 L1418.4,709.4 L1418.7,708.1 L1419.0,729.8 L1419.3,730.3 L1419.5,709.6 L1419.8,715.3 L1420.0,727.4 L1420.3,728.0 L1420.6,700.6 L1420.9,705.2 L1421.1,718.3 L1421.4,720.3 L1421.6,701.6 L1421.9,712.8 L1422.1,732.8 L1422.5,749.1 L1422.7,717.1 L1423.0,706.0 L1423.2,745.9 L1423.5,732.1 L1423.7,720.3 L1424.0,707.5 L1424.3,731.0 L1424.6,732.5 L1424.8,710.3 L1425.1,707.8 L1425.3,756.0 L1425.6,732.2 L1425.8,710.0 L1426.2,709.4 L1426.4,730.1 L1426.7,767.6 L1426.9,705.0 L1427.2,711.3 L1427.4,728.2 L1427.8,730.7 L1428.0,713.5 L1428.3,711.3 L1428.5,719.0 L1428.8,741.7 L1429.0,714.4 L1429.3,710.5 L1429.6,748.9 L1429.9,722.1 L1430.1,710.0 L1430.4,715.2 L1430.6,736.8 L1430.9,727.5 L1431.1,707.7 L1431.5,713.7 L1431.7,747.0 L1432.0,728.3 L1432.2,704.2 L1432.5,715.5 L1432.7,734.4 L1433.1,726.4 L1433.3,711.9 L1433.6,707.3 L1433.8,715.6 L1434.1,733.4 L1434.3,714.7 L1434.6,707.7 L1434.9,753.0 L1435.2,735.5 L1435.4,708.2 L1435.7,713.5 L1435.9,737.1 L1436.2,752.0 L1436.4,704.6 L1436.8,708.4 L1437.0,729.4 L1437.3,724.4 L1437.5,707.4 L1437.8,711.7 L1438.0,733.1 L1438.3,755.1 L1438.6,702.4 L1438.9,711.5 L1439.1,730.5 L1439.4,760.6 L1439.6,720.5 L1439.9,702.6 L1440.1,722.6 L1440.5,739.7 L1440.7,706.3 L1441.0,708.0 L1441.2,742.6 L1441.5,751.5 L1441.7,718.1 L1442.1,704.2 L1442.3,720.0 L1442.6,723.2 L1442.8,710.0 L1443.1,719.2 L1443.3,737.5 L1443.6,731.5 L1443.9,710.8 L1444.2,706.1 L1444.4,717.3 L1444.7,733.3 L1444.9,710.0 L1445.2,705.1 L1445.4,748.0 L1445.8,724.6 L1446.0,707.2 L1446.3,711.3 L1446.5,732.8 L1446.8,731.3 L1447.0,713.5 L1447.4,710.1 L1447.6,733.9 L1447.9,724.2 L1448.1,713.0 L1448.4,715.2 L1448.6,722.1 L1448.9,740.7 L1449.2,712.6 L1449.5,711.2 L1449.7,731.2 L1450.0,722.4 L1450.2,708.4 L1450.5,714.9 L1450.7,734.2 L1451.1,726.6 L1451.3,717.5 L1451.6,723.4 L1451.8,743.9 L1452.1,753.6 L1452.3,709.1 L1452.6,720.7 L1452.9,736.4 L1453.2,734.0 L1453.4,706.5 L1453.7,713.2 L1453.9,747.7 L1454.2,733.2 L1454.5,709.8 L1454.8,713.2 L1455.0,732.7 L1455.3,729.1 L1455.5,708.2 L1455.8,710.9 L1456.0,731.1 L1456.4,739.2 L1456.6,722.3 L1456.9,709.0 L1457.1,731.7 L1457.4,735.3 L1457.6,714.4 L1457.9,709.6 L1458.2,728.2 L1458.5,739.2 L1458.7,715.5 L1459.0,713.8 L1459.2,742.3 L1459.5,744.2 L1459.7,719.4 L1460.1,716.9 L1460.3,740.5 L1460.6,736.0 L1460.8,713.8 L1461.1,711.5 L1461.3,731.3 L1461.7,746.4 L1461.9,710.5 L1462.2,713.3 L1462.4,729.1 L1462.7,738.6 L1462.9,711.7 L1463.2,707.1 L1463.5,723.1 L1463.8,737.3 L1464.0,711.0 L1464.3,711.5 L1464.5,725.2 L1464.8,740.5 L1465.0,707.4 L1465.4,708.6 L1465.6,735.8 L1465.9,738.4 L1466.1,712.6 L1466.4,710.3 L1466.6,737.6 L1467.0,737.6 L1467.2,708.4 L1467.5,701.5 L1467.7,741.6 L1468.0,749.0 L1468.2,710.6 L1468.5,710.6 L1468.8,721.6 L1469.1,723.4 L1469.3,713.1 L1469.6,714.1 L1469.8,722.5 L1470.1,734.0 L1470.3,720.1" fill="none" stroke="#008000" stroke-width="0.8" stroke-linejoin="round"/>
<path d="M1131.7,720.7 L1131.9,734.5 L1132.2,729.4 L1132.4,714.7 L1132.7,713.1 L1132.9,744.9 L1133.2,729.0 L1133.5,711.8 L1133.8,715.6 L1134.0,742.7 L1134.3,731.9 L1134.5,713.7 L1134.8,713.1 L1135.0,742.8 L1135.4,734.6 L1135.6,711.4 L1135.9,711.5 L1136.1,730.1 L1136.4,733.0 L1136.6,715.8 L1137.0,717.8 L1137.2,730.5 L1137.5,726.4 L1137.7,712.3 L1138.0,718.3 L1138.2,738.6 L1138.5,730.8 L1138.8,717.4 L1139.1,720.8 L1139.3,738.5 L1139.6,724.1 L1139.8,711.5 L1140.1,720.1 L1140.3,739.4 L1140.7,733.6 L1140.9,711.3 L1141.2,715.1 L1141.4,734.4 L1141.7,753.6 L1141.9,714.4 L1142.3,710.0 L1142.5,726.0 L1142.8,729.4 L1143.0,715.0 L1143.3,712.4 L1143.5,738.9 L1143.8,738.8 L1144.1,718.9 L1144.4,719.1 L1144.6,743.6 L1144.9,728.8 L1145.1,714.8 L1145.4,717.2 L1145.6,740.0 L1146.0,721.4 L1146.2,711.1 L1146.5,714.9 L1146.7,743.6 L1147.0,730.4 L1147.2,713.8 L1147.5,715.7 L1147.8,736.5 L1148.1,738.7 L1148.3,716.7 L1148.6,715.2 L1148.8,734.9 L1149.1,737.6 L1149.4,722.8 L1149.7,711.3 L1149.9,740.4 L1150.2,737.0 L1150.4,722.8 L1150.7,721.8 L1150.9,743.3 L1151.3,727.0 L1151.5,712.7 L1151.8,715.6 L1152.0,739.5 L1152.3,732.0 L1152.5,714.6 L1152.8,718.0 L1153.1,732.5 L1153.4,727.1 L1153.6,717.2 L1153.9,721.4 L1154.1,745.4 L1154.4,729.6 L1154.6,721.4 L1155.0,710.0 L1155.2,729.9 L1155.5,726.0 L1155.7,716.2 L1156.0,716.7 L1156.2,749.9 L1156.6,736.0 L1156.8,719.3 L1157.1,715.4 L1157.3,721.8 L1157.6,725.1 L1157.8,718.0 L1158.1,721.7 L1158.4,731.0 L1158.7,751.5 L1158.9,718.2 L1159.2,709.4 L1159.4,726.1 L1159.7,736.9 L1159.9,712.1 L1160.3,714.3 L1160.5,720.0 L1160.8,738.9 L1161.0,711.0 L1161.3,714.5 L1161.5,740.2 L1161.9,730.7 L1162.1,709.8 L1162.4,711.5 L1162.6,727.9 L1162.9,742.2 L1163.1,715.0 L1163.4,720.3 L1163.7,732.0 L1164.0,725.3 L1164.2,708.9 L1164.5,713.4 L1164.7,723.2 L1165.0,726.3 L1165.2,706.1 L1165.6,713.4 L1165.8,753.3 L1166.1,734.2 L1166.3,708.8 L1166.6,710.1 L1166.8,721.7 L1167.1,747.0 L1167.4,723.3 L1167.7,706.1 L1167.9,730.4 L1168.2,723.4 L1168.4,712.2 L1168.7,711.7 L1168.9,732.3 L1169.3,749.1 L1169.5,709.5 L1169.8,717.5 L1170.0,727.1 L1170.3,735.8 L1170.5,709.7 L1170.9,712.1 L1171.1,736.9 L1171.4,744.2 L1171.6,718.7 L1171.9,714.3 L1172.1,731.1 L1172.4,733.5 L1172.7,711.1 L1173.0,715.4 L1173.2,736.1 L1173.5,724.9 L1173.7,713.9 L1174.0,713.3 L1174.2,743.8 L1174.6,728.4 L1174.8,707.6 L1175.1,708.9 L1175.3,718.2 L1175.6,725.9 L1175.8,716.2 L1176.2,707.7 L1176.4,720.9 L1176.7,723.9 L1176.9,709.1 L1177.2,704.5 L1177.4,727.4 L1177.7,745.3 L1178.0,723.5 L1178.3,713.7 L1178.5,743.7 L1178.8,733.7 L1179.0,712.4 L1179.3,709.8 L1179.5,731.0 L1179.9,726.5 L1180.1,707.1 L1180.4,713.9 L1180.6,771.5 L1180.9,742.5 L1181.1,711.0 L1181.4,707.8 L1181.7,737.0 L1182.0,739.7 L1182.2,707.5 L1182.5,712.9 L1182.7,735.8 L1183.0,728.4 L1183.3,708.2 L1183.6,712.3 L1183.8,718.4 L1184.1,729.6 L1184.3,707.7 L1184.6,713.2 L1184.8,734.9 L1185.2,755.7 L1185.4,709.1 L1185.7,712.2 L1185.9,750.8 L1186.2,741.9 L1186.4,714.4 L1186.7,710.4 L1187.0,730.5 L1187.3,721.9 L1187.5,706.8 L1187.8,709.8 L1188.0,723.7 L1188.3,739.7 L1188.5,718.4 L1188.9,716.3 L1189.1,728.2 L1189.4,740.1 L1189.6,706.1 L1189.9,712.9 L1190.1,737.0 L1190.5,735.1 L1190.7,719.5 L1191.0,705.5 L1191.2,727.6 L1191.5,731.8 L1191.7,714.8 L1192.0,717.2 L1192.3,749.4 L1192.6,742.0 L1192.8,719.3 L1193.1,712.2 L1193.3,747.1 L1193.6,735.5 L1193.8,711.7 L1194.2,707.5 L1194.4,724.2 L1194.7,727.8 L1194.9,713.2 L1195.2,712.4 L1195.4,730.7 L1195.8,758.8 L1196.0,707.6 L1196.3,718.8 L1196.5,746.1 L1196.8,751.2 L1197.0,713.1 L1197.3,713.6 L1197.6,731.6 L1197.9,729.7 L1198.1,715.7 L1198.4,717.1 L1198.6,729.6 L1198.9,725.7 L1199.1,713.8 L1199.5,710.6 L1199.7,737.0 L1200.0,725.6 L1200.2,717.9 L1200.5,715.7 L1200.7,734.2 L1201.0,731.5 L1201.3,712.6 L1201.6,712.9 L1201.8,722.3 L1202.1,738.0 L1202.3,712.7 L1202.6,711.3 L1202.8,727.8 L1203.2,725.6 L1203.4,708.3 L1203.7,718.1 L1203.9,743.6 L1204.2,742.0 L1204.4,712.8 L1204.8,721.8 L1205.0,737.6 L1205.3,731.2 L1205.5,716.3 L1205.8,713.0 L1206.0,729.1 L1206.3,752.5 L1206.6,711.8 L1206.9,711.6 L1207.1,728.3 L1207.4,734.0 L1207.6,717.1 L1207.9,709.6 L1208.1,734.7 L1208.5,726.1 L1208.7,714.4 L1209.0,707.4 L1209.2,733.7 L1209.5,729.5 L1209.7,715.5 L1210.1,713.6 L1210.3,726.6 L1210.6,757.7 L1210.8,713.5 L1211.1,716.1 L1211.3,738.3 L1211.6,725.5 L1211.9,709.5 L1212.2,706.6 L1212.4,724.7 L1212.7,723.4 L1212.9,714.4 L1213.2,718.1 L1213.4,735.2 L1213.8,737.2 L1214.0,720.0 L1214.3,721.2 L1214.5,753.0 L1214.8,739.5 L1215.0,715.1 L1215.3,720.2 L1215.6,736.7 L1215.9,726.8 L1216.1,714.3 L1216.4,710.4 L1216.6,735.8 L1216.9,719.8 L1217.2,711.6 L1217.5,711.2 L1217.7,732.2 L1218.0,728.5 L1218.2,710.4 L1218.5,711.9 L1218.7,732.1 L1219.1,730.3 L1219.3,716.9 L1219.6,702.8 L1219.8,729.1 L1220.1,727.4 L1220.3,713.5 L1220.6,705.6 L1220.9,728.8 L1221.2,733.9 L1221.4,713.9 L1221.7,710.8 L1221.9,731.2 L1222.2,742.0 L1222.4,717.2 L1222.8,714.2 L1223.0,732.8 L1223.3,731.9 L1223.5,709.8 L1223.8,711.3 L1224.0,732.1 L1224.4,730.6 L1224.6,709.3 L1224.9,711.5 L1225.1,725.8 L1225.4,733.9 L1225.6,714.4 L1225.9,707.9 L1226.2,735.0 L1226.5,740.7 L1226.7,709.6 L1227.0,708.0 L1227.2,722.6 L1227.5,753.1 L1227.7,708.7 L1228.1,714.3 L1228.3,725.1 L1228.6,743.5 L1228.8,709.8 L1229.1,704.6 L1229.3,724.6 L1229.7,714.1 L1229.9,706.2 L1230.2,711.9 L1230.4,730.8 L1230.7,726.9 L1230.9,714.7 L1231.2,707.1 L1231.5,754.6 L1231.8,735.1 L1232.0,711.8 L1232.3,717.2 L1232.5,734.6 L1232.8,721.9 L1233.0,710.2 L1233.4,711.0 L1233.6,728.5 L1233.9,746.3 L1234.1,710.8 L1234.4,712.1 L1234.6,722.3 L1234.9,736.1 L1235.2,705.3 L1235.5,708.4 L1235.7,717.1 L1236.0,722.3 L1236.2,705.9 L1236.5,708.7 L1236.7,725.5 L1237.1,740.3 L1237.3,714.4 L1237.6,708.3 L1237.8,720.2 L1238.1,726.7 L1238.3,704.0 L1238.7,711.7 L1238.9,738.8 L1239.2,737.9 L1239.4,718.6 L1239.7,714.5 L1239.9,727.0 L1240.2,727.6 L1240.5,705.9 L1240.8,712.7 L1241.0,728.3 L1241.3,726.3 L1241.5,702.8 L1241.8,702.2 L1242.0,724.4 L1242.4,717.9 L1242.6,705.9 L1242.9,706.7 L1243.1,717.4 L1243.4,726.1 L1243.6,710.9 L1244.0,719.2 L1244.2,731.7 L1244.5,725.5 L1244.7,707.0 L1245.0,706.4 L1245.2,718.9 L1245.5,729.3 L1245.8,712.7 L1246.1,711.5 L1246.3,741.8 L1246.6,730.0 L1246.8,704.6 L1247.1,701.1 L1247.3,713.1 L1247.7,719.3 L1247.9,701.8 L1248.2,702.2 L1248.4,736.9 L1248.7,724.9 L1248.9,709.4 L1249.2,706.9 L1249.5,731.4 L1249.8,742.7 L1250.0,699.3 L1250.3,703.0 L1250.5,724.1 L1250.8,717.7 L1251.1,708.3 L1251.4,704.8 L1251.6,716.4 L1251.9,748.7 L1252.1,703.8 L1252.4,705.9 L1252.6,740.6 L1253.0,718.5 L1253.2,700.2 L1253.5,708.9 L1253.7,729.0 L1254.0,725.0 L1254.2,701.8 L1254.5,703.8 L1254.8,727.5 L1255.1,719.7 L1255.3,708.2 L1255.6,711.3 L1255.8,736.6 L1256.1,724.1 L1256.3,705.7 L1256.7,710.3 L1256.9,729.8 L1257.2,741.4 L1257.4,705.4 L1257.7,706.3 L1257.9,725.2 L1258.3,734.1 L1258.5,707.2 L1258.8,701.1 L1259.0,730.5 L1259.3,714.2 L1259.5,703.7 L1259.8,699.6 L1260.1,723.7 L1260.4,715.7 L1260.6,707.1 L1260.9,717.2 L1261.1,724.6 L1261.4,721.0 L1261.6,707.9 L1262.0,697.5 L1262.2,729.4 L1262.5,722.8 L1262.7,714.5 L1263.0,705.7 L1263.2,719.7 L1263.6,722.0 L1263.8,702.4 L1264.1,702.5 L1264.3,728.6 L1264.6,727.4 L1264.8,707.6 L1265.1,702.2 L1265.4,726.7 L1265.7,729.3 L1265.9,706.8 L1266.2,705.3 L1266.4,722.5 L1266.7,723.2 L1266.9,704.6 L1267.3,708.6 L1267.5,728.1 L1267.8,722.7 L1268.0,703.7 L1268.3,704.7 L1268.5,726.6 L1268.8,724.7 L1269.1,709.0 L1269.4,706.2 L1269.6,740.7 L1269.9,723.9 L1270.1,709.4 L1270.4,700.1 L1270.6,720.2 L1271.0,728.5 L1271.2,705.0 L1271.5,699.1 L1271.7,715.1 L1272.0,744.4 L1272.2,700.0 L1272.6,701.8 L1272.8,725.1 L1273.1,712.0 L1273.3,704.8 L1273.6,702.9 L1273.8,724.3 L1274.1,728.2 L1274.4,700.4 L1274.7,699.3 L1274.9,738.8 L1275.2,711.9 L1275.4,704.4 L1275.7,702.9 L1275.9,747.6 L1276.3,725.5 L1276.5,701.0 L1276.8,697.9 L1277.0,723.1 L1277.3,711.3 L1277.5,704.1 L1277.9,705.5 L1278.1,721.3 L1278.4,719.0 L1278.6,696.5 L1278.9,703.4 L1279.1,717.7 L1279.4,719.6 L1279.7,697.7 L1280.0,694.0 L1280.2,722.3 L1280.5,721.2 L1280.7,692.8 L1281.0,702.2 L1281.2,733.1 L1281.6,727.5 L1281.8,702.9 L1282.1,697.2 L1282.3,731.4 L1282.6,721.8 L1282.8,701.3 L1283.1,702.0 L1283.4,715.5 L1283.7,720.6 L1283.9,701.6 L1284.2,699.8 L1284.4,721.3 L1284.7,720.5 L1285.0,693.5 L1285.3,701.0 L1285.5,716.1 L1285.8,711.9 L1286.0,706.4 L1286.3,695.8 L1286.5,712.1 L1286.9,714.4 L1287.1,703.7 L1287.4,693.5 L1287.6,715.0 L1287.9,710.3 L1288.1,694.5 L1288.4,702.6 L1288.7,722.8 L1289.0,718.7 L1289.2,691.6 L1289.5,692.5 L1289.7,708.6 L1290.0,714.0 L1290.2,696.7 L1290.6,695.6 L1290.8,747.3 L1291.1,711.9 L1291.3,696.0 L1291.6,695.3 L1291.8,708.3 L1292.2,712.2 L1292.4,703.7 L1292.7,698.9 L1292.9,743.9 L1293.2,716.8 L1293.4,693.5 L1293.7,700.0 L1294.0,713.8 L1294.3,710.6 L1294.5,692.3 L1294.8,694.1 L1295.0,709.8 L1295.3,718.9 L1295.5,692.2 L1295.9,692.1 L1296.1,714.7 L1296.4,709.1 L1296.6,696.7 L1296.9,694.1 L1297.1,706.8 L1297.5,705.2 L1297.7,688.2 L1298.0,683.4 L1298.2,727.6 L1298.5,708.1 L1298.7,689.0 L1299.0,693.8 L1299.3,708.9 L1299.6,725.4 L1299.8,691.3 L1300.1,687.2 L1300.3,721.0 L1300.6,748.5 L1300.8,646.4 L1301.2,646.4 L1301.4,713.1 L1301.7,706.0 L1301.9,693.5 L1302.2,697.3 L1302.4,714.8 L1302.7,704.4 L1303.0,688.3 L1303.3,699.2 L1303.5,723.9 L1303.8,723.9 L1304.0,692.1 L1304.3,694.5 L1304.5,741.1 L1304.9,728.3 L1305.1,695.7 L1305.4,690.5 L1305.6,700.9 L1305.9,717.7 L1306.1,694.6 L1306.5,697.7 L1306.7,706.3 L1307.0,744.0 L1307.2,695.9 L1307.5,693.0 L1307.7,712.2 L1308.0,719.1 L1308.3,697.3 L1308.6,701.0 L1308.8,710.6 L1309.1,706.8 L1309.3,696.3 L1309.6,689.7 L1309.8,698.3 L1310.2,716.4 L1310.4,692.2 L1310.7,692.1 L1310.9,709.4 L1311.2,752.8 L1311.4,693.4 L1311.8,689.0 L1312.0,734.4 L1312.3,711.4 L1312.5,700.3 L1312.8,699.3 L1313.0,722.6 L1313.3,714.1 L1313.6,694.1 L1313.9,703.5 L1314.1,712.3 L1314.4,724.9 L1314.6,694.5 L1314.9,702.0 L1315.1,716.2 L1315.5,712.7 L1315.7,697.4 L1316.0,701.3 L1316.2,749.5 L1316.5,721.0 L1316.7,699.6 L1317.0,697.1 L1317.3,714.6 L1317.6,720.0 L1317.8,698.2 L1318.1,705.0 L1318.3,715.2 L1318.6,721.7 L1318.9,693.4 L1319.2,697.9 L1319.4,717.9 L1319.7,713.4 L1319.9,701.6 L1320.2,697.9 L1320.4,714.3 L1320.8,727.6 L1321.0,704.6 L1321.3,693.2 L1321.5,709.5 L1321.8,716.3 L1322.0,699.8 L1322.3,706.8 L1322.6,738.5 L1322.9,742.8 L1323.1,707.9 L1323.4,712.6 L1323.6,729.0 L1323.9,725.1 L1324.1,696.5 L1324.5,708.7 L1324.7,714.5 L1325.0,731.8 L1325.2,701.1 L1325.5,700.6 L1325.7,724.6 L1326.1,731.2 L1326.3,704.7 L1326.6,697.3 L1326.8,711.6 L1327.1,730.4 L1327.3,706.2 L1327.6,701.3 L1327.9,719.1 L1328.2,734.8 L1328.4,694.9 L1328.7,705.4 L1328.9,716.3 L1329.2,732.9 L1329.4,707.7 L1329.8,699.8 L1330.0,715.2 L1330.3,720.7 L1330.5,702.8 L1330.8,709.0 L1331.0,722.2 L1331.4,721.5 L1331.6,707.9 L1331.9,700.7 L1332.1,733.6 L1332.4,732.8 L1332.6,708.3 L1332.9,706.2 L1333.2,718.1 L1333.5,725.6 L1333.7,701.9 L1334.0,700.9 L1334.2,723.5 L1334.5,723.8 L1334.7,712.7 L1335.1,707.7 L1335.3,727.9 L1335.6,721.4 L1335.8,707.8 L1336.1,702.0 L1336.3,716.2 L1336.6,734.1 L1336.9,705.5 L1337.2,708.3 L1337.4,756.2 L1337.7,729.2 L1337.9,701.7 L1338.2,708.2 L1338.4,715.5 L1338.8,730.7 L1339.0,703.8 L1339.3,705.1 L1339.5,713.8 L1339.8,730.6 L1340.0,702.4 L1340.4,699.7 L1340.6,726.3 L1340.9,734.6 L1341.1,709.5 L1341.4,706.3 L1341.6,715.8 L1341.9,719.4 L1342.2,704.6 L1342.5,709.6 L1342.7,727.3 L1343.0,723.1 L1343.2,701.9 L1343.5,700.1 L1343.7,714.2 L1344.1,725.3 L1344.3,704.4 L1344.6,699.0 L1344.8,714.4 L1345.1,737.0 L1345.3,708.0 L1345.7,712.4 L1345.9,730.5 L1346.2,720.8 L1346.4,708.0 L1346.7,704.7 L1346.9,718.4 L1347.2,724.2 L1347.5,705.8 L1347.8,702.7 L1348.0,736.6 L1348.3,715.3 L1348.5,706.2 L1348.8,702.6 L1349.0,724.2 L1349.4,724.0 L1349.6,703.4 L1349.9,710.5 L1350.1,732.1 L1350.4,723.1 L1350.6,712.2 L1350.9,706.5 L1351.2,730.9 L1351.5,750.4 L1351.7,704.6 L1352.0,703.1 L1352.2,740.4 L1352.5,735.5 L1352.8,707.0 L1353.1,707.1 L1353.3,736.8 L1353.6,724.8 L1353.8,708.7 L1354.1,710.0 L1354.3,726.5 L1354.7,721.0 L1354.9,703.2 L1355.2,709.4 L1355.4,725.8 L1355.7,750.9 L1355.9,699.2 L1356.2,702.1 L1356.5,747.0 L1356.8,733.9 L1357.0,704.4 L1357.3,703.7 L1357.5,722.4 L1357.8,717.6 L1358.0,715.7 L1358.4,708.1 L1358.6,725.3 L1358.9,732.3 L1359.1,701.5 L1359.4,699.0 L1359.6,712.3 L1360.0,732.3 L1360.2,708.9 L1360.5,700.9 L1360.7,730.8 L1361.0,723.2 L1361.2,711.5 L1361.5,702.6 L1361.8,755.5 L1362.1,717.7 L1362.3,704.0 L1362.6,704.7 L1362.8,712.9 L1363.1,748.2 L1363.3,701.8 L1363.7,701.0 L1363.9,714.2 L1364.2,723.0 L1364.4,703.8 L1364.7,699.3 L1364.9,726.6 L1365.3,734.1 L1365.5,706.3 L1365.8,713.4 L1366.0,737.3 L1366.3,733.8 L1366.5,703.3 L1366.8,704.1 L1367.1,734.7 L1367.4,724.6 L1367.6,711.6 L1367.9,710.6 L1368.1,737.5 L1368.4,713.6 L1368.6,702.6 L1369.0,708.0 L1369.2,726.0 L1369.5,727.2 L1369.7,711.7 L1370.0,714.6 L1370.2,726.7 L1370.5,731.1 L1370.8,701.8 L1371.1,706.3 L1371.3,721.4 L1371.6,723.5 L1371.8,706.1 L1372.1,712.3 L1372.3,740.8 L1372.7,733.5 L1372.9,705.7 L1373.2,713.2 L1373.4,733.9 L1373.7,721.2 L1373.9,710.9 L1374.3,713.5 L1374.5,723.9 L1374.8,724.3 L1375.0,714.1 L1375.3,706.3 L1375.5,737.4 L1375.8,724.0 L1376.1,706.0 L1376.4,718.2 L1376.6,729.6 L1376.9,732.4 L1377.1,712.8 L1377.4,708.1 L1377.6,726.1 L1378.0,723.8 L1378.2,708.2 L1378.5,709.4 L1378.7,726.2 L1379.0,730.4 L1379.2,711.6 L1379.6,705.5 L1379.8,723.2 L1380.1,733.1 L1380.3,705.4 L1380.6,710.9 L1380.8,724.9 L1381.1,733.1 L1381.4,707.5 L1381.7,716.2 L1381.9,728.2 L1382.2,736.2 L1382.4,714.1 L1382.7,713.7 L1382.9,731.9 L1383.3,746.2 L1383.5,706.8 L1383.8,719.2 L1384.0,726.7 L1384.3,737.2 L1384.5,705.0 L1384.8,716.2 L1385.1,735.9 L1385.4,726.9 L1385.6,709.7 L1385.9,705.3 L1386.1,727.8 L1386.4,732.1 L1386.7,712.2 L1387.0,716.4 L1387.2,734.4 L1387.5,733.0 L1387.7,713.1 L1388.0,711.5 L1388.2,725.7 L1388.6,732.6 L1388.8,715.4 L1389.1,708.5 L1389.3,732.3 L1389.6,737.2 L1389.8,715.5 L1390.1,718.7 L1390.4,738.5 L1390.7,736.5 L1390.9,715.7 L1391.2,714.7 L1391.4,722.1 L1391.7,737.5 L1391.9,709.4 L1392.3,716.5 L1392.5,746.1 L1392.8,769.2 L1393.0,709.0 L1393.3,713.1 L1393.5,743.0 L1393.9,746.6 L1394.1,707.5 L1394.4,717.1 L1394.6,745.1 L1394.9,726.3 L1395.1,715.3 L1395.4,711.8 L1395.7,728.6 L1396.0,740.0 L1396.2,719.9 L1396.5,711.8 L1396.7,750.6 L1397.0,732.3 L1397.2,712.4 L1397.6,716.9 L1397.8,728.0 L1398.1,744.4 L1398.3,710.4 L1398.6,717.1 L1398.8,732.8 L1399.2,731.7 L1399.4,712.6 L1399.7,714.2 L1399.9,731.9 L1400.2,729.7 L1400.4,720.4 L1400.7,718.8 L1401.0,724.9 L1401.3,743.2 L1401.5,708.6 L1401.8,712.8 L1402.0,724.8 L1402.3,726.2 L1402.5,710.6 L1402.9,714.1 L1403.1,746.4 L1403.4,734.8 L1403.6,706.1 L1403.9,711.9 L1404.1,727.9 L1404.4,748.7 L1404.7,710.5 L1405.0,716.5 L1405.2,731.2 L1405.5,733.6 L1405.7,711.7 L1406.0,714.1 L1406.2,743.2 L1406.6,741.7 L1406.8,714.2 L1407.1,717.7 L1407.3,752.9 L1407.6,731.9 L1407.8,711.2 L1408.2,714.6 L1408.4,733.2 L1408.7,730.9 L1408.9,713.3 L1409.2,715.9 L1409.4,738.2 L1409.7,722.9 L1410.0,713.9 L1410.3,715.6 L1410.5,725.2 L1410.8,729.2 L1411.0,710.0 L1411.3,716.5 L1411.5,733.3 L1411.9,747.0 L1412.1,708.2 L1412.4,711.3 L1412.6,746.2 L1412.9,735.7 L1413.1,719.0 L1413.5,708.4 L1413.7,736.6 L1414.0,741.7 L1414.2,709.2 L1414.5,712.7 L1414.7,758.5 L1415.0,726.6 L1415.3,710.0 L1415.6,710.6 L1415.8,731.1 L1416.1,731.2 L1416.3,715.3 L1416.6,713.8 L1416.8,732.6 L1417.2,731.7 L1417.4,715.4 L1417.7,708.1 L1417.9,724.3 L1418.2,745.9 L1418.4,715.7 L1418.7,713.6 L1419.0,726.5 L1419.3,734.0 L1419.5,713.9 L1419.8,711.5 L1420.0,756.9 L1420.3,729.6 L1420.6,711.0 L1420.9,713.6 L1421.1,724.0 L1421.4,747.8 L1421.6,710.6 L1421.9,710.7 L1422.1,722.4 L1422.5,740.0 L1422.7,707.2 L1423.0,719.2 L1423.2,722.4 L1423.5,734.3 L1423.7,716.3 L1424.0,707.5 L1424.3,726.2 L1424.6,735.4 L1424.8,704.4 L1425.1,710.0 L1425.3,724.5 L1425.6,725.4 L1425.8,709.1 L1426.2,706.3 L1426.4,734.7 L1426.7,743.5 L1426.9,717.7 L1427.2,709.9 L1427.4,727.0 L1427.8,731.5 L1428.0,710.5 L1428.3,718.5 L1428.5,728.0 L1428.8,734.7 L1429.0,707.9 L1429.3,712.1 L1429.6,759.1 L1429.9,723.3 L1430.1,714.0 L1430.4,710.5 L1430.6,728.2 L1430.9,734.0 L1431.1,715.6 L1431.5,711.4 L1431.7,750.7 L1432.0,749.3 L1432.2,711.1 L1432.5,715.3 L1432.7,734.0 L1433.1,743.7 L1433.3,716.0 L1433.6,709.8 L1433.8,726.7 L1434.1,728.1 L1434.3,717.0 L1434.6,711.2 L1434.9,728.7 L1435.2,725.1 L1435.4,709.9 L1435.7,710.0 L1435.9,723.0 L1436.2,739.9 L1436.4,714.0 L1436.8,710.6 L1437.0,759.7 L1437.3,740.7 L1437.5,715.6 L1437.8,714.9 L1438.0,741.5 L1438.3,730.1 L1438.6,715.0 L1438.9,711.8 L1439.1,741.7 L1439.4,756.7 L1439.6,719.7 L1439.9,711.7 L1440.1,733.1 L1440.5,740.4 L1440.7,713.1 L1441.0,718.5 L1441.2,740.7 L1441.5,736.0 L1441.7,716.9 L1442.1,707.7 L1442.3,735.2 L1442.6,723.2 L1442.8,711.5 L1443.1,715.3 L1443.3,731.0 L1443.6,744.9 L1443.9,714.1 L1444.2,706.4 L1444.4,718.2 L1444.7,733.9 L1444.9,717.9 L1445.2,723.0 L1445.4,775.1 L1445.8,726.6 L1446.0,711.0 L1446.3,714.2 L1446.5,740.5 L1446.8,742.8 L1447.0,715.7 L1447.4,713.1 L1447.6,725.9 L1447.9,734.7 L1448.1,721.3 L1448.4,714.1 L1448.6,738.3 L1448.9,744.2 L1449.2,718.8 L1449.5,713.0 L1449.7,733.5 L1450.0,755.2 L1450.2,711.7 L1450.5,711.2 L1450.7,749.1 L1451.1,733.6 L1451.3,714.3 L1451.6,719.2 L1451.8,730.3 L1452.1,728.6 L1452.3,709.4 L1452.6,712.6 L1452.9,727.1 L1453.2,732.7 L1453.4,712.2 L1453.7,714.0 L1453.9,738.5 L1454.2,728.0 L1454.5,717.9 L1454.8,714.8 L1455.0,733.1 L1455.3,733.1 L1455.5,711.5 L1455.8,719.3 L1456.0,727.1 L1456.4,748.3 L1456.6,713.4 L1456.9,714.1 L1457.1,724.9 L1457.4,746.1 L1457.6,722.1 L1457.9,720.9 L1458.2,741.2 L1458.5,736.8 L1458.7,711.9 L1459.0,717.0 L1459.2,741.4 L1459.5,733.6 L1459.7,719.7 L1460.1,713.3 L1460.3,724.9 L1460.6,771.8 L1460.8,719.1 L1461.1,714.0 L1461.3,757.9 L1461.7,725.0 L1461.9,707.2 L1462.2,713.7 L1462.4,725.4 L1462.7,733.7 L1462.9,718.0 L1463.2,713.3 L1463.5,729.6 L1463.8,752.9 L1464.0,719.0 L1464.3,717.4 L1464.5,737.9 L1464.8,751.2 L1465.0,718.9 L1465.4,712.5 L1465.6,744.4 L1465.9,731.8 L1466.1,712.2 L1466.4,717.2 L1466.6,741.3 L1467.0,734.1 L1467.2,715.9 L1467.5,718.5 L1467.7,729.3 L1468.0,726.8 L1468.2,712.9 L1468.5,712.5 L1468.8,741.5 L1469.1,735.2 L1469.3,714.0 L1469.6,714.9 L1469.8,741.1 L1470.1,742.1 L1470.3,714.8" fill="none" stroke="#00f" stroke-width="0.8" stroke-linejoin="round"/>
</g>
<rect x="1131.5" y="590.5" width="339.0" height="192.0" fill="none" stroke="#141414" stroke-width=".9"/>
<line x1="1131.5" y1="782.5" x2="1131.5" y2="779.0" class="t"/>
<line x1="1131.5" y1="590.5" x2="1131.5" y2="594.0" class="t"/>
<text x="1131.5" y="792.6" font-size="10" text-anchor="middle" fill="#000" textLength="4.8" lengthAdjust="spacingAndGlyphs" >0</text>
<line x1="1172.9" y1="782.5" x2="1172.9" y2="779.0" class="t"/>
<line x1="1172.9" y1="590.5" x2="1172.9" y2="594.0" class="t"/>
<text x="1172.9" y="792.6" font-size="10" text-anchor="middle" fill="#000" textLength="14.5" lengthAdjust="spacingAndGlyphs" >500</text>
<line x1="1214.3" y1="782.5" x2="1214.3" y2="779.0" class="t"/>
<line x1="1214.3" y1="590.5" x2="1214.3" y2="594.0" class="t"/>
<text x="1214.3" y="792.6" font-size="10" text-anchor="middle" fill="#000" textLength="19.4" lengthAdjust="spacingAndGlyphs" >1000</text>
<line x1="1255.6" y1="782.5" x2="1255.6" y2="779.0" class="t"/>
<line x1="1255.6" y1="590.5" x2="1255.6" y2="594.0" class="t"/>
<text x="1255.6" y="792.6" font-size="10" text-anchor="middle" fill="#000" textLength="19.4" lengthAdjust="spacingAndGlyphs" >1500</text>
<line x1="1297.0" y1="782.5" x2="1297.0" y2="779.0" class="t"/>
<line x1="1297.0" y1="590.5" x2="1297.0" y2="594.0" class="t"/>
<text x="1297.0" y="792.6" font-size="10" text-anchor="middle" fill="#000" textLength="19.4" lengthAdjust="spacingAndGlyphs" >2000</text>
<line x1="1338.4" y1="782.5" x2="1338.4" y2="779.0" class="t"/>
<line x1="1338.4" y1="590.5" x2="1338.4" y2="594.0" class="t"/>
<text x="1338.4" y="792.6" font-size="10" text-anchor="middle" fill="#000" textLength="19.4" lengthAdjust="spacingAndGlyphs" >2500</text>
<line x1="1379.8" y1="782.5" x2="1379.8" y2="779.0" class="t"/>
<line x1="1379.8" y1="590.5" x2="1379.8" y2="594.0" class="t"/>
<text x="1379.8" y="792.6" font-size="10" text-anchor="middle" fill="#000" textLength="19.4" lengthAdjust="spacingAndGlyphs" >3000</text>
<line x1="1421.2" y1="782.5" x2="1421.2" y2="779.0" class="t"/>
<line x1="1421.2" y1="590.5" x2="1421.2" y2="594.0" class="t"/>
<text x="1421.2" y="792.6" font-size="10" text-anchor="middle" fill="#000" textLength="19.4" lengthAdjust="spacingAndGlyphs" >3500</text>
<line x1="1462.6" y1="782.5" x2="1462.6" y2="779.0" class="t"/>
<line x1="1462.6" y1="590.5" x2="1462.6" y2="594.0" class="t"/>
<text x="1462.6" y="792.6" font-size="10" text-anchor="middle" fill="#000" textLength="19.4" lengthAdjust="spacingAndGlyphs" >4000</text>
<line x1="1131.5" y1="782.5" x2="1135.5" y2="782.5" class="t"/>
<line x1="1470.5" y1="782.5" x2="1466.5" y2="782.5" class="t"/>
<text x="1122.5" y="787.0" font-size="10" text-anchor="end" textLength="9.6" lengthAdjust="spacingAndGlyphs">10</text>
<text x="1127.5" y="782.0" font-size="6.5" text-anchor="end">0</text>
<line x1="1131.5" y1="744.1" x2="1135.5" y2="744.1" class="t"/>
<line x1="1470.5" y1="744.1" x2="1466.5" y2="744.1" class="t"/>
<text x="1122.5" y="748.6" font-size="10" text-anchor="end" textLength="9.6" lengthAdjust="spacingAndGlyphs">10</text>
<text x="1127.5" y="743.6" font-size="6.5" text-anchor="end">1</text>
<line x1="1131.5" y1="705.7" x2="1135.5" y2="705.7" class="t"/>
<line x1="1470.5" y1="705.7" x2="1466.5" y2="705.7" class="t"/>
<text x="1122.5" y="710.2" font-size="10" text-anchor="end" textLength="9.6" lengthAdjust="spacingAndGlyphs">10</text>
<text x="1127.5" y="705.2" font-size="6.5" text-anchor="end">2</text>
<line x1="1131.5" y1="667.3" x2="1135.5" y2="667.3" class="t"/>
<line x1="1470.5" y1="667.3" x2="1466.5" y2="667.3" class="t"/>
<text x="1122.5" y="671.8" font-size="10" text-anchor="end" textLength="9.6" lengthAdjust="spacingAndGlyphs">10</text>
<text x="1127.5" y="666.8" font-size="6.5" text-anchor="end">3</text>
<line x1="1131.5" y1="628.9" x2="1135.5" y2="628.9" class="t"/>
<line x1="1470.5" y1="628.9" x2="1466.5" y2="628.9" class="t"/>
<text x="1122.5" y="633.4" font-size="10" text-anchor="end" textLength="9.6" lengthAdjust="spacingAndGlyphs">10</text>
<text x="1127.5" y="628.4" font-size="6.5" text-anchor="end">4</text>
<line x1="1131.5" y1="590.5" x2="1135.5" y2="590.5" class="t"/>
<line x1="1470.5" y1="590.5" x2="1466.5" y2="590.5" class="t"/>
<text x="1122.5" y="595.0" font-size="10" text-anchor="end" textLength="9.6" lengthAdjust="spacingAndGlyphs">10</text>
<text x="1127.5" y="590.0" font-size="6.5" text-anchor="end">5</text>
<text x="1301.0" y="587.0" font-size="10.5" text-anchor="middle" fill="#000" textLength="77.0" lengthAdjust="spacingAndGlyphs" >IFG Magnitudes</text>
<rect x="1392.5" y="595.5" width="73.0" height="46.0" fill="#fff" stroke="#1c1c1c" stroke-width=".9"/>
<line x1="1399" y1="604.5" x2="1414" y2="604.5" stroke="#f00"/>
<text x="1424.3" y="608.2" font-size="10" text-anchor="start" fill="#000" textLength="33.3" lengthAdjust="spacingAndGlyphs" >IFG LW</text>
<line x1="1399" y1="619.5" x2="1414" y2="619.5" stroke="#008000"/>
<text x="1424.3" y="623.2" font-size="10" text-anchor="start" fill="#000" textLength="37.3" lengthAdjust="spacingAndGlyphs" >IFG MW</text>
<line x1="1399" y1="634.5" x2="1414" y2="634.5" stroke="#00f"/>
<text x="1424.3" y="638.2" font-size="10" text-anchor="start" fill="#000" textLength="34.7" lengthAdjust="spacingAndGlyphs" >IFG SW</text>
</svg>

</body></html>
